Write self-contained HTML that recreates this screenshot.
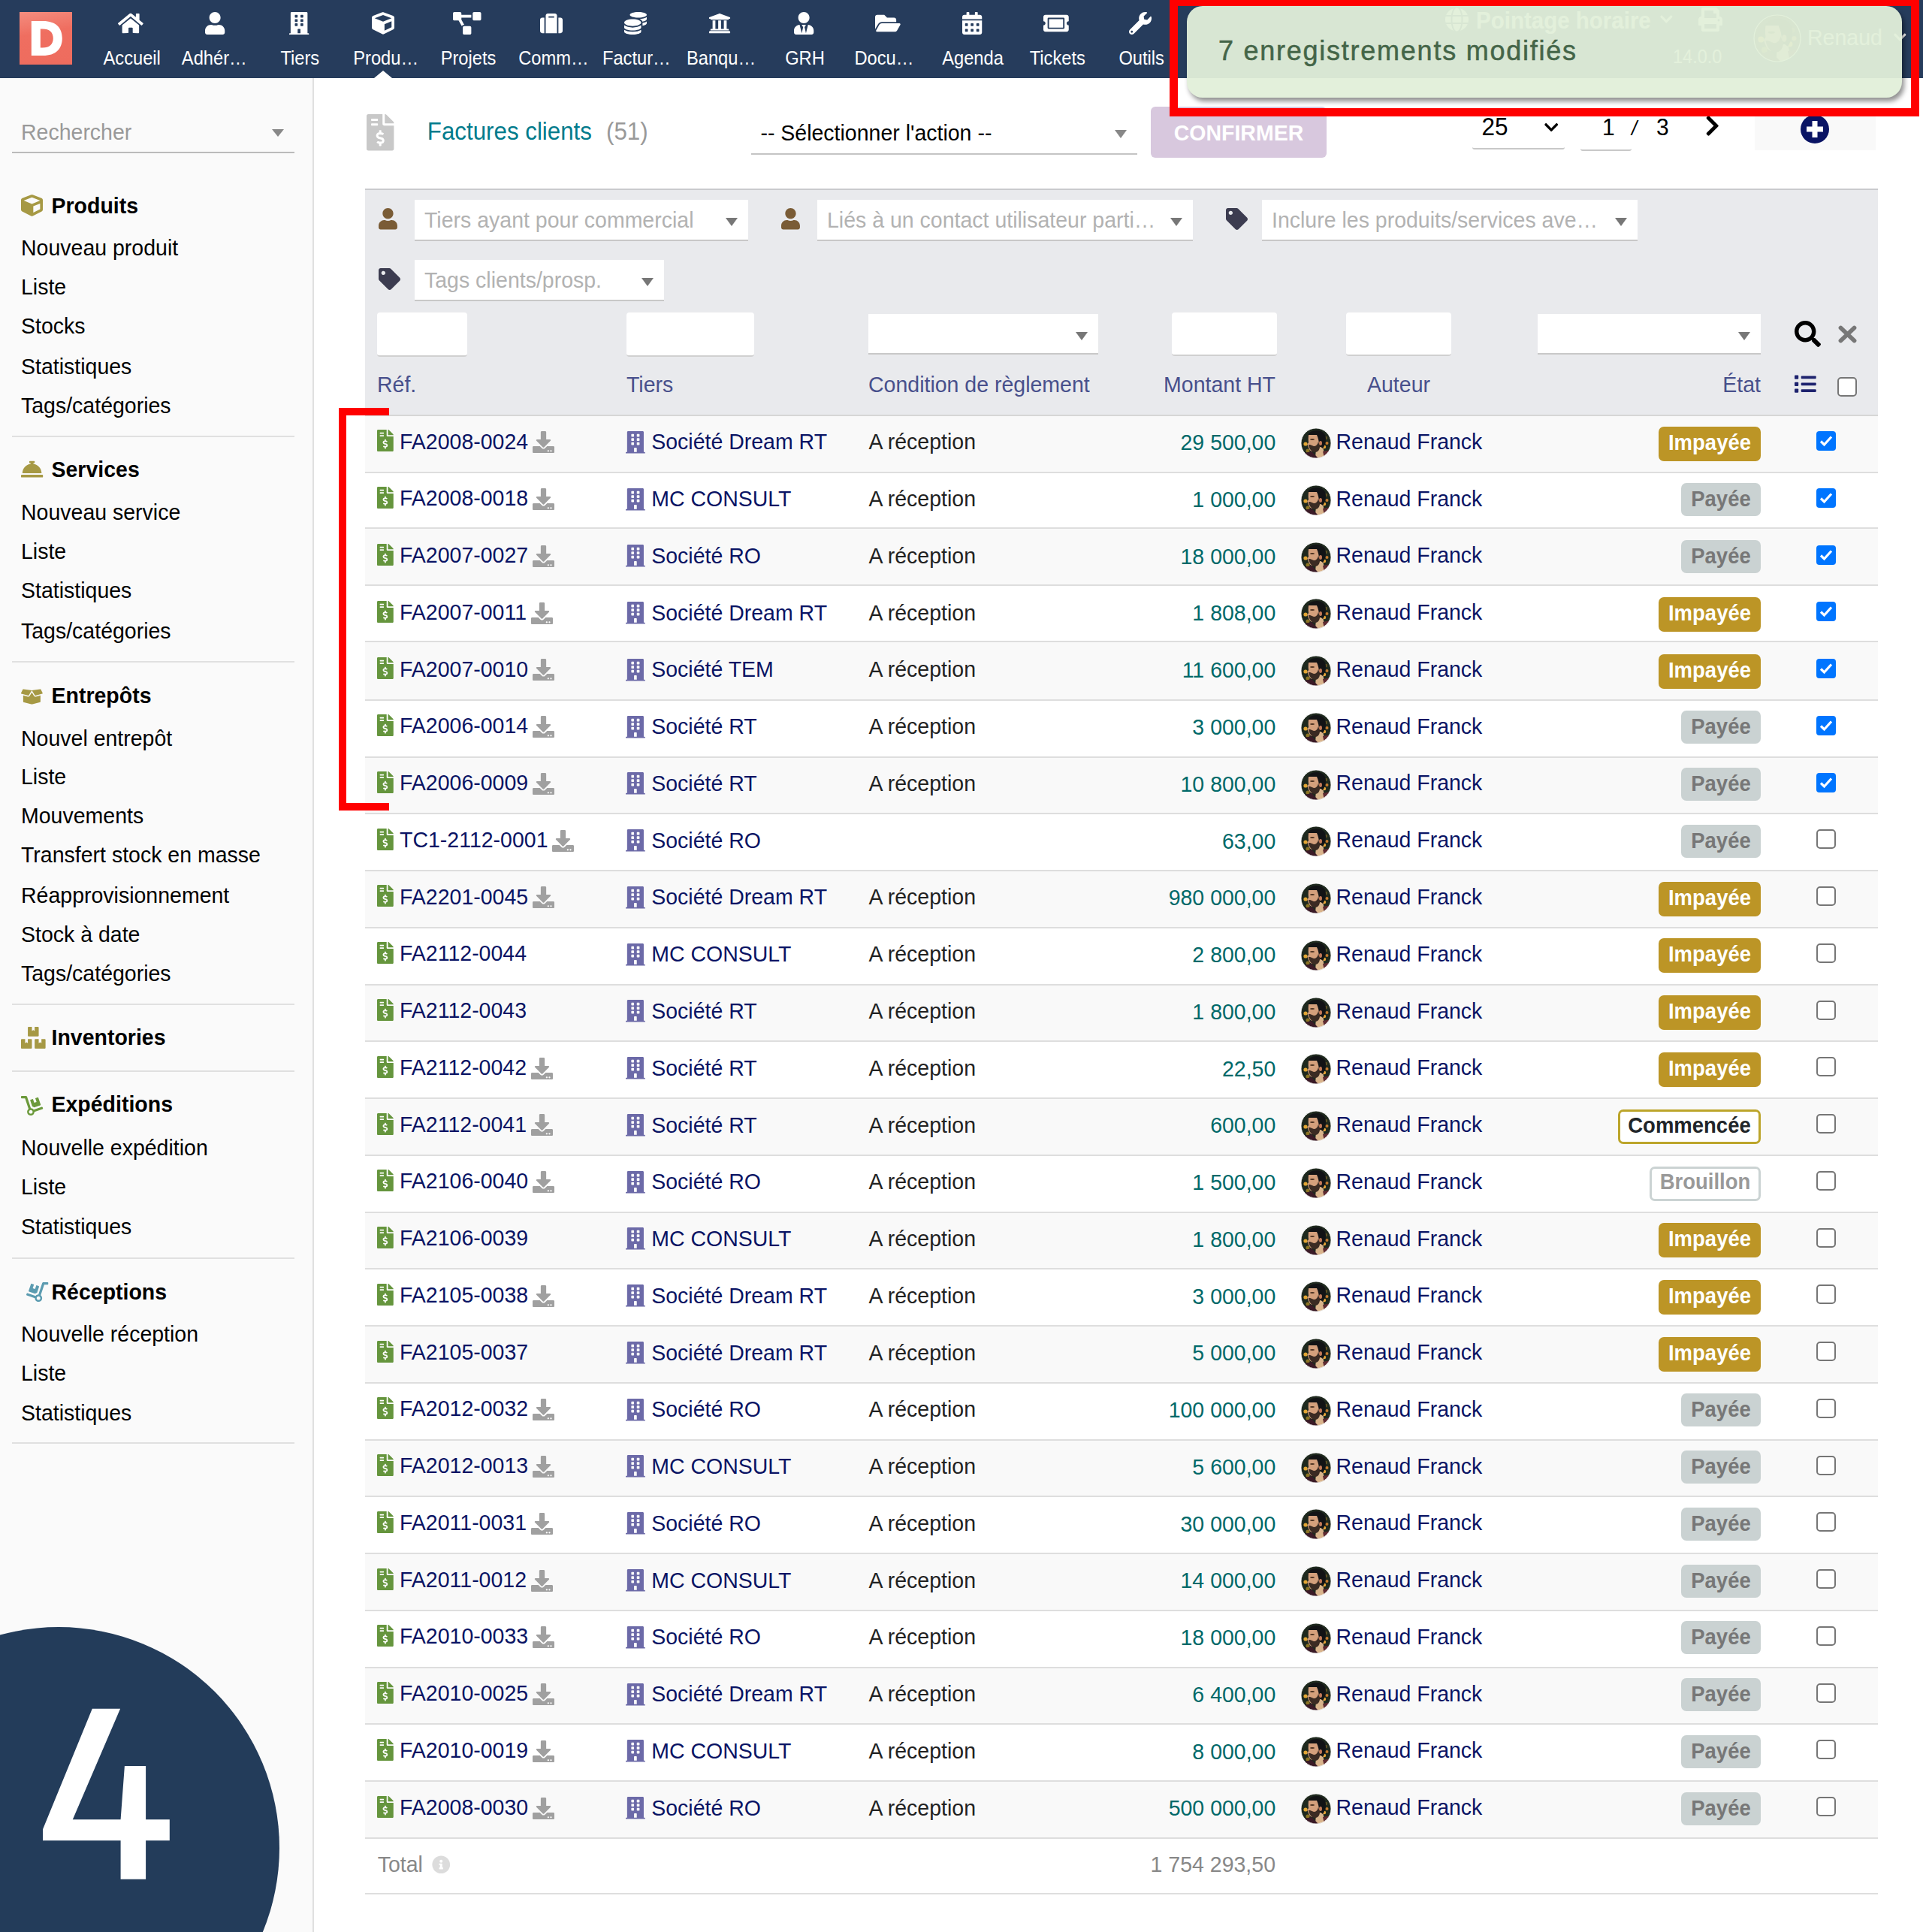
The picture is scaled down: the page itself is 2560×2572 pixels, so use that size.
<!DOCTYPE html><html><head><meta charset="utf-8"><title>Factures clients</title><style>
html,body{margin:0;padding:0;}
body{width:2560px;height:2572px;position:relative;overflow:hidden;background:#fff;font-family:"Liberation Sans",sans-serif;}
.t{position:absolute;white-space:nowrap;line-height:normal;}
.b{position:absolute;box-sizing:border-box;}
.i{position:absolute;overflow:visible;}

</style></head><body>
<svg style="position:absolute;width:0;height:0"><defs><clipPath id="avc"><circle cx="20" cy="20" r="20"/></clipPath><g id="av"><g clip-path="url(#avc)"><rect width="40" height="40" fill="#1f291e"/><circle cx="6" cy="21" r="2.6" fill="#e2a634"/><circle cx="31" cy="25" r="2.2" fill="#e8a536"/><circle cx="34.5" cy="20" r="2" fill="#c47a30"/><circle cx="9" cy="30" r="2.6" fill="#8c7424"/><circle cx="33" cy="13" r="2.2" fill="#5e5226"/><path d="M20 27 L29 24 L32 40 L19 40z" fill="#d9b48c"/><path d="M0 40 L5 33 L14 31 L23 40z" fill="#3a1a26"/><path d="M29 31 L40 29 L40 40 L31 40z" fill="#5e2a32"/><path d="M9 12 C9 6 14 3 21 3 C28 3 33 7 33 14 C33 19 31 24 29 27 L25 24 L22 16 L10 16z" fill="#121315"/><path d="M10 9 L21 9 C23 13 24 18 24 23 C23 28 20 31 16 31 C13 31 11 29 10 26 L8.3 21.5 L10 19 C9.5 15 9.5 12 10 9z" fill="#d4a07c"/><path d="M10 22 C11 28 14 32 19 32 C23 32 25 28 25 24 L23 18 C22 22 20 24 17 24 L12 22z" fill="#3b2b23"/><ellipse cx="15" cy="15" rx="3" ry="0.9" fill="#4a3020"/><ellipse cx="26" cy="20" rx="2" ry="3" fill="#c27a58"/></g><circle cx="20" cy="20" r="20" fill="none" stroke="#fff" stroke-width="0.8"/></g></defs></svg>
<div class="b" style="left:0px;top:104px;width:418px;height:2468px;background:#fafafa;"></div>
<div class="b" style="left:416px;top:104px;width:2px;height:2468px;background:#e0e0e0;"></div>
<div class="b" style="left:0px;top:0px;width:2560px;height:104px;background:#263c5c;"></div>
<div class="b" style="left:26px;top:16px;width:70px;height:70px;background:linear-gradient(170deg,#f48d7f 0%,#ef6e60 40%,#ee6c5e 100%);"></div>
<svg class="i" style="left:26px;top:16px;width:70px;height:70px" viewBox="0 0 70 70"><path fill="#fff" fill-rule="evenodd" d="M15.8 12 h15.5 c17 0 25.5 9 25.5 23 s-8.5 23-25.5 23 H15.8z M27.8 22.5 v25 h3 c9 0 14-4.5 14-12.5 s-5-12.5-14-12.5z"/></svg>
<svg class="i" style="left:157.12px;top:16.00px;width:33.75px;height:30px;" viewBox="0 0 576 512"><path fill="#fff" d="M280.37 148.26L96 300.11V464a16 16 0 0 0 16 16l112.06-.29a16 16 0 0 0 15.92-16V368a16 16 0 0 1 16-16h64a16 16 0 0 1 16 16v95.64a16 16 0 0 0 16 16.05L464 480a16 16 0 0 0 16-16V300L295.67 148.26a12.19 12.19 0 0 0-15.3 0zM571.6 251.47L488 182.56V44.05a12 12 0 0 0-12-12h-56a12 12 0 0 0-12 12v72.61L318.47 43a48 48 0 0 0-61 0L4.34 251.47a12 12 0 0 0-1.6 16.9l25.5 31A12 12 0 0 0 45.15 301l235.22-193.74a12.19 12.19 0 0 1 15.3 0L530.9 301a12 12 0 0 0 16.9-1.6l25.5-31a12 12 0 0 0-1.7-16.93z"/></svg>
<div class="t " style="left:-124.30000000000001px;width:600px;text-align:center;top:64.5px;font-size:23.7px;color:#fff;transform:scaleY(1.06);transform-origin:0 21px;">Accueil</div>
<svg class="i" style="left:272.88px;top:16.00px;width:26.25px;height:30px;" viewBox="0 0 448 512"><path fill="#fff" d="M224 256c70.7 0 128-57.3 128-128S294.7 0 224 0 96 57.3 96 128s57.3 128 128 128zm89.6 32h-16.7c-22.2 10.2-46.9 16-72.9 16s-50.6-5.8-72.9-16h-16.7C60.2 288 0 348.2 0 422.4V464c0 26.5 21.5 48 48 48h352c26.5 0 48-21.5 48-48v-41.6c0-74.2-60.2-134.4-134.4-134.4z"/></svg>
<div class="t " style="left:-14.699999999999989px;width:600px;text-align:center;top:64.5px;font-size:23.7px;color:#fff;transform:scaleY(1.06);transform-origin:0 21px;">Adhér…</div>
<svg class="i" style="left:385.18px;top:16.00px;width:26.25px;height:30px;" viewBox="0 0 448 512"><path fill="#fff" d="M436 480h-20V24c0-13.255-10.745-24-24-24H56C42.745 0 32 10.745 32 24v456H12c-6.627 0-12 5.373-12 12v20h448v-20c0-6.627-5.373-12-12-12zM128 76c0-6.627 5.373-12 12-12h40c6.627 0 12 5.373 12 12v40c0 6.627-5.373 12-12 12h-40c-6.627 0-12-5.373-12-12V76zm0 96c0-6.627 5.373-12 12-12h40c6.627 0 12 5.373 12 12v40c0 6.627-5.373 12-12 12h-40c-6.627 0-12-5.373-12-12v-40zm52 148h-40c-6.627 0-12-5.373-12-12v-40c0-6.627 5.373-12 12-12h40c6.627 0 12 5.373 12 12v40c0 6.627-5.373 12-12 12zm76 160h-64v-84c0-6.627 5.373-12 12-12h40c6.627 0 12 5.373 12 12v84zm64-172c0 6.627-5.373 12-12 12h-40c-6.627 0-12-5.373-12-12v-40c0-6.627 5.373-12 12-12h40c6.627 0 12 5.373 12 12v40zm0-96c0 6.627-5.373 12-12 12h-40c-6.627 0-12-5.373-12-12v-40c0-6.627 5.373-12 12-12h40c6.627 0 12 5.373 12 12v40zm0-96c0 6.627-5.373 12-12 12h-40c-6.627 0-12-5.373-12-12V76c0-6.627 5.373-12 12-12h40c6.627 0 12 5.373 12 12v40z"/></svg>
<div class="t " style="left:99.30000000000001px;width:600px;text-align:center;top:64.5px;font-size:23.7px;color:#fff;transform:scaleY(1.06);transform-origin:0 21px;">Tiers</div>
<svg class="i" style="left:495.00px;top:16.00px;width:30.00px;height:30px;" viewBox="0 0 512 512"><path fill="#fff" d="M239.1 6.3l-208 78c-18.7 7-31.1 25-31.1 45v225.1c0 18.2 10.3 34.8 26.5 42.9l208 104c13.5 6.8 29.4 6.8 42.9 0l208-104c16.3-8.1 26.5-24.8 26.5-42.9V129.3c0-20-12.4-37.9-31.1-44.9l-208-78C262 2.2 250 2.2 239.1 6.3zM256 68.4l192 72v1.1l-192 78-192-78v-1.1l192-72zm32 356V275.5l160-65v133.9l-160 80z"/></svg>
<div class="t " style="left:213.70000000000005px;width:600px;text-align:center;top:64.5px;font-size:23.7px;color:#fff;transform:scaleY(1.06);transform-origin:0 21px;">Produ…</div>
<svg class="i" style="left:603.25px;top:16.00px;width:37.50px;height:30px;" viewBox="0 0 640 512"><path fill="#fff" d="M384 320H256c-17.67 0-32 14.33-32 32v128c0 17.67 14.33 32 32 32h128c17.67 0 32-14.33 32-32V352c0-17.67-14.33-32-32-32zM192 32c0-17.67-14.33-32-32-32H32C14.33 0 0 14.33 0 32v128c0 17.67 14.33 32 32 32h95.72l73.16 128.04C211.98 300.98 232.4 288 256 288h.28L192 175.51V128h224V64H192V32zM608 0H480c-17.67 0-32 14.33-32 32v128c0 17.67 14.33 32 32 32h128c17.67 0 32-14.33 32-32V32c0-17.67-14.33-32-32-32z"/></svg>
<div class="t " style="left:323.5px;width:600px;text-align:center;top:64.5px;font-size:23.7px;color:#fff;transform:scaleY(1.06);transform-origin:0 21px;">Projets</div>
<svg class="i" style="left:719.00px;top:16.00px;width:30.00px;height:30px;" viewBox="0 0 512 512"><path fill="#fff" d="M128 480h256V80c0-26.5-21.5-48-48-48H176c-26.5 0-48 21.5-48 48v400zm64-384h128v32H192V96zm320 80v256c0 26.5-21.5 48-48 48h-48V128h48c26.5 0 48 21.5 48 48zM96 480H48c-26.5 0-48-21.5-48-48V176c0-26.5 21.5-48 48-48h48v352z"/></svg>
<div class="t " style="left:436.9px;width:600px;text-align:center;top:64.5px;font-size:23.7px;color:#fff;transform:scaleY(1.06);transform-origin:0 21px;">Comm…</div>
<svg class="i" style="left:831.00px;top:16.00px;width:30.00px;height:30px;" viewBox="0 0 512 512"><path fill="#fff" d="M0 405.3V448c0 35.3 86 64 192 64s192-28.7 192-64v-42.7C342.7 434.4 267.2 448 192 448S41.3 434.4 0 405.3zM320 128c106 0 192-28.7 192-64S426 0 320 0 128 28.7 128 64s86 64 192 64zM0 300.4V352c0 35.3 86 64 192 64s192-28.7 192-64v-51.6c-41.3 34-116.9 51.6-192 51.6S41.3 334.4 0 300.4zm416 11c57.3-11.1 96-31.7 96-55.4v-42.7c-23.2 16.4-57.3 27.6-96 34.5v63.6zM192 160C86 160 0 195.8 0 240s86 80 192 80 192-35.8 192-80-86-80-192-80zm219.3 56.3c60-10.8 100.7-32 100.7-56.3v-42.7c-35.5 25.1-96.5 38.6-160.7 41.8 29.5 14.3 51.2 33.5 60 57.2z"/></svg>
<div class="t " style="left:547.4px;width:600px;text-align:center;top:64.5px;font-size:23.7px;color:#fff;transform:scaleY(1.06);transform-origin:0 21px;">Factur…</div>
<svg class="i" style="left:943.00px;top:16.00px;width:30.00px;height:30px;" viewBox="0 0 512 512"><path fill="#fff" d="M496 128v16a8 8 0 0 1-8 8h-24v12c0 6.627-5.373 12-12 12H60c-6.627 0-12-5.373-12-12v-12H24a8 8 0 0 1-8-8v-16a8 8 0 0 1 4.941-7.392l232-88a7.996 7.996 0 0 1 6.118 0l232 88A8 8 0 0 1 496 128zm-24 304H40c-13.255 0-24 10.745-24 24v16a8 8 0 0 0 8 8h464a8 8 0 0 0 8-8v-16c0-13.255-10.745-24-24-24zM96 192v192H60c-6.627 0-12 5.373-12 12v20h416v-20c0-6.627-5.373-12-12-12h-36V192h-64v192h-64V192h-64v192h-64V192H96z"/></svg>
<div class="t " style="left:660px;width:600px;text-align:center;top:64.5px;font-size:23.7px;color:#fff;transform:scaleY(1.06);transform-origin:0 21px;">Banqu…</div>
<svg class="i" style="left:1056.88px;top:16.00px;width:26.25px;height:30px;" viewBox="0 0 448 512"><path fill="#fff" d="M224 256c70.7 0 128-57.3 128-128S294.7 0 224 0 96 57.3 96 128s57.3 128 128 128zm95.8 32.6L272 480l-32-136 32-56h-96l32 56-32 136-47.8-191.4C56.9 292 0 350.3 0 422.4V464c0 26.5 21.5 48 48 48h352c26.5 0 48-21.5 48-48v-41.6c0-72.1-56.9-130.4-128.2-133.8z"/></svg>
<div class="t " style="left:771.5px;width:600px;text-align:center;top:64.5px;font-size:23.7px;color:#fff;transform:scaleY(1.06);transform-origin:0 21px;">GRH</div>
<svg class="i" style="left:1165.12px;top:16.00px;width:33.75px;height:30px;" viewBox="0 0 576 512"><path fill="#fff" d="M572.694 292.093L500.27 416.248A63.997 63.997 0 0 1 444.989 448H45.025c-18.523 0-30.064-20.093-20.731-36.093l72.424-124.155A64 64 0 0 1 152 256h399.964c18.523 0 30.064 20.093 20.73 36.093zM152 224h328v-48c0-26.51-21.49-48-48-48H272l-64-64H48C21.49 64 0 85.49 0 112v278.046l69.077-118.418C86.214 242.25 117.989 224 152 224z"/></svg>
<div class="t " style="left:877px;width:600px;text-align:center;top:64.5px;font-size:23.7px;color:#fff;transform:scaleY(1.06);transform-origin:0 21px;">Docu…</div>
<svg class="i" style="left:1280.88px;top:16.00px;width:26.25px;height:30px;" viewBox="0 0 448 512"><path fill="#fff" d="M0 464c0 26.5 21.5 48 48 48h352c26.5 0 48-21.5 48-48V192H0v272zm320-196c0-6.6 5.4-12 12-12h40c6.6 0 12 5.4 12 12v40c0 6.6-5.4 12-12 12h-40c-6.6 0-12-5.4-12-12v-40zm0 128c0-6.6 5.4-12 12-12h40c6.6 0 12 5.4 12 12v40c0 6.6-5.4 12-12 12h-40c-6.6 0-12-5.4-12-12v-40zM192 268c0-6.6 5.4-12 12-12h40c6.6 0 12 5.4 12 12v40c0 6.6-5.4 12-12 12h-40c-6.6 0-12-5.4-12-12v-40zm0 128c0-6.6 5.4-12 12-12h40c6.6 0 12 5.4 12 12v40c0 6.6-5.4 12-12 12h-40c-6.6 0-12-5.4-12-12v-40zM64 268c0-6.6 5.4-12 12-12h40c6.6 0 12 5.4 12 12v40c0 6.6-5.4 12-12 12H76c-6.6 0-12-5.4-12-12v-40zm0 128c0-6.6 5.4-12 12-12h40c6.6 0 12 5.4 12 12v40c0 6.6-5.4 12-12 12H76c-6.6 0-12-5.4-12-12v-40zM400 64h-48V16c0-8.8-7.2-16-16-16h-32c-8.8 0-16 7.2-16 16v48H160V16c0-8.8-7.2-16-16-16h-32c-8.8 0-16 7.2-16 16v48H48C21.5 64 0 85.5 0 112v48h448v-48c0-26.5-21.5-48-48-48z"/></svg>
<div class="t " style="left:995px;width:600px;text-align:center;top:64.5px;font-size:23.7px;color:#fff;transform:scaleY(1.06);transform-origin:0 21px;">Agenda</div>
<svg class="i" style="left:1389.12px;top:16.00px;width:33.75px;height:30px;" viewBox="0 0 576 512"><path fill="#fff" d="M128 160h320v192H128V160zm400 96c0 26.51 21.49 48 48 48v96c0 26.51-21.49 48-48 48H48c-26.51 0-48-21.49-48-48v-96c26.51 0 48-21.49 48-48s-21.49-48-48-48v-96c0-26.51 21.49-48 48-48h480c26.51 0 48 21.49 48 48v96c-26.51 0-48 21.49-48 48zm-48-104c0-13.255-10.745-24-24-24H120c-13.255 0-24 10.745-24 24v208c0 13.255 10.745 24 24 24h336c13.255 0 24-10.745 24-24V152z"/></svg>
<div class="t " style="left:1107.8px;width:600px;text-align:center;top:64.5px;font-size:23.7px;color:#fff;transform:scaleY(1.06);transform-origin:0 21px;">Tickets</div>
<svg class="i" style="left:1503.00px;top:16.00px;width:30.00px;height:30px;" viewBox="0 0 512 512"><path fill="#fff" d="M507.73 109.1c-2.24-9.03-13.54-12.09-20.12-5.51l-74.36 74.36-67.88-11.31-11.31-67.880 74.36-74.36c6.62-6.62 3.43-17.9-5.66-20.16-47.38-11.74-99.55.91-136.58 37.93-39.64 39.64-50.55 97.1-34.05 147.2L18.74 402.76c-24.99 24.99-24.99 65.51 0 90.5 24.99 24.99 65.51 24.99 90.5 0l213.21-213.21c50.12 16.71 107.47 5.68 147.37-34.22 37.07-37.07 49.7-89.32 37.91-136.73zM64 472c-13.25 0-24-10.75-24-24 0-13.26 10.75-24 24-24s24 10.74 24 24c0 13.25-10.75 24-24 24z"/></svg>
<div class="t " style="left:1219.7px;width:600px;text-align:center;top:64.5px;font-size:23.7px;color:#fff;transform:scaleY(1.06);transform-origin:0 21px;">Outils</div>
<svg class="i" style="left:498px;top:94px;width:24px;height:10px" viewBox="0 0 24 10"><path d="M0 10 L12 0 L24 10Z" fill="#fff"/></svg>
<svg class="i" style="left:1924.00px;top:10.00px;width:31.00px;height:32px;" viewBox="0 0 496 512"><path fill="#fff" d="M336.5 160C322 70.7 287.8 8 248 8s-74 62.7-88.5 152h177zM152 256c0 22.2 1.2 43.5 3.3 64h185.3c2.1-20.5 3.3-41.8 3.3-64s-1.2-43.5-3.3-64H155.3c-2.1 20.5-3.3 41.8-3.3 64zm324.7-96c-28.6-67.9-86.5-120.4-158-141.6 24.4 33.8 41.2 84.7 50 141.6h108zM177.2 18.4C105.8 39.6 47.8 92.1 19.3 160h108c8.7-56.9 25.5-107.8 49.9-141.6zM487.4 192H372.7c2.1 21 3.3 42.5 3.3 64s-1.2 43-3.3 64h114.6c5.5-20.5 8.6-41.8 8.6-64s-3.1-43.5-8.5-64zM120 256c0-21.5 1.2-43 3.3-64H8.6C3.2 212.5 0 233.8 0 256s3.2 43.5 8.6 64h114.6c-2-21-3.2-42.5-3.2-64zm39.5 96c14.5 89.3 48.7 152 88.5 152s74-62.7 88.5-152h-177zm159.3 141.6c71.4-21.2 129.4-73.7 158-141.6h-108c-8.8 56.9-25.6 107.8-50 141.6zM19.3 352c28.6 67.9 86.5 120.4 158 141.6-24.4-33.8-41.2-84.7-50-141.6h-108z"/></svg>
<div class="t " style="left:1965px;top:10.799999999999997px;font-size:29.5px;color:#fff;font-weight:bold;transform:scaleY(1.06);transform-origin:0 27px;">Pointage horaire</div>
<svg class="i" style="left:2210.00px;top:16.00px;width:16.62px;height:19px;" viewBox="0 0 448 512"><path fill="#fff" d="M207.029 381.476L12.686 187.132c-9.373-9.373-9.373-24.569 0-33.941l22.667-22.667c9.357-9.357 24.522-9.375 33.901-.04L224 284.505l154.745-154.021c9.379-9.335 24.544-9.317 33.901.04l22.667 22.667c9.373 9.373 9.373 24.569 0 33.941L240.971 381.476c-9.373 9.372-24.569 9.372-33.942 0z"/></svg>
<svg class="i" style="left:2261.00px;top:10.00px;width:32.00px;height:32px;" viewBox="0 0 512 512"><path fill="#fff" d="M448 192V77.25c0-8.49-3.37-16.62-9.37-22.63L393.37 9.37c-6-6-14.14-9.37-22.630-9.37H96C78.33 0 64 14.33 64 32v160c-35.35 0-64 28.65-64 64v112c0 8.84 7.16 16 16 16h48v96c0 17.67 14.33 32 32 32h320c17.67 0 32-14.33 32-32v-96h48c8.84 0 16-7.16 16-16V256c0-35.35-28.65-64-64-64zm-64 256H128v-96h256v96zm0-224H128V64h192v48c0 8.84 7.16 16 16 16h48v96zm48 72c-13.25 0-24-10.75-24-24 0-13.26 10.75-24 24-24s24 10.74 24 24c0 13.25-10.75 24-24 24z"/></svg>
<div class="t " style="left:2227px;top:62.7px;font-size:23.5px;color:#fff;transform:scaleY(1.06);transform-origin:0 21px;">14.0.0</div>
<svg class="i" style="left:2335px;top:20px;width:62px;height:62px" viewBox="0 0 40 40"><use href="#av"/></svg>
<div class="t " style="left:2406px;top:34px;font-size:28.5px;color:#fff;transform:scaleY(1.06);transform-origin:0 26px;">Renaud</div>
<svg class="i" style="left:2521.00px;top:40.00px;width:16.62px;height:19px;" viewBox="0 0 448 512"><path fill="#fff" d="M207.029 381.476L12.686 187.132c-9.373-9.373-9.373-24.569 0-33.941l22.667-22.667c9.357-9.357 24.522-9.375 33.901-.04L224 284.505l154.745-154.021c9.379-9.335 24.544-9.317 33.901.04l22.667 22.667c9.373 9.373 9.373 24.569 0 33.941L240.971 381.476c-9.373 9.372-24.569 9.372-33.942 0z"/></svg>
<div class="t " style="left:28px;top:159.5px;font-size:28.5px;color:#999;transform:scaleY(1.06);transform-origin:0 26px;">Rechercher</div>
<div class="b" style="left:16px;top:202px;width:376px;height:2px;background:#bbb;"></div>
<svg class="i" style="left:362px;top:172px;width:16px;height:10px" viewBox="0 0 16 10"><path d="M0 0 H16 L8 10Z" fill="#888"/></svg>
<svg class="i" style="left:28.00px;top:259.00px;width:29.00px;height:29px;" viewBox="0 0 512 512"><path fill="#a69944" d="M239.1 6.3l-208 78c-18.7 7-31.1 25-31.1 45v225.1c0 18.2 10.3 34.8 26.5 42.9l208 104c13.5 6.8 29.4 6.8 42.9 0l208-104c16.3-8.1 26.5-24.8 26.5-42.9V129.3c0-20-12.4-37.9-31.1-44.9l-208-78C262 2.2 250 2.2 239.1 6.3zM256 68.4l192 72v1.1l-192 78-192-78v-1.1l192-72zm32 356V275.5l160-65v133.9l-160 80z"/></svg>
<div class="t " style="left:68.5px;top:257.5px;font-size:28.5px;color:#000;font-weight:bold;transform:scaleY(1.06);transform-origin:0 26px;">Produits</div>
<div class="t " style="left:28px;top:314px;font-size:28.5px;color:#000;transform:scaleY(1.06);transform-origin:0 26px;">Nouveau produit</div>
<div class="t " style="left:28px;top:366px;font-size:28.5px;color:#000;transform:scaleY(1.06);transform-origin:0 26px;">Liste</div>
<div class="t " style="left:28px;top:417.8px;font-size:28.5px;color:#000;transform:scaleY(1.06);transform-origin:0 26px;">Stocks</div>
<div class="t " style="left:28px;top:471.9px;font-size:28.5px;color:#000;transform:scaleY(1.06);transform-origin:0 26px;">Statistiques</div>
<div class="t " style="left:28px;top:523.7px;font-size:28.5px;color:#000;transform:scaleY(1.06);transform-origin:0 26px;">Tags/catégories</div>
<div class="b" style="left:16px;top:579.7px;width:376px;height:2px;background:#e0e0e0;"></div>
<svg class="i" style="left:28.00px;top:610.20px;width:29.20px;height:29.2px;" viewBox="0 0 512 512"><path fill="#a69944" d="M288 130.54V112h16c8.84 0 16-7.16 16-16V80c0-8.84-7.16-16-16-16h-96c-8.84 0-16 7.16-16 16v16c0 8.84 7.16 16 16 16h16v18.54C115.49 146.11 32 239.18 32 352h448c0-112.82-83.49-205.89-192-221.460zM496 384H16c-8.84 0-16 7.16-16 16v32c0 8.84 7.16 16 16 16h480c8.84 0 16-7.16 16-16v-32c0-8.84-7.160-16-16-16z"/></svg>
<div class="t " style="left:68.5px;top:609.2px;font-size:28.5px;color:#000;font-weight:bold;transform:scaleY(1.06);transform-origin:0 26px;">Services</div>
<div class="t " style="left:28px;top:666.1px;font-size:28.5px;color:#000;transform:scaleY(1.06);transform-origin:0 26px;">Nouveau service</div>
<div class="t " style="left:28px;top:717.9px;font-size:28.5px;color:#000;transform:scaleY(1.06);transform-origin:0 26px;">Liste</div>
<div class="t " style="left:28px;top:769.7px;font-size:28.5px;color:#000;transform:scaleY(1.06);transform-origin:0 26px;">Statistiques</div>
<div class="t " style="left:28px;top:823.7px;font-size:28.5px;color:#000;transform:scaleY(1.06);transform-origin:0 26px;">Tags/catégories</div>
<div class="b" style="left:16px;top:879.7px;width:376px;height:2px;background:#e0e0e0;"></div>
<svg class="i" style="left:28.00px;top:915.80px;width:28.75px;height:23px;" viewBox="0 0 640 512"><path fill="#a69944" d="M425.7 256c-16.9 0-32.8-9-41.4-23.4L320 126l-64.2 106.6c-8.7 14.5-24.6 23.5-41.5 23.5-4.5 0-9-.6-13.3-1.9L64 215v178c0 14.7 10 27.5 24.2 31l216.2 54.1c10.2 2.5 20.9 2.5 31 0L551.8 424c14.2-3.6 24.2-16.4 24.2-31V215l-137 39.1c-4.3 1.3-8.8 1.9-13.3 1.9zm212.6-112.2L586.8 41c-3.1-6.2-9.8-9.8-16.7-8.9L320 64l91.7 152.1c3.8 6.3 11.4 9.3 18.5 7.3l197.9-56.5c9.9-2.9 14.7-13.9 10.2-23.1zM53.2 41L1.7 143.8c-4.6 9.2.3 20.2 10.1 23l197.9 56.5c7.1 2 14.7-1 18.5-7.3L320 64 69.8 32.1c-6.9-.8-13.5 2.7-16.6 8.9z"/></svg>
<div class="t " style="left:68.5px;top:910px;font-size:28.5px;color:#000;font-weight:bold;transform:scaleY(1.06);transform-origin:0 26px;">Entrepôts</div>
<div class="t " style="left:28px;top:966.6px;font-size:28.5px;color:#000;transform:scaleY(1.06);transform-origin:0 26px;">Nouvel entrepôt</div>
<div class="t " style="left:28px;top:1017.9000000000001px;font-size:28.5px;color:#000;transform:scaleY(1.06);transform-origin:0 26px;">Liste</div>
<div class="t " style="left:28px;top:1070.1px;font-size:28.5px;color:#000;transform:scaleY(1.06);transform-origin:0 26px;">Mouvements</div>
<div class="t " style="left:28px;top:1122.3px;font-size:28.5px;color:#000;transform:scaleY(1.06);transform-origin:0 26px;">Transfert stock en masse</div>
<div class="t " style="left:28px;top:1176.4px;font-size:28.5px;color:#000;transform:scaleY(1.06);transform-origin:0 26px;">Réapprovisionnement</div>
<div class="t " style="left:28px;top:1227.7px;font-size:28.5px;color:#000;transform:scaleY(1.06);transform-origin:0 26px;">Stock à date</div>
<div class="t " style="left:28px;top:1279.9px;font-size:28.5px;color:#000;transform:scaleY(1.06);transform-origin:0 26px;">Tags/catégories</div>
<div class="b" style="left:16px;top:1335.7px;width:376px;height:2px;background:#e0e0e0;"></div>
<svg class="i" style="left:27.70px;top:1366.60px;width:32.62px;height:29px;" viewBox="0 0 576 512"><path fill="#a69944" d="M560 288h-80v96l-32-21.3-32 21.3v-96h-80c-8.8 0-16 7.2-16 16v192c0 8.8 7.2 16 16 16h224c8.8 0 16-7.2 16-16V304c0-8.8-7.2-16-16-16zm-384-64h224c8.8 0 16-7.2 16-16V16c0-8.8-7.2-16-16-16h-80v96l-32-21.3L256 96V0h-80c-8.8 0-16 7.2-16 16v192c0 8.8 7.2 16 16 16zm64 64h-80v96l-32-21.3L96 384v-96H16c-8.8 0-16 7.2-16 16v192c0 8.8 7.2 16 16 16h224c8.8 0 16-7.2 16-16V304c0-8.8-7.2-16-16-16z"/></svg>
<div class="t " style="left:68.5px;top:1365px;font-size:28.5px;color:#000;font-weight:bold;transform:scaleY(1.06);transform-origin:0 26px;">Inventories</div>
<div class="b" style="left:16px;top:1425.2px;width:376px;height:2px;background:#e0e0e0;"></div>
<svg class="i" style="left:28.00px;top:1459.00px;width:29.25px;height:26px;" viewBox="0 0 576 512"><path fill="#6c9a3c" d="M294.2 277.7c18 5 34.7 13.4 49.5 24.7l161.5-53.8c8.4-2.8 12.9-11.9 10.1-20.2L454.9 47.2c-2.8-8.4-11.9-12.9-20.2-10.1l-61.1 20.4 33.1 99.4L346 177l-33.1-99.4-61.6 20.5c-8.4 2.8-12.9 11.9-10.1 20.2l53 159.4zm281 48.7L565 296c-2.8-8.4-11.9-12.9-20.2-10.1l-213.5 71.2c-17.2-22-43.6-36.4-73.5-37L158.4 21.9C154 8.8 141.8 0 128 0H16C7.2 0 0 7.2 0 16v32c0 8.8 7.2 16 16 16h88.9l92.2 276.7c-26.1 20.4-41.7 53.6-36 90.5 6.1 39.4 37.9 72.3 77.3 79.2 60.2 10.7 112.3-34.8 113.4-92.6l213.3-71.2c8.3-2.8 12.9-11.8 10.1-20.2zM256 464c-26.5 0-48-21.5-48-48s21.5-48 48-48 48 21.5 48 48-21.5 48-48 48z"/></svg>
<div class="t " style="left:68.5px;top:1454px;font-size:28.5px;color:#000;font-weight:bold;transform:scaleY(1.06);transform-origin:0 26px;">Expéditions</div>
<div class="t " style="left:28px;top:1512.3px;font-size:28.5px;color:#000;transform:scaleY(1.06);transform-origin:0 26px;">Nouvelle expédition</div>
<div class="t " style="left:28px;top:1564.2px;font-size:28.5px;color:#000;transform:scaleY(1.06);transform-origin:0 26px;">Liste</div>
<div class="t " style="left:28px;top:1617px;font-size:28.5px;color:#000;transform:scaleY(1.06);transform-origin:0 26px;">Statistiques</div>
<div class="b" style="left:16px;top:1673.7px;width:376px;height:2px;background:#e0e0e0;"></div>
<svg class="i" style="left:35.00px;top:1707.00px;width:29.25px;height:26px;transform:scaleX(-1);" viewBox="0 0 576 512"><path fill="#5b9bb0" d="M294.2 277.7c18 5 34.7 13.4 49.5 24.7l161.5-53.8c8.4-2.8 12.9-11.9 10.1-20.2L454.9 47.2c-2.8-8.4-11.9-12.9-20.2-10.1l-61.1 20.4 33.1 99.4L346 177l-33.1-99.4-61.6 20.5c-8.4 2.8-12.9 11.9-10.1 20.2l53 159.4zm281 48.7L565 296c-2.8-8.4-11.9-12.9-20.2-10.1l-213.5 71.2c-17.2-22-43.6-36.4-73.5-37L158.4 21.9C154 8.8 141.8 0 128 0H16C7.2 0 0 7.2 0 16v32c0 8.8 7.2 16 16 16h88.9l92.2 276.7c-26.1 20.4-41.7 53.6-36 90.5 6.1 39.4 37.9 72.3 77.3 79.2 60.2 10.7 112.3-34.8 113.4-92.6l213.3-71.2c8.3-2.8 12.9-11.8 10.1-20.2zM256 464c-26.5 0-48-21.5-48-48s21.5-48 48-48 48 21.5 48 48-21.5 48-48 48z"/></svg>
<div class="t " style="left:68.5px;top:1703.5px;font-size:28.5px;color:#000;font-weight:bold;transform:scaleY(1.06);transform-origin:0 26px;">Réceptions</div>
<div class="t " style="left:28px;top:1760px;font-size:28.5px;color:#000;transform:scaleY(1.06);transform-origin:0 26px;">Nouvelle réception</div>
<div class="t " style="left:28px;top:1811.8px;font-size:28.5px;color:#000;transform:scaleY(1.06);transform-origin:0 26px;">Liste</div>
<div class="t " style="left:28px;top:1864.7px;font-size:28.5px;color:#000;transform:scaleY(1.06);transform-origin:0 26px;">Statistiques</div>
<div class="b" style="left:16px;top:1919.7px;width:376px;height:2px;background:#e0e0e0;"></div>
<svg class="i" style="left:0;top:0;width:2560px;height:2572px;pointer-events:none" viewBox="0 0 2560 2572"><circle cx="78" cy="2460" r="294" fill="#233c5a"/><path fill="#fff" d="M122.8 2274.8 L160.1 2274.8 L96.8 2422.2 L160.6 2422.2 L165.9 2350.9 L194.1 2350.9 L194.1 2422.2 L225.8 2422.2 L225.8 2450.2 L194.1 2450.2 L194.1 2501.8 L160.6 2501.8 L160.6 2450.2 L57 2450.2 L57 2435.2 Z"/></svg>
<svg class="i" style="left:488.00px;top:152.00px;width:36.38px;height:48.5px;" viewBox="0 0 384 512"><path fill="#c8c8c8" d="M377 105L279.1 7c-4.5-4.5-10.6-7-17-7H256v128h128v-6.1c0-6.3-2.5-12.4-7-16.9zm-153 31V0H24C10.7 0 0 10.7 0 24v464c0 13.3 10.7 24 24 24h336c13.3 0 24-10.7 24-24V160H248c-13.2 0-24-10.8-24-24zM64 72c0-4.42 3.58-8 8-8h80c4.42 0 8 3.58 8 8v16c0 4.42-3.58 8-8 8H72c-4.42 0-8-3.58-8-8V72zm0 80v-16c0-4.42 3.58-8 8-8h80c4.42 0 8 3.58 8 8v16c0 4.42-3.58 8-8 8H72c-4.42 0-8-3.58-8-8zm144 263.88V440c0 4.42-3.58 8-8 8h-16c-4.42 0-8-3.58-8-8v-24.29c-11.29-.58-22.27-4.52-31.37-11.35-3.9-2.93-4.1-8.77-.57-12.14l11.75-11.21c2.77-2.64 6.89-2.760 10.13-.73 3.87 2.42 8.26 3.72 12.82 3.72h28.11c6.5 0 11.8-5.92 11.8-13.19 0-5.95-3.61-11.19-8.77-12.73l-45-13.5c-18.59-5.58-31.58-23.42-31.58-43.39 0-24.52 19.05-44.44 42.67-45.07V232c0-4.42 3.58-8 8-8h16c4.42 0 8 3.58 8 8v24.29c11.29.58 22.27 4.51 31.37 11.35 3.9 2.93 4.1 8.77.57 12.14l-11.75 11.21c-2.77 2.64-6.89 2.76-10.13.73-3.87-2.43-8.26-3.72-12.82-3.72h-28.11c-6.5 0-11.8 5.92-11.8 13.19 0 5.95 3.61 11.19 8.77 12.73l45 13.5c18.59 5.58 31.58 23.42 31.58 43.39 0 24.53-19.05 44.44-42.67 45.07z"/></svg>
<div class="t " style="left:568.8px;top:158px;font-size:31.3px;color:rgb(0,123,140);transform:scaleY(1.06);transform-origin:0 28px;">Factures clients</div>
<div class="t " style="left:807px;top:158px;font-size:31.3px;color:#999;transform:scaleY(1.06);transform-origin:0 28px;">(51)</div>
<div class="t " style="left:1012.4px;top:161.4px;font-size:28.5px;color:#000;transform:scaleY(1.06);transform-origin:0 26px;">-- Sélectionner l'action --</div>
<div class="b" style="left:1000px;top:204px;width:514px;height:2px;background:#c4c4c4;"></div>
<svg class="i" style="left:1484px;top:173px;width:16px;height:11px" viewBox="0 0 16 11"><path d="M0 0 H16 L8 11Z" fill="#888"/></svg>
<div class="b" style="left:1532px;top:142px;width:234px;height:68px;background:#d8c8de;border-radius:6px;"></div>
<div class="t " style="left:1349px;width:600px;text-align:center;top:160.5px;font-size:28.5px;color:#fff;font-weight:bold;transform:scaleY(1.06);transform-origin:0 26px;">CONFIRMER</div>
<div class="t " style="left:1972.5px;top:151px;font-size:31.5px;color:#000;transform:scaleY(1.06);transform-origin:0 29px;">25</div>
<svg class="i" style="left:2056.00px;top:158.80px;width:18.38px;height:21px;" viewBox="0 0 448 512"><path fill="#000" d="M207.029 381.476L12.686 187.132c-9.373-9.373-9.373-24.569 0-33.941l22.667-22.667c9.357-9.357 24.522-9.375 33.901-.04L224 284.505l154.745-154.021c9.379-9.335 24.544-9.317 33.901.04l22.667 22.667c9.373 9.373 9.373 24.569 0 33.941L240.971 381.476c-9.373 9.372-24.569 9.372-33.942 0z"/></svg>
<div class="b" style="left:1960px;top:196px;width:123px;height:3px;border-bottom:2px solid #c8c8c8;border-radius:0 0 4px 4px;"></div>
<div class="t " style="left:2133px;top:153px;font-size:30px;color:#000;transform:scaleY(1.06);transform-origin:0 27px;">1</div>
<div class="t " style="left:2172px;top:156px;font-size:26px;color:#000;transform:scaleY(1.06);transform-origin:0 24px;font-style:italic;">/</div>
<div class="t " style="left:2205px;top:153px;font-size:30px;color:#000;transform:scaleY(1.06);transform-origin:0 27px;">3</div>
<div class="b" style="left:2104px;top:198px;width:68px;height:3px;border-bottom:2px solid #c8c8c8;border-radius:0 0 4px 4px;"></div>
<svg class="i" style="left:2270.00px;top:152.00px;width:19.38px;height:31px;" viewBox="0 0 320 512"><path fill="#000" d="M285.476 272.971L91.132 467.314c-9.373 9.373-24.569 9.373-33.941 0l-22.667-22.667c-9.357-9.357-9.375-24.522-.04-33.901L188.505 256 34.484 101.255c-9.335-9.379-9.317-24.544.04-33.901l22.667-22.667c9.373-9.373 24.569-9.373 33.941 0L285.475 239.03c9.373 9.372 9.373 24.568.001 33.941z"/></svg>
<div class="b" style="left:2336px;top:150px;width:161px;height:50px;background:#f9f9f9;"></div>
<svg class="i" style="left:2397px;top:153px;width:38px;height:38px" viewBox="0 0 38 38"><circle cx="19" cy="19" r="19" fill="rgb(10,20,100)"/><path d="M15.5 8 h7 v7.5 h7.5 v7 h-7.5 v7.5 h-7 v-7.5 h-7.5 v-7 h7.5z" fill="#fff"/></svg>
<div class="b" style="left:486px;top:251px;width:2014px;height:302px;background:rgb(233,234,237);border-top:2px solid #c9cacd;"></div>
<svg class="i" style="left:504.00px;top:277.00px;width:24.94px;height:28.5px;" viewBox="0 0 448 512"><path fill="#7a5c36" d="M224 256c70.7 0 128-57.3 128-128S294.7 0 224 0 96 57.3 96 128s57.3 128 128 128zm89.6 32h-16.7c-22.2 10.2-46.9 16-72.9 16s-50.6-5.8-72.9-16h-16.7C60.2 288 0 348.2 0 422.4V464c0 26.5 21.5 48 48 48h352c26.5 0 48-21.5 48-48v-41.6c0-74.2-60.2-134.4-134.4-134.4z"/></svg>
<div class="b" style="left:552px;top:266px;width:444px;height:55px;background:#fff;border-bottom:2px solid #c8c8c8;"></div>
<div class="t " style="left:565px;top:277px;font-size:28.5px;color:#b2b2b2;transform:scaleY(1.06);transform-origin:0 26px;width:384px;overflow:hidden;text-overflow:ellipsis;">Tiers ayant pour commercial</div>
<svg class="i" style="left:966px;top:289.5px;width:16px;height:11px" viewBox="0 0 16 11"><path d="M0 0 H16 L8 11Z" fill="#777"/></svg>
<svg class="i" style="left:1040.00px;top:277.00px;width:24.94px;height:28.5px;" viewBox="0 0 448 512"><path fill="#7a5c36" d="M224 256c70.7 0 128-57.3 128-128S294.7 0 224 0 96 57.3 96 128s57.3 128 128 128zm89.6 32h-16.7c-22.2 10.2-46.9 16-72.9 16s-50.6-5.8-72.9-16h-16.7C60.2 288 0 348.2 0 422.4V464c0 26.5 21.5 48 48 48h352c26.5 0 48-21.5 48-48v-41.6c0-74.2-60.2-134.4-134.4-134.4z"/></svg>
<div class="b" style="left:1088px;top:266px;width:500px;height:55px;background:#fff;border-bottom:2px solid #c8c8c8;"></div>
<div class="t " style="left:1101px;top:277px;font-size:28.5px;color:#b2b2b2;transform:scaleY(1.06);transform-origin:0 26px;width:440px;overflow:hidden;text-overflow:ellipsis;">Liés à un contact utilisateur parti…</div>
<svg class="i" style="left:1558px;top:289.5px;width:16px;height:11px" viewBox="0 0 16 11"><path d="M0 0 H16 L8 11Z" fill="#777"/></svg>
<svg class="i" style="left:1632.00px;top:277.00px;width:29.00px;height:29px;" viewBox="0 0 512 512"><path fill="#3c3c50" d="M0 252.118V48C0 21.49 21.49 0 48 0h204.118a48 48 0 0 1 33.941 14.059l211.882 211.882c18.745 18.745 18.745 49.137 0 67.882L293.823 497.941c-18.745 18.745-49.137 18.745-67.882 0L14.059 286.059A48 48 0 0 1 0 252.118zM112 64c-26.51 0-48 21.49-48 48s21.49 48 48 48 48-21.49 48-48-21.49-48-48-48z"/></svg>
<div class="b" style="left:1680px;top:266px;width:500px;height:55px;background:#fff;border-bottom:2px solid #c8c8c8;"></div>
<div class="t " style="left:1693px;top:277px;font-size:28.5px;color:#b2b2b2;transform:scaleY(1.06);transform-origin:0 26px;width:440px;overflow:hidden;text-overflow:ellipsis;">Inclure les produits/services ave…</div>
<svg class="i" style="left:2150px;top:289.5px;width:16px;height:11px" viewBox="0 0 16 11"><path d="M0 0 H16 L8 11Z" fill="#777"/></svg>
<svg class="i" style="left:504.00px;top:357.00px;width:29.00px;height:29px;" viewBox="0 0 512 512"><path fill="#3c3c50" d="M0 252.118V48C0 21.49 21.49 0 48 0h204.118a48 48 0 0 1 33.941 14.059l211.882 211.882c18.745 18.745 18.745 49.137 0 67.882L293.823 497.941c-18.745 18.745-49.137 18.745-67.882 0L14.059 286.059A48 48 0 0 1 0 252.118zM112 64c-26.51 0-48 21.49-48 48s21.49 48 48 48 48-21.49 48-48-21.49-48-48-48z"/></svg>
<div class="b" style="left:552px;top:346px;width:332px;height:55px;background:#fff;border-bottom:2px solid #c8c8c8;"></div>
<div class="t " style="left:565px;top:357px;font-size:28.5px;color:#b2b2b2;transform:scaleY(1.06);transform-origin:0 26px;width:272px;overflow:hidden;text-overflow:ellipsis;">Tags clients/prosp.</div>
<svg class="i" style="left:854px;top:369.5px;width:16px;height:11px" viewBox="0 0 16 11"><path d="M0 0 H16 L8 11Z" fill="#777"/></svg>
<div class="b" style="left:502px;top:416px;width:120px;height:59px;background:#fff;border-bottom:2px solid #d0d0d0;border-radius:4px;"></div>
<div class="b" style="left:834px;top:416px;width:170px;height:59px;background:#fff;border-bottom:2px solid #d0d0d0;border-radius:4px;"></div>
<div class="b" style="left:1156px;top:418px;width:306px;height:54px;background:#fff;border-bottom:2px solid #c8c8c8;"></div>
<svg class="i" style="left:1432px;top:441.5px;width:16px;height:11px" viewBox="0 0 16 11"><path d="M0 0 H16 L8 11Z" fill="#777"/></svg>
<div class="b" style="left:1560px;top:416px;width:140px;height:58px;background:#fff;border-bottom:2px solid #d0d0d0;border-radius:4px;"></div>
<div class="b" style="left:1792px;top:416px;width:140px;height:58px;background:#fff;border-bottom:2px solid #d0d0d0;border-radius:4px;"></div>
<div class="b" style="left:2047px;top:418px;width:297px;height:54px;background:#fff;border-bottom:2px solid #c8c8c8;"></div>
<svg class="i" style="left:2314px;top:441.5px;width:16px;height:11px" viewBox="0 0 16 11"><path d="M0 0 H16 L8 11Z" fill="#777"/></svg>
<svg class="i" style="left:2389.00px;top:427.00px;width:35.00px;height:35px;" viewBox="0 0 512 512"><path fill="#000" d="M505 442.7L405.3 343c-4.5-4.5-10.6-7-17-7H372c27.6-35.3 44-79.7 44-128C416 93.1 322.9 0 208 0S0 93.1 0 208s93.1 208 208 208c48.3 0 92.7-16.4 128-44v16.3c0 6.4 2.5 12.5 7 17l99.7 99.7c9.4 9.4 24.6 9.4 33.9 0l28.3-28.3c9.4-9.4 9.4-24.6.1-34zM208 336c-70.7 0-128-57.2-128-128 0-70.7 57.2-128 128-128 70.7 0 128 57.2 128 128 0 70.7-57.2 128-128 128z"/></svg>
<svg class="i" style="left:2447px;top:433px;width:25px;height:24px" viewBox="0 0 25 24"><path d="M3.5 3.5 L21.5 20.5 M21.5 3.5 L3.5 20.5" stroke="#777" stroke-width="5.8" stroke-linecap="round"/></svg>
<div class="t " style="left:502px;top:495.5px;font-size:28.5px;color:rgb(72,80,140);transform:scaleY(1.06);transform-origin:0 26px;">Réf.</div>
<div class="t " style="left:834px;top:495.5px;font-size:28.5px;color:rgb(72,80,140);transform:scaleY(1.06);transform-origin:0 26px;">Tiers</div>
<div class="t " style="left:1156px;top:495.5px;font-size:28.5px;color:rgb(72,80,140);transform:scaleY(1.06);transform-origin:0 26px;">Condition de règlement</div>
<div class="t " style="right:862px;top:495.5px;font-size:28.5px;color:rgb(72,80,140);transform:scaleY(1.06);transform-origin:0 26px;">Montant HT</div>
<div class="t " style="left:1820px;top:495.5px;font-size:28.5px;color:rgb(72,80,140);transform:scaleY(1.06);transform-origin:0 26px;">Auteur</div>
<div class="t " style="right:216px;top:495.5px;font-size:28.5px;color:rgb(72,80,140);transform:scaleY(1.06);transform-origin:0 26px;">État</div>
<svg class="i" style="left:2389px;top:499px;width:30px;height:25px" viewBox="0 0 30 25" fill="rgb(30,35,110)"><rect x="0" y="0.6" width="5.2" height="5.2" rx="1"/><rect x="0" y="9.7" width="5.2" height="5.2" rx="1"/><rect x="0" y="18.6" width="5.2" height="5.2" rx="1"/><rect x="8.7" y="1.4" width="20" height="3.8" rx="1"/><rect x="8.7" y="10.4" width="20" height="3.8" rx="1"/><rect x="8.7" y="19.3" width="20" height="3.8" rx="1"/></svg>
<div class="b" style="left:2446px;top:502px;width:26px;height:26px;border:2.5px solid #767676;border-radius:5px;background:#fff;"></div>
<div class="b" style="left:486px;top:552px;width:2014px;height:2px;background:#d6d6d6;"></div>
<div class="b" style="left:486px;top:554.0px;width:2014px;height:76.0px;background:#f9f9f9;"></div>
<div class="b" style="left:486px;top:628.0px;width:2014px;height:2px;background:#dedede;"></div>
<svg class="i" style="left:502.00px;top:572.40px;width:21.75px;height:29px;" viewBox="0 0 384 512"><path fill="#65953d" d="M377 105L279.1 7c-4.5-4.5-10.6-7-17-7H256v128h128v-6.1c0-6.3-2.5-12.4-7-16.9zm-153 31V0H24C10.7 0 0 10.7 0 24v464c0 13.3 10.7 24 24 24h336c13.3 0 24-10.7 24-24V160H248c-13.2 0-24-10.8-24-24zM64 72c0-4.42 3.58-8 8-8h80c4.42 0 8 3.58 8 8v16c0 4.42-3.58 8-8 8H72c-4.42 0-8-3.58-8-8V72zm0 80v-16c0-4.42 3.58-8 8-8h80c4.42 0 8 3.58 8 8v16c0 4.42-3.58 8-8 8H72c-4.42 0-8-3.58-8-8zm144 263.88V440c0 4.42-3.58 8-8 8h-16c-4.42 0-8-3.58-8-8v-24.29c-11.29-.58-22.27-4.52-31.37-11.35-3.9-2.93-4.1-8.77-.57-12.14l11.75-11.21c2.77-2.64 6.89-2.760 10.13-.73 3.87 2.42 8.26 3.72 12.82 3.72h28.11c6.5 0 11.8-5.92 11.8-13.19 0-5.95-3.61-11.19-8.77-12.73l-45-13.5c-18.59-5.58-31.58-23.42-31.58-43.39 0-24.52 19.05-44.44 42.67-45.07V232c0-4.42 3.58-8 8-8h16c4.42 0 8 3.58 8 8v24.29c11.29.58 22.27 4.51 31.37 11.35 3.9 2.93 4.1 8.77.57 12.14l-11.75 11.21c-2.77 2.64-6.89 2.76-10.13.73-3.87-2.43-8.26-3.72-12.82-3.72h-28.11c-6.5 0-11.8 5.92-11.8 13.19 0 5.95 3.61 11.19 8.77 12.73l45 13.5c18.59 5.58 31.58 23.42 31.58 43.39 0 24.53-19.05 44.44-42.67 45.07z"/></svg>
<div class="t " style="left:532px;top:571.5px;font-size:28.5px;color:rgb(10,20,100);transform:scaleY(1.06);transform-origin:0 26px;">FA2008-0024</div>
<svg class="i" style="left:708.62px;top:574.30px;width:29.00px;height:29px;" viewBox="0 0 512 512"><path fill="#a0a0a0" d="M216 0h80c13.3 0 24 10.7 24 24v168h87.7c17.8 0 26.7 21.5 14.1 34.1L269.7 378.3c-7.5 7.5-19.8 7.5-27.3 0L90.1 226.1c-12.6-12.6-3.7-34.1 14.1-34.1H192V24c0-13.3 10.7-24 24-24zm296 376v112c0 13.3-10.7 24-24 24H24c-13.3 0-24-10.7-24-24V376c0-13.3 10.7-24 24-24h146.7l49 49c20.1 20.1 52.5 20.1 72.6 0l49-49H488c13.3 0 24 10.7 24 24zm-124 88c0-11-9-20-20-20s-20 9-20 20 9 20 20 20 20-9 20-20zm64 0c0-11-9-20-20-20s-20 9-20 20 9 20 20 20 20-9 20-20z"/></svg>
<svg class="i" style="left:833.00px;top:573.80px;width:25.81px;height:29.5px;" viewBox="0 0 448 512"><path fill="#6c6aa8" d="M436 480h-20V24c0-13.255-10.745-24-24-24H56C42.745 0 32 10.745 32 24v456H12c-6.627 0-12 5.373-12 12v20h448v-20c0-6.627-5.373-12-12-12zM128 76c0-6.627 5.373-12 12-12h40c6.627 0 12 5.373 12 12v40c0 6.627-5.373 12-12 12h-40c-6.627 0-12-5.373-12-12V76zm0 96c0-6.627 5.373-12 12-12h40c6.627 0 12 5.373 12 12v40c0 6.627-5.373 12-12 12h-40c-6.627 0-12-5.373-12-12v-40zm52 148h-40c-6.627 0-12-5.373-12-12v-40c0-6.627 5.373-12 12-12h40c6.627 0 12 5.373 12 12v40c0 6.627-5.373 12-12 12zm76 160h-64v-84c0-6.627 5.373-12 12-12h40c6.627 0 12 5.373 12 12v84zm64-172c0 6.627-5.373 12-12 12h-40c-6.627 0-12-5.373-12-12v-40c0-6.627 5.373-12 12-12h40c6.627 0 12 5.373 12 12v40zm0-96c0 6.627-5.373 12-12 12h-40c-6.627 0-12-5.373-12-12v-40c0-6.627 5.373-12 12-12h40c6.627 0 12 5.373 12 12v40zm0-96c0 6.627-5.373 12-12 12h-40c-6.627 0-12-5.373-12-12V76c0-6.627 5.373-12 12-12h40c6.627 0 12 5.373 12 12v40z"/></svg>
<div class="t " style="left:867.2px;top:572.4px;font-size:28.5px;color:rgb(10,20,100);transform:scaleY(1.06);transform-origin:0 26px;">Société Dream RT</div>
<div class="t " style="left:1156.4px;top:572.4px;font-size:28.5px;color:#222;transform:scaleY(1.06);transform-origin:0 26px;">A réception</div>
<div class="t " style="right:861.7px;top:573.2px;font-size:28.5px;color:rgb(0,105,105);transform:scaleY(1.06);transform-origin:0 26px;">29 500,00</div>
<svg class="i" style="left:1732px;top:570.0px;width:40px;height:40px" viewBox="0 0 40 40"><use href="#av"/></svg>
<div class="t " style="left:1778.5px;top:571.9px;font-size:28.5px;color:rgb(10,20,100);transform:scaleY(1.06);transform-origin:0 26px;">Renaud Franck</div>
<div class="b" style="left:2208px;top:567.5px;width:136px;height:46px;background:#bc9526;border-radius:7px;"></div>
<div class="t " style="left:1976px;width:600px;text-align:center;top:573.5px;font-size:27.5px;color:#fff;font-weight:bold;transform:scaleY(1.06);transform-origin:0 25px;">Impayée</div>
<svg class="i" style="left:2418px;top:574.0px;width:26px;height:26px" viewBox="0 0 26 26"><rect width="26" height="26" rx="4" fill="#0075ff"/><path d="M6 13.5 L10.5 18 L20 7.5" stroke="#fff" stroke-width="3.2" fill="none"/></svg>
<div class="b" style="left:486px;top:630.0px;width:2014px;height:73.5px;background:#fff;"></div>
<div class="b" style="left:486px;top:701.5px;width:2014px;height:2px;background:#dedede;"></div>
<svg class="i" style="left:502.00px;top:648.16px;width:21.75px;height:29px;" viewBox="0 0 384 512"><path fill="#65953d" d="M377 105L279.1 7c-4.5-4.5-10.6-7-17-7H256v128h128v-6.1c0-6.3-2.5-12.4-7-16.9zm-153 31V0H24C10.7 0 0 10.7 0 24v464c0 13.3 10.7 24 24 24h336c13.3 0 24-10.7 24-24V160H248c-13.2 0-24-10.8-24-24zM64 72c0-4.42 3.58-8 8-8h80c4.42 0 8 3.58 8 8v16c0 4.42-3.58 8-8 8H72c-4.42 0-8-3.58-8-8V72zm0 80v-16c0-4.42 3.58-8 8-8h80c4.42 0 8 3.58 8 8v16c0 4.42-3.58 8-8 8H72c-4.42 0-8-3.58-8-8zm144 263.88V440c0 4.42-3.58 8-8 8h-16c-4.42 0-8-3.58-8-8v-24.29c-11.29-.58-22.27-4.52-31.37-11.35-3.9-2.93-4.1-8.77-.57-12.14l11.75-11.21c2.77-2.64 6.89-2.760 10.13-.73 3.87 2.42 8.26 3.72 12.82 3.72h28.11c6.5 0 11.8-5.92 11.8-13.19 0-5.95-3.61-11.19-8.77-12.73l-45-13.5c-18.59-5.58-31.58-23.42-31.58-43.39 0-24.52 19.05-44.44 42.67-45.07V232c0-4.42 3.58-8 8-8h16c4.42 0 8 3.58 8 8v24.29c11.29.58 22.27 4.51 31.37 11.35 3.9 2.93 4.1 8.77.57 12.14l-11.75 11.21c-2.77 2.64-6.89 2.76-10.13.73-3.87-2.43-8.26-3.72-12.82-3.72h-28.11c-6.5 0-11.8 5.92-11.8 13.19 0 5.95 3.61 11.19 8.77 12.73l45 13.5c18.59 5.58 31.58 23.42 31.58 43.39 0 24.53-19.05 44.44-42.67 45.07z"/></svg>
<div class="t " style="left:532px;top:647.26px;font-size:28.5px;color:rgb(10,20,100);transform:scaleY(1.06);transform-origin:0 26px;">FA2008-0018</div>
<svg class="i" style="left:708.62px;top:650.06px;width:29.00px;height:29px;" viewBox="0 0 512 512"><path fill="#a0a0a0" d="M216 0h80c13.3 0 24 10.7 24 24v168h87.7c17.8 0 26.7 21.5 14.1 34.1L269.7 378.3c-7.5 7.5-19.8 7.5-27.3 0L90.1 226.1c-12.6-12.6-3.7-34.1 14.1-34.1H192V24c0-13.3 10.7-24 24-24zm296 376v112c0 13.3-10.7 24-24 24H24c-13.3 0-24-10.7-24-24V376c0-13.3 10.7-24 24-24h146.7l49 49c20.1 20.1 52.5 20.1 72.6 0l49-49H488c13.3 0 24 10.7 24 24zm-124 88c0-11-9-20-20-20s-20 9-20 20 9 20 20 20 20-9 20-20zm64 0c0-11-9-20-20-20s-20 9-20 20 9 20 20 20 20-9 20-20z"/></svg>
<svg class="i" style="left:833.00px;top:649.56px;width:25.81px;height:29.5px;" viewBox="0 0 448 512"><path fill="#6c6aa8" d="M436 480h-20V24c0-13.255-10.745-24-24-24H56C42.745 0 32 10.745 32 24v456H12c-6.627 0-12 5.373-12 12v20h448v-20c0-6.627-5.373-12-12-12zM128 76c0-6.627 5.373-12 12-12h40c6.627 0 12 5.373 12 12v40c0 6.627-5.373 12-12 12h-40c-6.627 0-12-5.373-12-12V76zm0 96c0-6.627 5.373-12 12-12h40c6.627 0 12 5.373 12 12v40c0 6.627-5.373 12-12 12h-40c-6.627 0-12-5.373-12-12v-40zm52 148h-40c-6.627 0-12-5.373-12-12v-40c0-6.627 5.373-12 12-12h40c6.627 0 12 5.373 12 12v40c0 6.627-5.373 12-12 12zm76 160h-64v-84c0-6.627 5.373-12 12-12h40c6.627 0 12 5.373 12 12v84zm64-172c0 6.627-5.373 12-12 12h-40c-6.627 0-12-5.373-12-12v-40c0-6.627 5.373-12 12-12h40c6.627 0 12 5.373 12 12v40zm0-96c0 6.627-5.373 12-12 12h-40c-6.627 0-12-5.373-12-12v-40c0-6.627 5.373-12 12-12h40c6.627 0 12 5.373 12 12v40zm0-96c0 6.627-5.373 12-12 12h-40c-6.627 0-12-5.373-12-12V76c0-6.627 5.373-12 12-12h40c6.627 0 12 5.373 12 12v40z"/></svg>
<div class="t " style="left:867.2px;top:648.16px;font-size:28.5px;color:rgb(10,20,100);transform:scaleY(1.06);transform-origin:0 26px;">MC CONSULT</div>
<div class="t " style="left:1156.4px;top:648.16px;font-size:28.5px;color:#222;transform:scaleY(1.06);transform-origin:0 26px;">A réception</div>
<div class="t " style="right:861.7px;top:648.96px;font-size:28.5px;color:rgb(0,105,105);transform:scaleY(1.06);transform-origin:0 26px;">1 000,00</div>
<svg class="i" style="left:1732px;top:645.76px;width:40px;height:40px" viewBox="0 0 40 40"><use href="#av"/></svg>
<div class="t " style="left:1778.5px;top:647.66px;font-size:28.5px;color:rgb(10,20,100);transform:scaleY(1.06);transform-origin:0 26px;">Renaud Franck</div>
<div class="b" style="left:2238px;top:643.26px;width:106px;height:44px;background:#cad2d2;border-radius:7px;"></div>
<div class="t " style="left:1991px;width:600px;text-align:center;top:649.26px;font-size:27.5px;color:#777;font-weight:bold;transform:scaleY(1.06);transform-origin:0 25px;">Payée</div>
<svg class="i" style="left:2418px;top:649.76px;width:26px;height:26px" viewBox="0 0 26 26"><rect width="26" height="26" rx="4" fill="#0075ff"/><path d="M6 13.5 L10.5 18 L20 7.5" stroke="#fff" stroke-width="3.2" fill="none"/></svg>
<div class="b" style="left:486px;top:703.5px;width:2014px;height:76.5px;background:#f9f9f9;"></div>
<div class="b" style="left:486px;top:778.0px;width:2014px;height:2px;background:#dedede;"></div>
<svg class="i" style="left:502.00px;top:723.92px;width:21.75px;height:29px;" viewBox="0 0 384 512"><path fill="#65953d" d="M377 105L279.1 7c-4.5-4.5-10.6-7-17-7H256v128h128v-6.1c0-6.3-2.5-12.4-7-16.9zm-153 31V0H24C10.7 0 0 10.7 0 24v464c0 13.3 10.7 24 24 24h336c13.3 0 24-10.7 24-24V160H248c-13.2 0-24-10.8-24-24zM64 72c0-4.42 3.58-8 8-8h80c4.42 0 8 3.58 8 8v16c0 4.42-3.58 8-8 8H72c-4.42 0-8-3.58-8-8V72zm0 80v-16c0-4.42 3.58-8 8-8h80c4.42 0 8 3.58 8 8v16c0 4.42-3.58 8-8 8H72c-4.42 0-8-3.58-8-8zm144 263.88V440c0 4.42-3.58 8-8 8h-16c-4.42 0-8-3.58-8-8v-24.29c-11.29-.58-22.27-4.52-31.37-11.35-3.9-2.93-4.1-8.77-.57-12.14l11.75-11.21c2.77-2.64 6.89-2.760 10.13-.73 3.87 2.42 8.26 3.72 12.82 3.72h28.11c6.5 0 11.8-5.92 11.8-13.19 0-5.95-3.61-11.19-8.77-12.73l-45-13.5c-18.59-5.58-31.58-23.42-31.58-43.39 0-24.52 19.05-44.44 42.67-45.07V232c0-4.42 3.58-8 8-8h16c4.42 0 8 3.58 8 8v24.29c11.29.58 22.27 4.51 31.37 11.35 3.9 2.93 4.1 8.77.57 12.14l-11.75 11.21c-2.77 2.64-6.89 2.76-10.13.73-3.87-2.43-8.26-3.72-12.82-3.72h-28.11c-6.5 0-11.8 5.92-11.8 13.19 0 5.95 3.61 11.19 8.77 12.73l45 13.5c18.59 5.58 31.58 23.42 31.58 43.39 0 24.53-19.05 44.44-42.67 45.07z"/></svg>
<div class="t " style="left:532px;top:723.02px;font-size:28.5px;color:rgb(10,20,100);transform:scaleY(1.06);transform-origin:0 26px;">FA2007-0027</div>
<svg class="i" style="left:708.62px;top:725.82px;width:29.00px;height:29px;" viewBox="0 0 512 512"><path fill="#a0a0a0" d="M216 0h80c13.3 0 24 10.7 24 24v168h87.7c17.8 0 26.7 21.5 14.1 34.1L269.7 378.3c-7.5 7.5-19.8 7.5-27.3 0L90.1 226.1c-12.6-12.6-3.7-34.1 14.1-34.1H192V24c0-13.3 10.7-24 24-24zm296 376v112c0 13.3-10.7 24-24 24H24c-13.3 0-24-10.7-24-24V376c0-13.3 10.7-24 24-24h146.7l49 49c20.1 20.1 52.5 20.1 72.6 0l49-49H488c13.3 0 24 10.7 24 24zm-124 88c0-11-9-20-20-20s-20 9-20 20 9 20 20 20 20-9 20-20zm64 0c0-11-9-20-20-20s-20 9-20 20 9 20 20 20 20-9 20-20z"/></svg>
<svg class="i" style="left:833.00px;top:725.32px;width:25.81px;height:29.5px;" viewBox="0 0 448 512"><path fill="#6c6aa8" d="M436 480h-20V24c0-13.255-10.745-24-24-24H56C42.745 0 32 10.745 32 24v456H12c-6.627 0-12 5.373-12 12v20h448v-20c0-6.627-5.373-12-12-12zM128 76c0-6.627 5.373-12 12-12h40c6.627 0 12 5.373 12 12v40c0 6.627-5.373 12-12 12h-40c-6.627 0-12-5.373-12-12V76zm0 96c0-6.627 5.373-12 12-12h40c6.627 0 12 5.373 12 12v40c0 6.627-5.373 12-12 12h-40c-6.627 0-12-5.373-12-12v-40zm52 148h-40c-6.627 0-12-5.373-12-12v-40c0-6.627 5.373-12 12-12h40c6.627 0 12 5.373 12 12v40c0 6.627-5.373 12-12 12zm76 160h-64v-84c0-6.627 5.373-12 12-12h40c6.627 0 12 5.373 12 12v84zm64-172c0 6.627-5.373 12-12 12h-40c-6.627 0-12-5.373-12-12v-40c0-6.627 5.373-12 12-12h40c6.627 0 12 5.373 12 12v40zm0-96c0 6.627-5.373 12-12 12h-40c-6.627 0-12-5.373-12-12v-40c0-6.627 5.373-12 12-12h40c6.627 0 12 5.373 12 12v40zm0-96c0 6.627-5.373 12-12 12h-40c-6.627 0-12-5.373-12-12V76c0-6.627 5.373-12 12-12h40c6.627 0 12 5.373 12 12v40z"/></svg>
<div class="t " style="left:867.2px;top:723.92px;font-size:28.5px;color:rgb(10,20,100);transform:scaleY(1.06);transform-origin:0 26px;">Société RO</div>
<div class="t " style="left:1156.4px;top:723.92px;font-size:28.5px;color:#222;transform:scaleY(1.06);transform-origin:0 26px;">A réception</div>
<div class="t " style="right:861.7px;top:724.72px;font-size:28.5px;color:rgb(0,105,105);transform:scaleY(1.06);transform-origin:0 26px;">18 000,00</div>
<svg class="i" style="left:1732px;top:721.52px;width:40px;height:40px" viewBox="0 0 40 40"><use href="#av"/></svg>
<div class="t " style="left:1778.5px;top:723.42px;font-size:28.5px;color:rgb(10,20,100);transform:scaleY(1.06);transform-origin:0 26px;">Renaud Franck</div>
<div class="b" style="left:2238px;top:719.02px;width:106px;height:44px;background:#cad2d2;border-radius:7px;"></div>
<div class="t " style="left:1991px;width:600px;text-align:center;top:725.02px;font-size:27.5px;color:#777;font-weight:bold;transform:scaleY(1.06);transform-origin:0 25px;">Payée</div>
<svg class="i" style="left:2418px;top:725.52px;width:26px;height:26px" viewBox="0 0 26 26"><rect width="26" height="26" rx="4" fill="#0075ff"/><path d="M6 13.5 L10.5 18 L20 7.5" stroke="#fff" stroke-width="3.2" fill="none"/></svg>
<div class="b" style="left:486px;top:780.0px;width:2014px;height:75.39999999999998px;background:#fff;"></div>
<div class="b" style="left:486px;top:853.4px;width:2014px;height:2px;background:#dedede;"></div>
<svg class="i" style="left:502.00px;top:799.68px;width:21.75px;height:29px;" viewBox="0 0 384 512"><path fill="#65953d" d="M377 105L279.1 7c-4.5-4.5-10.6-7-17-7H256v128h128v-6.1c0-6.3-2.5-12.4-7-16.9zm-153 31V0H24C10.7 0 0 10.7 0 24v464c0 13.3 10.7 24 24 24h336c13.3 0 24-10.7 24-24V160H248c-13.2 0-24-10.8-24-24zM64 72c0-4.42 3.58-8 8-8h80c4.42 0 8 3.58 8 8v16c0 4.42-3.58 8-8 8H72c-4.42 0-8-3.58-8-8V72zm0 80v-16c0-4.42 3.58-8 8-8h80c4.42 0 8 3.58 8 8v16c0 4.42-3.58 8-8 8H72c-4.42 0-8-3.58-8-8zm144 263.88V440c0 4.42-3.58 8-8 8h-16c-4.42 0-8-3.58-8-8v-24.29c-11.29-.58-22.27-4.52-31.37-11.35-3.9-2.93-4.1-8.77-.57-12.14l11.75-11.21c2.77-2.64 6.89-2.760 10.13-.73 3.87 2.42 8.26 3.72 12.82 3.72h28.11c6.5 0 11.8-5.92 11.8-13.19 0-5.95-3.61-11.19-8.77-12.73l-45-13.5c-18.59-5.58-31.58-23.42-31.58-43.39 0-24.52 19.05-44.44 42.67-45.07V232c0-4.42 3.58-8 8-8h16c4.42 0 8 3.58 8 8v24.29c11.29.58 22.27 4.51 31.37 11.35 3.9 2.93 4.1 8.77.57 12.14l-11.75 11.21c-2.77 2.64-6.89 2.76-10.13.73-3.87-2.43-8.26-3.72-12.82-3.72h-28.11c-6.5 0-11.8 5.92-11.8 13.19 0 5.95 3.61 11.19 8.77 12.73l45 13.5c18.59 5.58 31.58 23.42 31.58 43.39 0 24.53-19.05 44.44-42.67 45.07z"/></svg>
<div class="t " style="left:532px;top:798.78px;font-size:28.5px;color:rgb(10,20,100);transform:scaleY(1.06);transform-origin:0 26px;">FA2007-0011</div>
<svg class="i" style="left:706.51px;top:801.58px;width:29.00px;height:29px;" viewBox="0 0 512 512"><path fill="#a0a0a0" d="M216 0h80c13.3 0 24 10.7 24 24v168h87.7c17.8 0 26.7 21.5 14.1 34.1L269.7 378.3c-7.5 7.5-19.8 7.5-27.3 0L90.1 226.1c-12.6-12.6-3.7-34.1 14.1-34.1H192V24c0-13.3 10.7-24 24-24zm296 376v112c0 13.3-10.7 24-24 24H24c-13.3 0-24-10.7-24-24V376c0-13.3 10.7-24 24-24h146.7l49 49c20.1 20.1 52.5 20.1 72.6 0l49-49H488c13.3 0 24 10.7 24 24zm-124 88c0-11-9-20-20-20s-20 9-20 20 9 20 20 20 20-9 20-20zm64 0c0-11-9-20-20-20s-20 9-20 20 9 20 20 20 20-9 20-20z"/></svg>
<svg class="i" style="left:833.00px;top:801.08px;width:25.81px;height:29.5px;" viewBox="0 0 448 512"><path fill="#6c6aa8" d="M436 480h-20V24c0-13.255-10.745-24-24-24H56C42.745 0 32 10.745 32 24v456H12c-6.627 0-12 5.373-12 12v20h448v-20c0-6.627-5.373-12-12-12zM128 76c0-6.627 5.373-12 12-12h40c6.627 0 12 5.373 12 12v40c0 6.627-5.373 12-12 12h-40c-6.627 0-12-5.373-12-12V76zm0 96c0-6.627 5.373-12 12-12h40c6.627 0 12 5.373 12 12v40c0 6.627-5.373 12-12 12h-40c-6.627 0-12-5.373-12-12v-40zm52 148h-40c-6.627 0-12-5.373-12-12v-40c0-6.627 5.373-12 12-12h40c6.627 0 12 5.373 12 12v40c0 6.627-5.373 12-12 12zm76 160h-64v-84c0-6.627 5.373-12 12-12h40c6.627 0 12 5.373 12 12v84zm64-172c0 6.627-5.373 12-12 12h-40c-6.627 0-12-5.373-12-12v-40c0-6.627 5.373-12 12-12h40c6.627 0 12 5.373 12 12v40zm0-96c0 6.627-5.373 12-12 12h-40c-6.627 0-12-5.373-12-12v-40c0-6.627 5.373-12 12-12h40c6.627 0 12 5.373 12 12v40zm0-96c0 6.627-5.373 12-12 12h-40c-6.627 0-12-5.373-12-12V76c0-6.627 5.373-12 12-12h40c6.627 0 12 5.373 12 12v40z"/></svg>
<div class="t " style="left:867.2px;top:799.68px;font-size:28.5px;color:rgb(10,20,100);transform:scaleY(1.06);transform-origin:0 26px;">Société Dream RT</div>
<div class="t " style="left:1156.4px;top:799.68px;font-size:28.5px;color:#222;transform:scaleY(1.06);transform-origin:0 26px;">A réception</div>
<div class="t " style="right:861.7px;top:800.48px;font-size:28.5px;color:rgb(0,105,105);transform:scaleY(1.06);transform-origin:0 26px;">1 808,00</div>
<svg class="i" style="left:1732px;top:797.28px;width:40px;height:40px" viewBox="0 0 40 40"><use href="#av"/></svg>
<div class="t " style="left:1778.5px;top:799.18px;font-size:28.5px;color:rgb(10,20,100);transform:scaleY(1.06);transform-origin:0 26px;">Renaud Franck</div>
<div class="b" style="left:2208px;top:794.78px;width:136px;height:46px;background:#bc9526;border-radius:7px;"></div>
<div class="t " style="left:1976px;width:600px;text-align:center;top:800.78px;font-size:27.5px;color:#fff;font-weight:bold;transform:scaleY(1.06);transform-origin:0 25px;">Impayée</div>
<svg class="i" style="left:2418px;top:801.28px;width:26px;height:26px" viewBox="0 0 26 26"><rect width="26" height="26" rx="4" fill="#0075ff"/><path d="M6 13.5 L10.5 18 L20 7.5" stroke="#fff" stroke-width="3.2" fill="none"/></svg>
<div class="b" style="left:486px;top:855.4px;width:2014px;height:77.39999999999998px;background:#f9f9f9;"></div>
<div class="b" style="left:486px;top:930.8px;width:2014px;height:2px;background:#dedede;"></div>
<svg class="i" style="left:502.00px;top:875.44px;width:21.75px;height:29px;" viewBox="0 0 384 512"><path fill="#65953d" d="M377 105L279.1 7c-4.5-4.5-10.6-7-17-7H256v128h128v-6.1c0-6.3-2.5-12.4-7-16.9zm-153 31V0H24C10.7 0 0 10.7 0 24v464c0 13.3 10.7 24 24 24h336c13.3 0 24-10.7 24-24V160H248c-13.2 0-24-10.8-24-24zM64 72c0-4.42 3.58-8 8-8h80c4.42 0 8 3.58 8 8v16c0 4.42-3.58 8-8 8H72c-4.42 0-8-3.58-8-8V72zm0 80v-16c0-4.42 3.58-8 8-8h80c4.42 0 8 3.58 8 8v16c0 4.42-3.58 8-8 8H72c-4.42 0-8-3.58-8-8zm144 263.88V440c0 4.42-3.58 8-8 8h-16c-4.42 0-8-3.58-8-8v-24.29c-11.29-.58-22.27-4.52-31.37-11.35-3.9-2.93-4.1-8.77-.57-12.14l11.75-11.21c2.77-2.64 6.89-2.760 10.13-.73 3.87 2.42 8.26 3.72 12.82 3.72h28.11c6.5 0 11.8-5.92 11.8-13.19 0-5.95-3.61-11.19-8.77-12.73l-45-13.5c-18.59-5.58-31.58-23.42-31.58-43.39 0-24.52 19.05-44.44 42.67-45.07V232c0-4.42 3.58-8 8-8h16c4.42 0 8 3.58 8 8v24.29c11.29.58 22.27 4.51 31.37 11.35 3.9 2.93 4.1 8.77.57 12.14l-11.75 11.21c-2.77 2.64-6.89 2.76-10.13.73-3.87-2.43-8.26-3.72-12.82-3.72h-28.11c-6.5 0-11.8 5.92-11.8 13.19 0 5.95 3.61 11.19 8.77 12.73l45 13.5c18.59 5.58 31.58 23.42 31.58 43.39 0 24.53-19.05 44.44-42.67 45.07z"/></svg>
<div class="t " style="left:532px;top:874.54px;font-size:28.5px;color:rgb(10,20,100);transform:scaleY(1.06);transform-origin:0 26px;">FA2007-0010</div>
<svg class="i" style="left:708.62px;top:877.34px;width:29.00px;height:29px;" viewBox="0 0 512 512"><path fill="#a0a0a0" d="M216 0h80c13.3 0 24 10.7 24 24v168h87.7c17.8 0 26.7 21.5 14.1 34.1L269.7 378.3c-7.5 7.5-19.8 7.5-27.3 0L90.1 226.1c-12.6-12.6-3.7-34.1 14.1-34.1H192V24c0-13.3 10.7-24 24-24zm296 376v112c0 13.3-10.7 24-24 24H24c-13.3 0-24-10.7-24-24V376c0-13.3 10.7-24 24-24h146.7l49 49c20.1 20.1 52.5 20.1 72.6 0l49-49H488c13.3 0 24 10.7 24 24zm-124 88c0-11-9-20-20-20s-20 9-20 20 9 20 20 20 20-9 20-20zm64 0c0-11-9-20-20-20s-20 9-20 20 9 20 20 20 20-9 20-20z"/></svg>
<svg class="i" style="left:833.00px;top:876.84px;width:25.81px;height:29.5px;" viewBox="0 0 448 512"><path fill="#6c6aa8" d="M436 480h-20V24c0-13.255-10.745-24-24-24H56C42.745 0 32 10.745 32 24v456H12c-6.627 0-12 5.373-12 12v20h448v-20c0-6.627-5.373-12-12-12zM128 76c0-6.627 5.373-12 12-12h40c6.627 0 12 5.373 12 12v40c0 6.627-5.373 12-12 12h-40c-6.627 0-12-5.373-12-12V76zm0 96c0-6.627 5.373-12 12-12h40c6.627 0 12 5.373 12 12v40c0 6.627-5.373 12-12 12h-40c-6.627 0-12-5.373-12-12v-40zm52 148h-40c-6.627 0-12-5.373-12-12v-40c0-6.627 5.373-12 12-12h40c6.627 0 12 5.373 12 12v40c0 6.627-5.373 12-12 12zm76 160h-64v-84c0-6.627 5.373-12 12-12h40c6.627 0 12 5.373 12 12v84zm64-172c0 6.627-5.373 12-12 12h-40c-6.627 0-12-5.373-12-12v-40c0-6.627 5.373-12 12-12h40c6.627 0 12 5.373 12 12v40zm0-96c0 6.627-5.373 12-12 12h-40c-6.627 0-12-5.373-12-12v-40c0-6.627 5.373-12 12-12h40c6.627 0 12 5.373 12 12v40zm0-96c0 6.627-5.373 12-12 12h-40c-6.627 0-12-5.373-12-12V76c0-6.627 5.373-12 12-12h40c6.627 0 12 5.373 12 12v40z"/></svg>
<div class="t " style="left:867.2px;top:875.4399999999999px;font-size:28.5px;color:rgb(10,20,100);transform:scaleY(1.06);transform-origin:0 26px;">Société TEM</div>
<div class="t " style="left:1156.4px;top:875.4399999999999px;font-size:28.5px;color:#222;transform:scaleY(1.06);transform-origin:0 26px;">A réception</div>
<div class="t " style="right:861.7px;top:876.24px;font-size:28.5px;color:rgb(0,105,105);transform:scaleY(1.06);transform-origin:0 26px;">11 600,00</div>
<svg class="i" style="left:1732px;top:873.04px;width:40px;height:40px" viewBox="0 0 40 40"><use href="#av"/></svg>
<div class="t " style="left:1778.5px;top:874.9399999999999px;font-size:28.5px;color:rgb(10,20,100);transform:scaleY(1.06);transform-origin:0 26px;">Renaud Franck</div>
<div class="b" style="left:2208px;top:870.54px;width:136px;height:46px;background:#bc9526;border-radius:7px;"></div>
<div class="t " style="left:1976px;width:600px;text-align:center;top:876.54px;font-size:27.5px;color:#fff;font-weight:bold;transform:scaleY(1.06);transform-origin:0 25px;">Impayée</div>
<svg class="i" style="left:2418px;top:877.04px;width:26px;height:26px" viewBox="0 0 26 26"><rect width="26" height="26" rx="4" fill="#0075ff"/><path d="M6 13.5 L10.5 18 L20 7.5" stroke="#fff" stroke-width="3.2" fill="none"/></svg>
<div class="b" style="left:486px;top:932.8px;width:2014px;height:75.7600000000001px;background:#fff;"></div>
<div class="b" style="left:486px;top:1006.5600000000001px;width:2014px;height:2px;background:#dedede;"></div>
<svg class="i" style="left:502.00px;top:951.20px;width:21.75px;height:29px;" viewBox="0 0 384 512"><path fill="#65953d" d="M377 105L279.1 7c-4.5-4.5-10.6-7-17-7H256v128h128v-6.1c0-6.3-2.5-12.4-7-16.9zm-153 31V0H24C10.7 0 0 10.7 0 24v464c0 13.3 10.7 24 24 24h336c13.3 0 24-10.7 24-24V160H248c-13.2 0-24-10.8-24-24zM64 72c0-4.42 3.58-8 8-8h80c4.42 0 8 3.58 8 8v16c0 4.42-3.58 8-8 8H72c-4.42 0-8-3.58-8-8V72zm0 80v-16c0-4.42 3.58-8 8-8h80c4.42 0 8 3.58 8 8v16c0 4.42-3.58 8-8 8H72c-4.42 0-8-3.58-8-8zm144 263.88V440c0 4.42-3.58 8-8 8h-16c-4.42 0-8-3.58-8-8v-24.29c-11.29-.58-22.27-4.52-31.37-11.35-3.9-2.93-4.1-8.77-.57-12.14l11.75-11.21c2.77-2.64 6.89-2.760 10.13-.73 3.87 2.42 8.26 3.72 12.82 3.72h28.11c6.5 0 11.8-5.92 11.8-13.19 0-5.95-3.61-11.19-8.77-12.73l-45-13.5c-18.59-5.58-31.58-23.42-31.58-43.39 0-24.52 19.05-44.44 42.67-45.07V232c0-4.42 3.58-8 8-8h16c4.42 0 8 3.58 8 8v24.29c11.29.58 22.27 4.51 31.37 11.35 3.9 2.93 4.1 8.77.57 12.14l-11.75 11.21c-2.77 2.64-6.89 2.76-10.13.73-3.87-2.43-8.26-3.72-12.82-3.72h-28.11c-6.5 0-11.8 5.92-11.8 13.19 0 5.95 3.61 11.19 8.77 12.73l45 13.5c18.59 5.58 31.58 23.42 31.58 43.39 0 24.53-19.05 44.44-42.67 45.07z"/></svg>
<div class="t " style="left:532px;top:950.3px;font-size:28.5px;color:rgb(10,20,100);transform:scaleY(1.06);transform-origin:0 26px;">FA2006-0014</div>
<svg class="i" style="left:708.62px;top:953.10px;width:29.00px;height:29px;" viewBox="0 0 512 512"><path fill="#a0a0a0" d="M216 0h80c13.3 0 24 10.7 24 24v168h87.7c17.8 0 26.7 21.5 14.1 34.1L269.7 378.3c-7.5 7.5-19.8 7.5-27.3 0L90.1 226.1c-12.6-12.6-3.7-34.1 14.1-34.1H192V24c0-13.3 10.7-24 24-24zm296 376v112c0 13.3-10.7 24-24 24H24c-13.3 0-24-10.7-24-24V376c0-13.3 10.7-24 24-24h146.7l49 49c20.1 20.1 52.5 20.1 72.6 0l49-49H488c13.3 0 24 10.7 24 24zm-124 88c0-11-9-20-20-20s-20 9-20 20 9 20 20 20 20-9 20-20zm64 0c0-11-9-20-20-20s-20 9-20 20 9 20 20 20 20-9 20-20z"/></svg>
<svg class="i" style="left:833.00px;top:952.60px;width:25.81px;height:29.5px;" viewBox="0 0 448 512"><path fill="#6c6aa8" d="M436 480h-20V24c0-13.255-10.745-24-24-24H56C42.745 0 32 10.745 32 24v456H12c-6.627 0-12 5.373-12 12v20h448v-20c0-6.627-5.373-12-12-12zM128 76c0-6.627 5.373-12 12-12h40c6.627 0 12 5.373 12 12v40c0 6.627-5.373 12-12 12h-40c-6.627 0-12-5.373-12-12V76zm0 96c0-6.627 5.373-12 12-12h40c6.627 0 12 5.373 12 12v40c0 6.627-5.373 12-12 12h-40c-6.627 0-12-5.373-12-12v-40zm52 148h-40c-6.627 0-12-5.373-12-12v-40c0-6.627 5.373-12 12-12h40c6.627 0 12 5.373 12 12v40c0 6.627-5.373 12-12 12zm76 160h-64v-84c0-6.627 5.373-12 12-12h40c6.627 0 12 5.373 12 12v84zm64-172c0 6.627-5.373 12-12 12h-40c-6.627 0-12-5.373-12-12v-40c0-6.627 5.373-12 12-12h40c6.627 0 12 5.373 12 12v40zm0-96c0 6.627-5.373 12-12 12h-40c-6.627 0-12-5.373-12-12v-40c0-6.627 5.373-12 12-12h40c6.627 0 12 5.373 12 12v40zm0-96c0 6.627-5.373 12-12 12h-40c-6.627 0-12-5.373-12-12V76c0-6.627 5.373-12 12-12h40c6.627 0 12 5.373 12 12v40z"/></svg>
<div class="t " style="left:867.2px;top:951.1999999999999px;font-size:28.5px;color:rgb(10,20,100);transform:scaleY(1.06);transform-origin:0 26px;">Société RT</div>
<div class="t " style="left:1156.4px;top:951.1999999999999px;font-size:28.5px;color:#222;transform:scaleY(1.06);transform-origin:0 26px;">A réception</div>
<div class="t " style="right:861.7px;top:952.0px;font-size:28.5px;color:rgb(0,105,105);transform:scaleY(1.06);transform-origin:0 26px;">3 000,00</div>
<svg class="i" style="left:1732px;top:948.8px;width:40px;height:40px" viewBox="0 0 40 40"><use href="#av"/></svg>
<div class="t " style="left:1778.5px;top:950.6999999999999px;font-size:28.5px;color:rgb(10,20,100);transform:scaleY(1.06);transform-origin:0 26px;">Renaud Franck</div>
<div class="b" style="left:2238px;top:946.3px;width:106px;height:44px;background:#cad2d2;border-radius:7px;"></div>
<div class="t " style="left:1991px;width:600px;text-align:center;top:952.3px;font-size:27.5px;color:#777;font-weight:bold;transform:scaleY(1.06);transform-origin:0 25px;">Payée</div>
<svg class="i" style="left:2418px;top:952.8px;width:26px;height:26px" viewBox="0 0 26 26"><rect width="26" height="26" rx="4" fill="#0075ff"/><path d="M6 13.5 L10.5 18 L20 7.5" stroke="#fff" stroke-width="3.2" fill="none"/></svg>
<div class="b" style="left:486px;top:1008.5600000000001px;width:2014px;height:75.7600000000001px;background:#f9f9f9;"></div>
<div class="b" style="left:486px;top:1082.3200000000002px;width:2014px;height:2px;background:#dedede;"></div>
<svg class="i" style="left:502.00px;top:1026.96px;width:21.75px;height:29px;" viewBox="0 0 384 512"><path fill="#65953d" d="M377 105L279.1 7c-4.5-4.5-10.6-7-17-7H256v128h128v-6.1c0-6.3-2.5-12.4-7-16.9zm-153 31V0H24C10.7 0 0 10.7 0 24v464c0 13.3 10.7 24 24 24h336c13.3 0 24-10.7 24-24V160H248c-13.2 0-24-10.8-24-24zM64 72c0-4.42 3.58-8 8-8h80c4.42 0 8 3.58 8 8v16c0 4.42-3.58 8-8 8H72c-4.42 0-8-3.58-8-8V72zm0 80v-16c0-4.42 3.58-8 8-8h80c4.42 0 8 3.58 8 8v16c0 4.42-3.58 8-8 8H72c-4.42 0-8-3.58-8-8zm144 263.88V440c0 4.42-3.58 8-8 8h-16c-4.42 0-8-3.58-8-8v-24.29c-11.29-.58-22.27-4.52-31.37-11.35-3.9-2.93-4.1-8.77-.57-12.14l11.75-11.21c2.77-2.64 6.89-2.760 10.13-.73 3.87 2.42 8.26 3.72 12.82 3.72h28.11c6.5 0 11.8-5.92 11.8-13.19 0-5.95-3.61-11.19-8.77-12.73l-45-13.5c-18.59-5.58-31.58-23.42-31.58-43.39 0-24.52 19.05-44.44 42.67-45.07V232c0-4.42 3.58-8 8-8h16c4.42 0 8 3.58 8 8v24.29c11.29.58 22.27 4.51 31.37 11.35 3.9 2.93 4.1 8.77.57 12.14l-11.75 11.21c-2.77 2.64-6.89 2.76-10.13.73-3.87-2.43-8.26-3.72-12.82-3.72h-28.11c-6.5 0-11.8 5.92-11.8 13.19 0 5.95 3.61 11.19 8.77 12.73l45 13.5c18.59 5.58 31.58 23.42 31.58 43.39 0 24.53-19.05 44.44-42.67 45.07z"/></svg>
<div class="t " style="left:532px;top:1026.06px;font-size:28.5px;color:rgb(10,20,100);transform:scaleY(1.06);transform-origin:0 26px;">FA2006-0009</div>
<svg class="i" style="left:708.62px;top:1028.86px;width:29.00px;height:29px;" viewBox="0 0 512 512"><path fill="#a0a0a0" d="M216 0h80c13.3 0 24 10.7 24 24v168h87.7c17.8 0 26.7 21.5 14.1 34.1L269.7 378.3c-7.5 7.5-19.8 7.5-27.3 0L90.1 226.1c-12.6-12.6-3.7-34.1 14.1-34.1H192V24c0-13.3 10.7-24 24-24zm296 376v112c0 13.3-10.7 24-24 24H24c-13.3 0-24-10.7-24-24V376c0-13.3 10.7-24 24-24h146.7l49 49c20.1 20.1 52.5 20.1 72.6 0l49-49H488c13.3 0 24 10.7 24 24zm-124 88c0-11-9-20-20-20s-20 9-20 20 9 20 20 20 20-9 20-20zm64 0c0-11-9-20-20-20s-20 9-20 20 9 20 20 20 20-9 20-20z"/></svg>
<svg class="i" style="left:833.00px;top:1028.36px;width:25.81px;height:29.5px;" viewBox="0 0 448 512"><path fill="#6c6aa8" d="M436 480h-20V24c0-13.255-10.745-24-24-24H56C42.745 0 32 10.745 32 24v456H12c-6.627 0-12 5.373-12 12v20h448v-20c0-6.627-5.373-12-12-12zM128 76c0-6.627 5.373-12 12-12h40c6.627 0 12 5.373 12 12v40c0 6.627-5.373 12-12 12h-40c-6.627 0-12-5.373-12-12V76zm0 96c0-6.627 5.373-12 12-12h40c6.627 0 12 5.373 12 12v40c0 6.627-5.373 12-12 12h-40c-6.627 0-12-5.373-12-12v-40zm52 148h-40c-6.627 0-12-5.373-12-12v-40c0-6.627 5.373-12 12-12h40c6.627 0 12 5.373 12 12v40c0 6.627-5.373 12-12 12zm76 160h-64v-84c0-6.627 5.373-12 12-12h40c6.627 0 12 5.373 12 12v84zm64-172c0 6.627-5.373 12-12 12h-40c-6.627 0-12-5.373-12-12v-40c0-6.627 5.373-12 12-12h40c6.627 0 12 5.373 12 12v40zm0-96c0 6.627-5.373 12-12 12h-40c-6.627 0-12-5.373-12-12v-40c0-6.627 5.373-12 12-12h40c6.627 0 12 5.373 12 12v40zm0-96c0 6.627-5.373 12-12 12h-40c-6.627 0-12-5.373-12-12V76c0-6.627 5.373-12 12-12h40c6.627 0 12 5.373 12 12v40z"/></svg>
<div class="t " style="left:867.2px;top:1026.96px;font-size:28.5px;color:rgb(10,20,100);transform:scaleY(1.06);transform-origin:0 26px;">Société RT</div>
<div class="t " style="left:1156.4px;top:1026.96px;font-size:28.5px;color:#222;transform:scaleY(1.06);transform-origin:0 26px;">A réception</div>
<div class="t " style="right:861.7px;top:1027.76px;font-size:28.5px;color:rgb(0,105,105);transform:scaleY(1.06);transform-origin:0 26px;">10 800,00</div>
<svg class="i" style="left:1732px;top:1024.56px;width:40px;height:40px" viewBox="0 0 40 40"><use href="#av"/></svg>
<div class="t " style="left:1778.5px;top:1026.46px;font-size:28.5px;color:rgb(10,20,100);transform:scaleY(1.06);transform-origin:0 26px;">Renaud Franck</div>
<div class="b" style="left:2238px;top:1022.0600000000001px;width:106px;height:44px;background:#cad2d2;border-radius:7px;"></div>
<div class="t " style="left:1991px;width:600px;text-align:center;top:1028.06px;font-size:27.5px;color:#777;font-weight:bold;transform:scaleY(1.06);transform-origin:0 25px;">Payée</div>
<svg class="i" style="left:2418px;top:1028.56px;width:26px;height:26px" viewBox="0 0 26 26"><rect width="26" height="26" rx="4" fill="#0075ff"/><path d="M6 13.5 L10.5 18 L20 7.5" stroke="#fff" stroke-width="3.2" fill="none"/></svg>
<div class="b" style="left:486px;top:1084.3200000000002px;width:2014px;height:75.75999999999976px;background:#fff;"></div>
<div class="b" style="left:486px;top:1158.08px;width:2014px;height:2px;background:#dedede;"></div>
<svg class="i" style="left:502.00px;top:1102.72px;width:21.75px;height:29px;" viewBox="0 0 384 512"><path fill="#65953d" d="M377 105L279.1 7c-4.5-4.5-10.6-7-17-7H256v128h128v-6.1c0-6.3-2.5-12.4-7-16.9zm-153 31V0H24C10.7 0 0 10.7 0 24v464c0 13.3 10.7 24 24 24h336c13.3 0 24-10.7 24-24V160H248c-13.2 0-24-10.8-24-24zM64 72c0-4.42 3.58-8 8-8h80c4.42 0 8 3.58 8 8v16c0 4.42-3.58 8-8 8H72c-4.42 0-8-3.58-8-8V72zm0 80v-16c0-4.42 3.58-8 8-8h80c4.42 0 8 3.58 8 8v16c0 4.42-3.58 8-8 8H72c-4.42 0-8-3.58-8-8zm144 263.88V440c0 4.42-3.58 8-8 8h-16c-4.42 0-8-3.58-8-8v-24.29c-11.29-.58-22.27-4.52-31.37-11.35-3.9-2.93-4.1-8.77-.57-12.14l11.75-11.21c2.77-2.64 6.89-2.760 10.13-.73 3.87 2.42 8.26 3.72 12.82 3.72h28.11c6.5 0 11.8-5.92 11.8-13.19 0-5.95-3.61-11.19-8.77-12.73l-45-13.5c-18.59-5.58-31.58-23.42-31.58-43.39 0-24.52 19.05-44.44 42.67-45.07V232c0-4.42 3.58-8 8-8h16c4.42 0 8 3.58 8 8v24.29c11.29.58 22.27 4.51 31.37 11.35 3.9 2.93 4.1 8.77.57 12.14l-11.75 11.21c-2.77 2.64-6.89 2.76-10.13.73-3.87-2.43-8.26-3.72-12.82-3.72h-28.11c-6.5 0-11.8 5.92-11.8 13.19 0 5.95 3.61 11.19 8.77 12.73l45 13.5c18.59 5.58 31.58 23.42 31.58 43.39 0 24.53-19.05 44.44-42.67 45.07z"/></svg>
<div class="t " style="left:532px;top:1101.8200000000002px;font-size:28.5px;color:rgb(10,20,100);transform:scaleY(1.06);transform-origin:0 26px;">TC1-2112-0001</div>
<svg class="i" style="left:734.99px;top:1104.62px;width:29.00px;height:29px;" viewBox="0 0 512 512"><path fill="#a0a0a0" d="M216 0h80c13.3 0 24 10.7 24 24v168h87.7c17.8 0 26.7 21.5 14.1 34.1L269.7 378.3c-7.5 7.5-19.8 7.5-27.3 0L90.1 226.1c-12.6-12.6-3.7-34.1 14.1-34.1H192V24c0-13.3 10.7-24 24-24zm296 376v112c0 13.3-10.7 24-24 24H24c-13.3 0-24-10.7-24-24V376c0-13.3 10.7-24 24-24h146.7l49 49c20.1 20.1 52.5 20.1 72.6 0l49-49H488c13.3 0 24 10.7 24 24zm-124 88c0-11-9-20-20-20s-20 9-20 20 9 20 20 20 20-9 20-20zm64 0c0-11-9-20-20-20s-20 9-20 20 9 20 20 20 20-9 20-20z"/></svg>
<svg class="i" style="left:833.00px;top:1104.12px;width:25.81px;height:29.5px;" viewBox="0 0 448 512"><path fill="#6c6aa8" d="M436 480h-20V24c0-13.255-10.745-24-24-24H56C42.745 0 32 10.745 32 24v456H12c-6.627 0-12 5.373-12 12v20h448v-20c0-6.627-5.373-12-12-12zM128 76c0-6.627 5.373-12 12-12h40c6.627 0 12 5.373 12 12v40c0 6.627-5.373 12-12 12h-40c-6.627 0-12-5.373-12-12V76zm0 96c0-6.627 5.373-12 12-12h40c6.627 0 12 5.373 12 12v40c0 6.627-5.373 12-12 12h-40c-6.627 0-12-5.373-12-12v-40zm52 148h-40c-6.627 0-12-5.373-12-12v-40c0-6.627 5.373-12 12-12h40c6.627 0 12 5.373 12 12v40c0 6.627-5.373 12-12 12zm76 160h-64v-84c0-6.627 5.373-12 12-12h40c6.627 0 12 5.373 12 12v84zm64-172c0 6.627-5.373 12-12 12h-40c-6.627 0-12-5.373-12-12v-40c0-6.627 5.373-12 12-12h40c6.627 0 12 5.373 12 12v40zm0-96c0 6.627-5.373 12-12 12h-40c-6.627 0-12-5.373-12-12v-40c0-6.627 5.373-12 12-12h40c6.627 0 12 5.373 12 12v40zm0-96c0 6.627-5.373 12-12 12h-40c-6.627 0-12-5.373-12-12V76c0-6.627 5.373-12 12-12h40c6.627 0 12 5.373 12 12v40z"/></svg>
<div class="t " style="left:867.2px;top:1102.7200000000003px;font-size:28.5px;color:rgb(10,20,100);transform:scaleY(1.06);transform-origin:0 26px;">Société RO</div>
<div class="t " style="right:861.7px;top:1103.5200000000002px;font-size:28.5px;color:rgb(0,105,105);transform:scaleY(1.06);transform-origin:0 26px;">63,00</div>
<svg class="i" style="left:1732px;top:1100.3200000000002px;width:40px;height:40px" viewBox="0 0 40 40"><use href="#av"/></svg>
<div class="t " style="left:1778.5px;top:1102.2200000000003px;font-size:28.5px;color:rgb(10,20,100);transform:scaleY(1.06);transform-origin:0 26px;">Renaud Franck</div>
<div class="b" style="left:2238px;top:1097.8200000000002px;width:106px;height:44px;background:#cad2d2;border-radius:7px;"></div>
<div class="t " style="left:1991px;width:600px;text-align:center;top:1103.8200000000002px;font-size:27.5px;color:#777;font-weight:bold;transform:scaleY(1.06);transform-origin:0 25px;">Payée</div>
<div class="b" style="left:2418px;top:1104.3200000000002px;width:26px;height:26px;border:2.5px solid #767676;border-radius:5px;background:#fff;"></div>
<div class="b" style="left:486px;top:1160.08px;width:2014px;height:75.76000000000022px;background:#f9f9f9;"></div>
<div class="b" style="left:486px;top:1233.8400000000001px;width:2014px;height:2px;background:#dedede;"></div>
<svg class="i" style="left:502.00px;top:1178.48px;width:21.75px;height:29px;" viewBox="0 0 384 512"><path fill="#65953d" d="M377 105L279.1 7c-4.5-4.5-10.6-7-17-7H256v128h128v-6.1c0-6.3-2.5-12.4-7-16.9zm-153 31V0H24C10.7 0 0 10.7 0 24v464c0 13.3 10.7 24 24 24h336c13.3 0 24-10.7 24-24V160H248c-13.2 0-24-10.8-24-24zM64 72c0-4.42 3.58-8 8-8h80c4.42 0 8 3.58 8 8v16c0 4.42-3.58 8-8 8H72c-4.42 0-8-3.58-8-8V72zm0 80v-16c0-4.42 3.58-8 8-8h80c4.42 0 8 3.58 8 8v16c0 4.42-3.58 8-8 8H72c-4.42 0-8-3.58-8-8zm144 263.88V440c0 4.42-3.58 8-8 8h-16c-4.42 0-8-3.58-8-8v-24.29c-11.29-.58-22.27-4.52-31.37-11.35-3.9-2.93-4.1-8.77-.57-12.14l11.75-11.21c2.77-2.64 6.89-2.760 10.13-.73 3.87 2.42 8.26 3.72 12.82 3.72h28.11c6.5 0 11.8-5.92 11.8-13.19 0-5.95-3.61-11.19-8.77-12.73l-45-13.5c-18.59-5.58-31.58-23.42-31.58-43.39 0-24.52 19.05-44.44 42.67-45.07V232c0-4.42 3.58-8 8-8h16c4.42 0 8 3.58 8 8v24.29c11.29.58 22.27 4.51 31.37 11.35 3.9 2.93 4.1 8.77.57 12.14l-11.75 11.21c-2.77 2.64-6.89 2.76-10.13.73-3.87-2.43-8.26-3.72-12.82-3.72h-28.11c-6.5 0-11.8 5.92-11.8 13.19 0 5.95 3.61 11.19 8.77 12.73l45 13.5c18.59 5.58 31.58 23.42 31.58 43.39 0 24.53-19.05 44.44-42.67 45.07z"/></svg>
<div class="t " style="left:532px;top:1177.58px;font-size:28.5px;color:rgb(10,20,100);transform:scaleY(1.06);transform-origin:0 26px;">FA2201-0045</div>
<svg class="i" style="left:708.62px;top:1180.38px;width:29.00px;height:29px;" viewBox="0 0 512 512"><path fill="#a0a0a0" d="M216 0h80c13.3 0 24 10.7 24 24v168h87.7c17.8 0 26.7 21.5 14.1 34.1L269.7 378.3c-7.5 7.5-19.8 7.5-27.3 0L90.1 226.1c-12.6-12.6-3.7-34.1 14.1-34.1H192V24c0-13.3 10.7-24 24-24zm296 376v112c0 13.3-10.7 24-24 24H24c-13.3 0-24-10.7-24-24V376c0-13.3 10.7-24 24-24h146.7l49 49c20.1 20.1 52.5 20.1 72.6 0l49-49H488c13.3 0 24 10.7 24 24zm-124 88c0-11-9-20-20-20s-20 9-20 20 9 20 20 20 20-9 20-20zm64 0c0-11-9-20-20-20s-20 9-20 20 9 20 20 20 20-9 20-20z"/></svg>
<svg class="i" style="left:833.00px;top:1179.88px;width:25.81px;height:29.5px;" viewBox="0 0 448 512"><path fill="#6c6aa8" d="M436 480h-20V24c0-13.255-10.745-24-24-24H56C42.745 0 32 10.745 32 24v456H12c-6.627 0-12 5.373-12 12v20h448v-20c0-6.627-5.373-12-12-12zM128 76c0-6.627 5.373-12 12-12h40c6.627 0 12 5.373 12 12v40c0 6.627-5.373 12-12 12h-40c-6.627 0-12-5.373-12-12V76zm0 96c0-6.627 5.373-12 12-12h40c6.627 0 12 5.373 12 12v40c0 6.627-5.373 12-12 12h-40c-6.627 0-12-5.373-12-12v-40zm52 148h-40c-6.627 0-12-5.373-12-12v-40c0-6.627 5.373-12 12-12h40c6.627 0 12 5.373 12 12v40c0 6.627-5.373 12-12 12zm76 160h-64v-84c0-6.627 5.373-12 12-12h40c6.627 0 12 5.373 12 12v84zm64-172c0 6.627-5.373 12-12 12h-40c-6.627 0-12-5.373-12-12v-40c0-6.627 5.373-12 12-12h40c6.627 0 12 5.373 12 12v40zm0-96c0 6.627-5.373 12-12 12h-40c-6.627 0-12-5.373-12-12v-40c0-6.627 5.373-12 12-12h40c6.627 0 12 5.373 12 12v40zm0-96c0 6.627-5.373 12-12 12h-40c-6.627 0-12-5.373-12-12V76c0-6.627 5.373-12 12-12h40c6.627 0 12 5.373 12 12v40z"/></svg>
<div class="t " style="left:867.2px;top:1178.48px;font-size:28.5px;color:rgb(10,20,100);transform:scaleY(1.06);transform-origin:0 26px;">Société Dream RT</div>
<div class="t " style="left:1156.4px;top:1178.48px;font-size:28.5px;color:#222;transform:scaleY(1.06);transform-origin:0 26px;">A réception</div>
<div class="t " style="right:861.7px;top:1179.28px;font-size:28.5px;color:rgb(0,105,105);transform:scaleY(1.06);transform-origin:0 26px;">980 000,00</div>
<svg class="i" style="left:1732px;top:1176.08px;width:40px;height:40px" viewBox="0 0 40 40"><use href="#av"/></svg>
<div class="t " style="left:1778.5px;top:1177.98px;font-size:28.5px;color:rgb(10,20,100);transform:scaleY(1.06);transform-origin:0 26px;">Renaud Franck</div>
<div class="b" style="left:2208px;top:1173.58px;width:136px;height:46px;background:#bc9526;border-radius:7px;"></div>
<div class="t " style="left:1976px;width:600px;text-align:center;top:1179.58px;font-size:27.5px;color:#fff;font-weight:bold;transform:scaleY(1.06);transform-origin:0 25px;">Impayée</div>
<div class="b" style="left:2418px;top:1180.08px;width:26px;height:26px;border:2.5px solid #767676;border-radius:5px;background:#fff;"></div>
<div class="b" style="left:486px;top:1235.8400000000001px;width:2014px;height:75.75999999999976px;background:#fff;"></div>
<div class="b" style="left:486px;top:1309.6px;width:2014px;height:2px;background:#dedede;"></div>
<svg class="i" style="left:502.00px;top:1254.24px;width:21.75px;height:29px;" viewBox="0 0 384 512"><path fill="#65953d" d="M377 105L279.1 7c-4.5-4.5-10.6-7-17-7H256v128h128v-6.1c0-6.3-2.5-12.4-7-16.9zm-153 31V0H24C10.7 0 0 10.7 0 24v464c0 13.3 10.7 24 24 24h336c13.3 0 24-10.7 24-24V160H248c-13.2 0-24-10.8-24-24zM64 72c0-4.42 3.58-8 8-8h80c4.42 0 8 3.58 8 8v16c0 4.42-3.58 8-8 8H72c-4.42 0-8-3.58-8-8V72zm0 80v-16c0-4.42 3.58-8 8-8h80c4.42 0 8 3.58 8 8v16c0 4.42-3.58 8-8 8H72c-4.42 0-8-3.58-8-8zm144 263.88V440c0 4.42-3.58 8-8 8h-16c-4.42 0-8-3.58-8-8v-24.29c-11.29-.58-22.27-4.52-31.37-11.35-3.9-2.93-4.1-8.77-.57-12.14l11.75-11.21c2.77-2.64 6.89-2.760 10.13-.73 3.87 2.42 8.26 3.72 12.82 3.72h28.11c6.5 0 11.8-5.92 11.8-13.19 0-5.95-3.61-11.19-8.77-12.73l-45-13.5c-18.59-5.58-31.58-23.42-31.58-43.39 0-24.52 19.05-44.44 42.67-45.07V232c0-4.42 3.58-8 8-8h16c4.42 0 8 3.58 8 8v24.29c11.29.58 22.27 4.51 31.37 11.35 3.9 2.93 4.1 8.77.57 12.14l-11.75 11.21c-2.77 2.64-6.89 2.76-10.13.73-3.87-2.43-8.26-3.72-12.82-3.72h-28.11c-6.5 0-11.8 5.92-11.8 13.19 0 5.95 3.61 11.19 8.77 12.73l45 13.5c18.59 5.58 31.58 23.42 31.58 43.39 0 24.53-19.05 44.44-42.67 45.07z"/></svg>
<div class="t " style="left:532px;top:1253.3400000000001px;font-size:28.5px;color:rgb(10,20,100);transform:scaleY(1.06);transform-origin:0 26px;">FA2112-0044</div>
<svg class="i" style="left:833.00px;top:1255.64px;width:25.81px;height:29.5px;" viewBox="0 0 448 512"><path fill="#6c6aa8" d="M436 480h-20V24c0-13.255-10.745-24-24-24H56C42.745 0 32 10.745 32 24v456H12c-6.627 0-12 5.373-12 12v20h448v-20c0-6.627-5.373-12-12-12zM128 76c0-6.627 5.373-12 12-12h40c6.627 0 12 5.373 12 12v40c0 6.627-5.373 12-12 12h-40c-6.627 0-12-5.373-12-12V76zm0 96c0-6.627 5.373-12 12-12h40c6.627 0 12 5.373 12 12v40c0 6.627-5.373 12-12 12h-40c-6.627 0-12-5.373-12-12v-40zm52 148h-40c-6.627 0-12-5.373-12-12v-40c0-6.627 5.373-12 12-12h40c6.627 0 12 5.373 12 12v40c0 6.627-5.373 12-12 12zm76 160h-64v-84c0-6.627 5.373-12 12-12h40c6.627 0 12 5.373 12 12v84zm64-172c0 6.627-5.373 12-12 12h-40c-6.627 0-12-5.373-12-12v-40c0-6.627 5.373-12 12-12h40c6.627 0 12 5.373 12 12v40zm0-96c0 6.627-5.373 12-12 12h-40c-6.627 0-12-5.373-12-12v-40c0-6.627 5.373-12 12-12h40c6.627 0 12 5.373 12 12v40zm0-96c0 6.627-5.373 12-12 12h-40c-6.627 0-12-5.373-12-12V76c0-6.627 5.373-12 12-12h40c6.627 0 12 5.373 12 12v40z"/></svg>
<div class="t " style="left:867.2px;top:1254.2400000000002px;font-size:28.5px;color:rgb(10,20,100);transform:scaleY(1.06);transform-origin:0 26px;">MC CONSULT</div>
<div class="t " style="left:1156.4px;top:1254.2400000000002px;font-size:28.5px;color:#222;transform:scaleY(1.06);transform-origin:0 26px;">A réception</div>
<div class="t " style="right:861.7px;top:1255.0400000000002px;font-size:28.5px;color:rgb(0,105,105);transform:scaleY(1.06);transform-origin:0 26px;">2 800,00</div>
<svg class="i" style="left:1732px;top:1251.8400000000001px;width:40px;height:40px" viewBox="0 0 40 40"><use href="#av"/></svg>
<div class="t " style="left:1778.5px;top:1253.7400000000002px;font-size:28.5px;color:rgb(10,20,100);transform:scaleY(1.06);transform-origin:0 26px;">Renaud Franck</div>
<div class="b" style="left:2208px;top:1249.3400000000001px;width:136px;height:46px;background:#bc9526;border-radius:7px;"></div>
<div class="t " style="left:1976px;width:600px;text-align:center;top:1255.3400000000001px;font-size:27.5px;color:#fff;font-weight:bold;transform:scaleY(1.06);transform-origin:0 25px;">Impayée</div>
<div class="b" style="left:2418px;top:1255.8400000000001px;width:26px;height:26px;border:2.5px solid #767676;border-radius:5px;background:#fff;"></div>
<div class="b" style="left:486px;top:1311.6px;width:2014px;height:75.76000000000022px;background:#f9f9f9;"></div>
<div class="b" style="left:486px;top:1385.3600000000001px;width:2014px;height:2px;background:#dedede;"></div>
<svg class="i" style="left:502.00px;top:1330.00px;width:21.75px;height:29px;" viewBox="0 0 384 512"><path fill="#65953d" d="M377 105L279.1 7c-4.5-4.5-10.6-7-17-7H256v128h128v-6.1c0-6.3-2.5-12.4-7-16.9zm-153 31V0H24C10.7 0 0 10.7 0 24v464c0 13.3 10.7 24 24 24h336c13.3 0 24-10.7 24-24V160H248c-13.2 0-24-10.8-24-24zM64 72c0-4.42 3.58-8 8-8h80c4.42 0 8 3.58 8 8v16c0 4.42-3.58 8-8 8H72c-4.42 0-8-3.58-8-8V72zm0 80v-16c0-4.42 3.58-8 8-8h80c4.42 0 8 3.58 8 8v16c0 4.42-3.58 8-8 8H72c-4.42 0-8-3.58-8-8zm144 263.88V440c0 4.42-3.58 8-8 8h-16c-4.42 0-8-3.58-8-8v-24.29c-11.29-.58-22.27-4.52-31.37-11.35-3.9-2.93-4.1-8.77-.57-12.14l11.75-11.21c2.77-2.64 6.89-2.760 10.13-.73 3.87 2.42 8.26 3.72 12.82 3.72h28.11c6.5 0 11.8-5.92 11.8-13.19 0-5.95-3.61-11.19-8.77-12.73l-45-13.5c-18.59-5.58-31.58-23.42-31.58-43.39 0-24.52 19.05-44.44 42.67-45.07V232c0-4.42 3.58-8 8-8h16c4.42 0 8 3.58 8 8v24.29c11.29.58 22.27 4.51 31.37 11.35 3.9 2.93 4.1 8.77.57 12.14l-11.75 11.21c-2.77 2.64-6.89 2.76-10.13.73-3.87-2.43-8.26-3.72-12.82-3.72h-28.11c-6.5 0-11.8 5.92-11.8 13.19 0 5.95 3.61 11.19 8.77 12.73l45 13.5c18.59 5.58 31.58 23.42 31.58 43.39 0 24.53-19.05 44.44-42.67 45.07z"/></svg>
<div class="t " style="left:532px;top:1329.1px;font-size:28.5px;color:rgb(10,20,100);transform:scaleY(1.06);transform-origin:0 26px;">FA2112-0043</div>
<svg class="i" style="left:833.00px;top:1331.40px;width:25.81px;height:29.5px;" viewBox="0 0 448 512"><path fill="#6c6aa8" d="M436 480h-20V24c0-13.255-10.745-24-24-24H56C42.745 0 32 10.745 32 24v456H12c-6.627 0-12 5.373-12 12v20h448v-20c0-6.627-5.373-12-12-12zM128 76c0-6.627 5.373-12 12-12h40c6.627 0 12 5.373 12 12v40c0 6.627-5.373 12-12 12h-40c-6.627 0-12-5.373-12-12V76zm0 96c0-6.627 5.373-12 12-12h40c6.627 0 12 5.373 12 12v40c0 6.627-5.373 12-12 12h-40c-6.627 0-12-5.373-12-12v-40zm52 148h-40c-6.627 0-12-5.373-12-12v-40c0-6.627 5.373-12 12-12h40c6.627 0 12 5.373 12 12v40c0 6.627-5.373 12-12 12zm76 160h-64v-84c0-6.627 5.373-12 12-12h40c6.627 0 12 5.373 12 12v84zm64-172c0 6.627-5.373 12-12 12h-40c-6.627 0-12-5.373-12-12v-40c0-6.627 5.373-12 12-12h40c6.627 0 12 5.373 12 12v40zm0-96c0 6.627-5.373 12-12 12h-40c-6.627 0-12-5.373-12-12v-40c0-6.627 5.373-12 12-12h40c6.627 0 12 5.373 12 12v40zm0-96c0 6.627-5.373 12-12 12h-40c-6.627 0-12-5.373-12-12V76c0-6.627 5.373-12 12-12h40c6.627 0 12 5.373 12 12v40z"/></svg>
<div class="t " style="left:867.2px;top:1330.0px;font-size:28.5px;color:rgb(10,20,100);transform:scaleY(1.06);transform-origin:0 26px;">Société RT</div>
<div class="t " style="left:1156.4px;top:1330.0px;font-size:28.5px;color:#222;transform:scaleY(1.06);transform-origin:0 26px;">A réception</div>
<div class="t " style="right:861.7px;top:1330.8px;font-size:28.5px;color:rgb(0,105,105);transform:scaleY(1.06);transform-origin:0 26px;">1 800,00</div>
<svg class="i" style="left:1732px;top:1327.6px;width:40px;height:40px" viewBox="0 0 40 40"><use href="#av"/></svg>
<div class="t " style="left:1778.5px;top:1329.5px;font-size:28.5px;color:rgb(10,20,100);transform:scaleY(1.06);transform-origin:0 26px;">Renaud Franck</div>
<div class="b" style="left:2208px;top:1325.1px;width:136px;height:46px;background:#bc9526;border-radius:7px;"></div>
<div class="t " style="left:1976px;width:600px;text-align:center;top:1331.1px;font-size:27.5px;color:#fff;font-weight:bold;transform:scaleY(1.06);transform-origin:0 25px;">Impayée</div>
<div class="b" style="left:2418px;top:1331.6px;width:26px;height:26px;border:2.5px solid #767676;border-radius:5px;background:#fff;"></div>
<div class="b" style="left:486px;top:1387.3600000000001px;width:2014px;height:75.75999999999999px;background:#fff;"></div>
<div class="b" style="left:486px;top:1461.1200000000001px;width:2014px;height:2px;background:#dedede;"></div>
<svg class="i" style="left:502.00px;top:1405.76px;width:21.75px;height:29px;" viewBox="0 0 384 512"><path fill="#65953d" d="M377 105L279.1 7c-4.5-4.5-10.6-7-17-7H256v128h128v-6.1c0-6.3-2.5-12.4-7-16.9zm-153 31V0H24C10.7 0 0 10.7 0 24v464c0 13.3 10.7 24 24 24h336c13.3 0 24-10.7 24-24V160H248c-13.2 0-24-10.8-24-24zM64 72c0-4.42 3.58-8 8-8h80c4.42 0 8 3.58 8 8v16c0 4.42-3.58 8-8 8H72c-4.42 0-8-3.58-8-8V72zm0 80v-16c0-4.42 3.58-8 8-8h80c4.42 0 8 3.58 8 8v16c0 4.42-3.58 8-8 8H72c-4.42 0-8-3.58-8-8zm144 263.88V440c0 4.42-3.58 8-8 8h-16c-4.42 0-8-3.58-8-8v-24.29c-11.29-.58-22.27-4.52-31.37-11.35-3.9-2.93-4.1-8.77-.57-12.14l11.75-11.21c2.77-2.64 6.89-2.760 10.13-.73 3.87 2.42 8.26 3.72 12.82 3.72h28.11c6.5 0 11.8-5.92 11.8-13.19 0-5.95-3.61-11.19-8.77-12.73l-45-13.5c-18.59-5.58-31.58-23.42-31.58-43.39 0-24.52 19.05-44.44 42.67-45.07V232c0-4.42 3.58-8 8-8h16c4.42 0 8 3.58 8 8v24.29c11.29.58 22.27 4.51 31.37 11.35 3.9 2.93 4.1 8.77.57 12.14l-11.75 11.21c-2.77 2.64-6.89 2.76-10.13.73-3.87-2.43-8.26-3.72-12.82-3.72h-28.11c-6.5 0-11.8 5.92-11.8 13.19 0 5.95 3.61 11.19 8.77 12.73l45 13.5c18.59 5.58 31.58 23.42 31.58 43.39 0 24.53-19.05 44.44-42.67 45.07z"/></svg>
<div class="t " style="left:532px;top:1404.8600000000001px;font-size:28.5px;color:rgb(10,20,100);transform:scaleY(1.06);transform-origin:0 26px;">FA2112-0042</div>
<svg class="i" style="left:706.51px;top:1407.66px;width:29.00px;height:29px;" viewBox="0 0 512 512"><path fill="#a0a0a0" d="M216 0h80c13.3 0 24 10.7 24 24v168h87.7c17.8 0 26.7 21.5 14.1 34.1L269.7 378.3c-7.5 7.5-19.8 7.5-27.3 0L90.1 226.1c-12.6-12.6-3.7-34.1 14.1-34.1H192V24c0-13.3 10.7-24 24-24zm296 376v112c0 13.3-10.7 24-24 24H24c-13.3 0-24-10.7-24-24V376c0-13.3 10.7-24 24-24h146.7l49 49c20.1 20.1 52.5 20.1 72.6 0l49-49H488c13.3 0 24 10.7 24 24zm-124 88c0-11-9-20-20-20s-20 9-20 20 9 20 20 20 20-9 20-20zm64 0c0-11-9-20-20-20s-20 9-20 20 9 20 20 20 20-9 20-20z"/></svg>
<svg class="i" style="left:833.00px;top:1407.16px;width:25.81px;height:29.5px;" viewBox="0 0 448 512"><path fill="#6c6aa8" d="M436 480h-20V24c0-13.255-10.745-24-24-24H56C42.745 0 32 10.745 32 24v456H12c-6.627 0-12 5.373-12 12v20h448v-20c0-6.627-5.373-12-12-12zM128 76c0-6.627 5.373-12 12-12h40c6.627 0 12 5.373 12 12v40c0 6.627-5.373 12-12 12h-40c-6.627 0-12-5.373-12-12V76zm0 96c0-6.627 5.373-12 12-12h40c6.627 0 12 5.373 12 12v40c0 6.627-5.373 12-12 12h-40c-6.627 0-12-5.373-12-12v-40zm52 148h-40c-6.627 0-12-5.373-12-12v-40c0-6.627 5.373-12 12-12h40c6.627 0 12 5.373 12 12v40c0 6.627-5.373 12-12 12zm76 160h-64v-84c0-6.627 5.373-12 12-12h40c6.627 0 12 5.373 12 12v84zm64-172c0 6.627-5.373 12-12 12h-40c-6.627 0-12-5.373-12-12v-40c0-6.627 5.373-12 12-12h40c6.627 0 12 5.373 12 12v40zm0-96c0 6.627-5.373 12-12 12h-40c-6.627 0-12-5.373-12-12v-40c0-6.627 5.373-12 12-12h40c6.627 0 12 5.373 12 12v40zm0-96c0 6.627-5.373 12-12 12h-40c-6.627 0-12-5.373-12-12V76c0-6.627 5.373-12 12-12h40c6.627 0 12 5.373 12 12v40z"/></svg>
<div class="t " style="left:867.2px;top:1405.7600000000002px;font-size:28.5px;color:rgb(10,20,100);transform:scaleY(1.06);transform-origin:0 26px;">Société RT</div>
<div class="t " style="left:1156.4px;top:1405.7600000000002px;font-size:28.5px;color:#222;transform:scaleY(1.06);transform-origin:0 26px;">A réception</div>
<div class="t " style="right:861.7px;top:1406.5600000000002px;font-size:28.5px;color:rgb(0,105,105);transform:scaleY(1.06);transform-origin:0 26px;">22,50</div>
<svg class="i" style="left:1732px;top:1403.3600000000001px;width:40px;height:40px" viewBox="0 0 40 40"><use href="#av"/></svg>
<div class="t " style="left:1778.5px;top:1405.2600000000002px;font-size:28.5px;color:rgb(10,20,100);transform:scaleY(1.06);transform-origin:0 26px;">Renaud Franck</div>
<div class="b" style="left:2208px;top:1400.8600000000001px;width:136px;height:46px;background:#bc9526;border-radius:7px;"></div>
<div class="t " style="left:1976px;width:600px;text-align:center;top:1406.8600000000001px;font-size:27.5px;color:#fff;font-weight:bold;transform:scaleY(1.06);transform-origin:0 25px;">Impayée</div>
<div class="b" style="left:2418px;top:1407.3600000000001px;width:26px;height:26px;border:2.5px solid #767676;border-radius:5px;background:#fff;"></div>
<div class="b" style="left:486px;top:1463.1200000000001px;width:2014px;height:75.75999999999999px;background:#f9f9f9;"></div>
<div class="b" style="left:486px;top:1536.88px;width:2014px;height:2px;background:#dedede;"></div>
<svg class="i" style="left:502.00px;top:1481.52px;width:21.75px;height:29px;" viewBox="0 0 384 512"><path fill="#65953d" d="M377 105L279.1 7c-4.5-4.5-10.6-7-17-7H256v128h128v-6.1c0-6.3-2.5-12.4-7-16.9zm-153 31V0H24C10.7 0 0 10.7 0 24v464c0 13.3 10.7 24 24 24h336c13.3 0 24-10.7 24-24V160H248c-13.2 0-24-10.8-24-24zM64 72c0-4.42 3.58-8 8-8h80c4.42 0 8 3.58 8 8v16c0 4.42-3.58 8-8 8H72c-4.42 0-8-3.58-8-8V72zm0 80v-16c0-4.42 3.58-8 8-8h80c4.42 0 8 3.58 8 8v16c0 4.42-3.58 8-8 8H72c-4.42 0-8-3.58-8-8zm144 263.88V440c0 4.42-3.58 8-8 8h-16c-4.42 0-8-3.58-8-8v-24.29c-11.29-.58-22.27-4.52-31.37-11.35-3.9-2.93-4.1-8.77-.57-12.14l11.75-11.21c2.77-2.64 6.89-2.760 10.13-.73 3.87 2.42 8.26 3.72 12.82 3.72h28.11c6.5 0 11.8-5.92 11.8-13.19 0-5.95-3.61-11.19-8.77-12.73l-45-13.5c-18.59-5.58-31.58-23.42-31.58-43.39 0-24.52 19.05-44.44 42.67-45.07V232c0-4.42 3.58-8 8-8h16c4.42 0 8 3.58 8 8v24.29c11.29.58 22.27 4.51 31.37 11.35 3.9 2.93 4.1 8.77.57 12.14l-11.75 11.21c-2.77 2.64-6.89 2.76-10.13.73-3.87-2.43-8.26-3.72-12.82-3.72h-28.11c-6.5 0-11.8 5.92-11.8 13.19 0 5.95 3.61 11.19 8.77 12.73l45 13.5c18.59 5.58 31.58 23.42 31.58 43.39 0 24.53-19.05 44.44-42.67 45.07z"/></svg>
<div class="t " style="left:532px;top:1480.6200000000001px;font-size:28.5px;color:rgb(10,20,100);transform:scaleY(1.06);transform-origin:0 26px;">FA2112-0041</div>
<svg class="i" style="left:706.51px;top:1483.42px;width:29.00px;height:29px;" viewBox="0 0 512 512"><path fill="#a0a0a0" d="M216 0h80c13.3 0 24 10.7 24 24v168h87.7c17.8 0 26.7 21.5 14.1 34.1L269.7 378.3c-7.5 7.5-19.8 7.5-27.3 0L90.1 226.1c-12.6-12.6-3.7-34.1 14.1-34.1H192V24c0-13.3 10.7-24 24-24zm296 376v112c0 13.3-10.7 24-24 24H24c-13.3 0-24-10.7-24-24V376c0-13.3 10.7-24 24-24h146.7l49 49c20.1 20.1 52.5 20.1 72.6 0l49-49H488c13.3 0 24 10.7 24 24zm-124 88c0-11-9-20-20-20s-20 9-20 20 9 20 20 20 20-9 20-20zm64 0c0-11-9-20-20-20s-20 9-20 20 9 20 20 20 20-9 20-20z"/></svg>
<svg class="i" style="left:833.00px;top:1482.92px;width:25.81px;height:29.5px;" viewBox="0 0 448 512"><path fill="#6c6aa8" d="M436 480h-20V24c0-13.255-10.745-24-24-24H56C42.745 0 32 10.745 32 24v456H12c-6.627 0-12 5.373-12 12v20h448v-20c0-6.627-5.373-12-12-12zM128 76c0-6.627 5.373-12 12-12h40c6.627 0 12 5.373 12 12v40c0 6.627-5.373 12-12 12h-40c-6.627 0-12-5.373-12-12V76zm0 96c0-6.627 5.373-12 12-12h40c6.627 0 12 5.373 12 12v40c0 6.627-5.373 12-12 12h-40c-6.627 0-12-5.373-12-12v-40zm52 148h-40c-6.627 0-12-5.373-12-12v-40c0-6.627 5.373-12 12-12h40c6.627 0 12 5.373 12 12v40c0 6.627-5.373 12-12 12zm76 160h-64v-84c0-6.627 5.373-12 12-12h40c6.627 0 12 5.373 12 12v84zm64-172c0 6.627-5.373 12-12 12h-40c-6.627 0-12-5.373-12-12v-40c0-6.627 5.373-12 12-12h40c6.627 0 12 5.373 12 12v40zm0-96c0 6.627-5.373 12-12 12h-40c-6.627 0-12-5.373-12-12v-40c0-6.627 5.373-12 12-12h40c6.627 0 12 5.373 12 12v40zm0-96c0 6.627-5.373 12-12 12h-40c-6.627 0-12-5.373-12-12V76c0-6.627 5.373-12 12-12h40c6.627 0 12 5.373 12 12v40z"/></svg>
<div class="t " style="left:867.2px;top:1481.5200000000002px;font-size:28.5px;color:rgb(10,20,100);transform:scaleY(1.06);transform-origin:0 26px;">Société RT</div>
<div class="t " style="left:1156.4px;top:1481.5200000000002px;font-size:28.5px;color:#222;transform:scaleY(1.06);transform-origin:0 26px;">A réception</div>
<div class="t " style="right:861.7px;top:1482.3200000000002px;font-size:28.5px;color:rgb(0,105,105);transform:scaleY(1.06);transform-origin:0 26px;">600,00</div>
<svg class="i" style="left:1732px;top:1479.1200000000001px;width:40px;height:40px" viewBox="0 0 40 40"><use href="#av"/></svg>
<div class="t " style="left:1778.5px;top:1481.0200000000002px;font-size:28.5px;color:rgb(10,20,100);transform:scaleY(1.06);transform-origin:0 26px;">Renaud Franck</div>
<div class="b" style="left:2154px;top:1477.1200000000001px;width:190px;height:46px;background:#fff;border:3px solid #bca52b;border-radius:7px;"></div>
<div class="t " style="left:1949px;width:600px;text-align:center;top:1482.6200000000001px;font-size:27.5px;color:#212529;font-weight:bold;transform:scaleY(1.06);transform-origin:0 25px;">Commencée</div>
<div class="b" style="left:2418px;top:1483.1200000000001px;width:26px;height:26px;border:2.5px solid #767676;border-radius:5px;background:#fff;"></div>
<div class="b" style="left:486px;top:1538.88px;width:2014px;height:75.75999999999999px;background:#fff;"></div>
<div class="b" style="left:486px;top:1612.64px;width:2014px;height:2px;background:#dedede;"></div>
<svg class="i" style="left:502.00px;top:1557.28px;width:21.75px;height:29px;" viewBox="0 0 384 512"><path fill="#65953d" d="M377 105L279.1 7c-4.5-4.5-10.6-7-17-7H256v128h128v-6.1c0-6.3-2.5-12.4-7-16.9zm-153 31V0H24C10.7 0 0 10.7 0 24v464c0 13.3 10.7 24 24 24h336c13.3 0 24-10.7 24-24V160H248c-13.2 0-24-10.8-24-24zM64 72c0-4.42 3.58-8 8-8h80c4.42 0 8 3.58 8 8v16c0 4.42-3.58 8-8 8H72c-4.42 0-8-3.58-8-8V72zm0 80v-16c0-4.42 3.58-8 8-8h80c4.42 0 8 3.58 8 8v16c0 4.42-3.58 8-8 8H72c-4.42 0-8-3.58-8-8zm144 263.88V440c0 4.42-3.58 8-8 8h-16c-4.42 0-8-3.58-8-8v-24.29c-11.29-.58-22.27-4.52-31.37-11.35-3.9-2.93-4.1-8.77-.57-12.14l11.75-11.21c2.77-2.64 6.89-2.760 10.13-.73 3.87 2.42 8.26 3.72 12.82 3.72h28.11c6.5 0 11.8-5.92 11.8-13.19 0-5.95-3.61-11.19-8.77-12.73l-45-13.5c-18.59-5.58-31.58-23.42-31.58-43.39 0-24.52 19.05-44.44 42.67-45.07V232c0-4.42 3.58-8 8-8h16c4.42 0 8 3.58 8 8v24.29c11.29.58 22.27 4.51 31.37 11.35 3.9 2.93 4.1 8.77.57 12.14l-11.75 11.21c-2.77 2.64-6.89 2.76-10.13.73-3.87-2.43-8.26-3.72-12.82-3.72h-28.11c-6.5 0-11.8 5.92-11.8 13.19 0 5.95 3.61 11.19 8.77 12.73l45 13.5c18.59 5.58 31.58 23.42 31.58 43.39 0 24.53-19.05 44.44-42.67 45.07z"/></svg>
<div class="t " style="left:532px;top:1556.38px;font-size:28.5px;color:rgb(10,20,100);transform:scaleY(1.06);transform-origin:0 26px;">FA2106-0040</div>
<svg class="i" style="left:708.62px;top:1559.18px;width:29.00px;height:29px;" viewBox="0 0 512 512"><path fill="#a0a0a0" d="M216 0h80c13.3 0 24 10.7 24 24v168h87.7c17.8 0 26.7 21.5 14.1 34.1L269.7 378.3c-7.5 7.5-19.8 7.5-27.3 0L90.1 226.1c-12.6-12.6-3.7-34.1 14.1-34.1H192V24c0-13.3 10.7-24 24-24zm296 376v112c0 13.3-10.7 24-24 24H24c-13.3 0-24-10.7-24-24V376c0-13.3 10.7-24 24-24h146.7l49 49c20.1 20.1 52.5 20.1 72.6 0l49-49H488c13.3 0 24 10.7 24 24zm-124 88c0-11-9-20-20-20s-20 9-20 20 9 20 20 20 20-9 20-20zm64 0c0-11-9-20-20-20s-20 9-20 20 9 20 20 20 20-9 20-20z"/></svg>
<svg class="i" style="left:833.00px;top:1558.68px;width:25.81px;height:29.5px;" viewBox="0 0 448 512"><path fill="#6c6aa8" d="M436 480h-20V24c0-13.255-10.745-24-24-24H56C42.745 0 32 10.745 32 24v456H12c-6.627 0-12 5.373-12 12v20h448v-20c0-6.627-5.373-12-12-12zM128 76c0-6.627 5.373-12 12-12h40c6.627 0 12 5.373 12 12v40c0 6.627-5.373 12-12 12h-40c-6.627 0-12-5.373-12-12V76zm0 96c0-6.627 5.373-12 12-12h40c6.627 0 12 5.373 12 12v40c0 6.627-5.373 12-12 12h-40c-6.627 0-12-5.373-12-12v-40zm52 148h-40c-6.627 0-12-5.373-12-12v-40c0-6.627 5.373-12 12-12h40c6.627 0 12 5.373 12 12v40c0 6.627-5.373 12-12 12zm76 160h-64v-84c0-6.627 5.373-12 12-12h40c6.627 0 12 5.373 12 12v84zm64-172c0 6.627-5.373 12-12 12h-40c-6.627 0-12-5.373-12-12v-40c0-6.627 5.373-12 12-12h40c6.627 0 12 5.373 12 12v40zm0-96c0 6.627-5.373 12-12 12h-40c-6.627 0-12-5.373-12-12v-40c0-6.627 5.373-12 12-12h40c6.627 0 12 5.373 12 12v40zm0-96c0 6.627-5.373 12-12 12h-40c-6.627 0-12-5.373-12-12V76c0-6.627 5.373-12 12-12h40c6.627 0 12 5.373 12 12v40z"/></svg>
<div class="t " style="left:867.2px;top:1557.2800000000002px;font-size:28.5px;color:rgb(10,20,100);transform:scaleY(1.06);transform-origin:0 26px;">Société RO</div>
<div class="t " style="left:1156.4px;top:1557.2800000000002px;font-size:28.5px;color:#222;transform:scaleY(1.06);transform-origin:0 26px;">A réception</div>
<div class="t " style="right:861.7px;top:1558.0800000000002px;font-size:28.5px;color:rgb(0,105,105);transform:scaleY(1.06);transform-origin:0 26px;">1 500,00</div>
<svg class="i" style="left:1732px;top:1554.88px;width:40px;height:40px" viewBox="0 0 40 40"><use href="#av"/></svg>
<div class="t " style="left:1778.5px;top:1556.7800000000002px;font-size:28.5px;color:rgb(10,20,100);transform:scaleY(1.06);transform-origin:0 26px;">Renaud Franck</div>
<div class="b" style="left:2196px;top:1552.88px;width:148px;height:46px;background:#fff;border:3px solid #cbd3d3;border-radius:7px;"></div>
<div class="t " style="left:1970px;width:600px;text-align:center;top:1558.38px;font-size:27.5px;color:#999;font-weight:bold;transform:scaleY(1.06);transform-origin:0 25px;">Brouillon</div>
<div class="b" style="left:2418px;top:1558.88px;width:26px;height:26px;border:2.5px solid #767676;border-radius:5px;background:#fff;"></div>
<div class="b" style="left:486px;top:1614.64px;width:2014px;height:75.75999999999999px;background:#f9f9f9;"></div>
<div class="b" style="left:486px;top:1688.4px;width:2014px;height:2px;background:#dedede;"></div>
<svg class="i" style="left:502.00px;top:1633.04px;width:21.75px;height:29px;" viewBox="0 0 384 512"><path fill="#65953d" d="M377 105L279.1 7c-4.5-4.5-10.6-7-17-7H256v128h128v-6.1c0-6.3-2.5-12.4-7-16.9zm-153 31V0H24C10.7 0 0 10.7 0 24v464c0 13.3 10.7 24 24 24h336c13.3 0 24-10.7 24-24V160H248c-13.2 0-24-10.8-24-24zM64 72c0-4.42 3.58-8 8-8h80c4.42 0 8 3.58 8 8v16c0 4.42-3.58 8-8 8H72c-4.42 0-8-3.58-8-8V72zm0 80v-16c0-4.42 3.58-8 8-8h80c4.42 0 8 3.58 8 8v16c0 4.42-3.58 8-8 8H72c-4.42 0-8-3.58-8-8zm144 263.88V440c0 4.42-3.58 8-8 8h-16c-4.42 0-8-3.58-8-8v-24.29c-11.29-.58-22.27-4.52-31.37-11.35-3.9-2.93-4.1-8.77-.57-12.14l11.75-11.21c2.77-2.64 6.89-2.760 10.13-.73 3.87 2.42 8.26 3.72 12.82 3.72h28.11c6.5 0 11.8-5.92 11.8-13.19 0-5.95-3.61-11.19-8.77-12.73l-45-13.5c-18.59-5.58-31.58-23.42-31.58-43.39 0-24.52 19.05-44.44 42.67-45.07V232c0-4.42 3.58-8 8-8h16c4.42 0 8 3.58 8 8v24.29c11.29.58 22.27 4.51 31.37 11.35 3.9 2.93 4.1 8.77.57 12.14l-11.75 11.21c-2.77 2.64-6.89 2.76-10.13.73-3.87-2.43-8.26-3.72-12.82-3.72h-28.11c-6.5 0-11.8 5.92-11.8 13.19 0 5.95 3.61 11.19 8.77 12.73l45 13.5c18.59 5.58 31.58 23.42 31.58 43.39 0 24.53-19.05 44.44-42.67 45.07z"/></svg>
<div class="t " style="left:532px;top:1632.14px;font-size:28.5px;color:rgb(10,20,100);transform:scaleY(1.06);transform-origin:0 26px;">FA2106-0039</div>
<svg class="i" style="left:833.00px;top:1634.44px;width:25.81px;height:29.5px;" viewBox="0 0 448 512"><path fill="#6c6aa8" d="M436 480h-20V24c0-13.255-10.745-24-24-24H56C42.745 0 32 10.745 32 24v456H12c-6.627 0-12 5.373-12 12v20h448v-20c0-6.627-5.373-12-12-12zM128 76c0-6.627 5.373-12 12-12h40c6.627 0 12 5.373 12 12v40c0 6.627-5.373 12-12 12h-40c-6.627 0-12-5.373-12-12V76zm0 96c0-6.627 5.373-12 12-12h40c6.627 0 12 5.373 12 12v40c0 6.627-5.373 12-12 12h-40c-6.627 0-12-5.373-12-12v-40zm52 148h-40c-6.627 0-12-5.373-12-12v-40c0-6.627 5.373-12 12-12h40c6.627 0 12 5.373 12 12v40c0 6.627-5.373 12-12 12zm76 160h-64v-84c0-6.627 5.373-12 12-12h40c6.627 0 12 5.373 12 12v84zm64-172c0 6.627-5.373 12-12 12h-40c-6.627 0-12-5.373-12-12v-40c0-6.627 5.373-12 12-12h40c6.627 0 12 5.373 12 12v40zm0-96c0 6.627-5.373 12-12 12h-40c-6.627 0-12-5.373-12-12v-40c0-6.627 5.373-12 12-12h40c6.627 0 12 5.373 12 12v40zm0-96c0 6.627-5.373 12-12 12h-40c-6.627 0-12-5.373-12-12V76c0-6.627 5.373-12 12-12h40c6.627 0 12 5.373 12 12v40z"/></svg>
<div class="t " style="left:867.2px;top:1633.0400000000002px;font-size:28.5px;color:rgb(10,20,100);transform:scaleY(1.06);transform-origin:0 26px;">MC CONSULT</div>
<div class="t " style="left:1156.4px;top:1633.0400000000002px;font-size:28.5px;color:#222;transform:scaleY(1.06);transform-origin:0 26px;">A réception</div>
<div class="t " style="right:861.7px;top:1633.8400000000001px;font-size:28.5px;color:rgb(0,105,105);transform:scaleY(1.06);transform-origin:0 26px;">1 800,00</div>
<svg class="i" style="left:1732px;top:1630.64px;width:40px;height:40px" viewBox="0 0 40 40"><use href="#av"/></svg>
<div class="t " style="left:1778.5px;top:1632.5400000000002px;font-size:28.5px;color:rgb(10,20,100);transform:scaleY(1.06);transform-origin:0 26px;">Renaud Franck</div>
<div class="b" style="left:2208px;top:1628.14px;width:136px;height:46px;background:#bc9526;border-radius:7px;"></div>
<div class="t " style="left:1976px;width:600px;text-align:center;top:1634.14px;font-size:27.5px;color:#fff;font-weight:bold;transform:scaleY(1.06);transform-origin:0 25px;">Impayée</div>
<div class="b" style="left:2418px;top:1634.64px;width:26px;height:26px;border:2.5px solid #767676;border-radius:5px;background:#fff;"></div>
<div class="b" style="left:486px;top:1690.4px;width:2014px;height:75.75999999999999px;background:#fff;"></div>
<div class="b" style="left:486px;top:1764.16px;width:2014px;height:2px;background:#dedede;"></div>
<svg class="i" style="left:502.00px;top:1708.80px;width:21.75px;height:29px;" viewBox="0 0 384 512"><path fill="#65953d" d="M377 105L279.1 7c-4.5-4.5-10.6-7-17-7H256v128h128v-6.1c0-6.3-2.5-12.4-7-16.9zm-153 31V0H24C10.7 0 0 10.7 0 24v464c0 13.3 10.7 24 24 24h336c13.3 0 24-10.7 24-24V160H248c-13.2 0-24-10.8-24-24zM64 72c0-4.42 3.58-8 8-8h80c4.42 0 8 3.58 8 8v16c0 4.42-3.58 8-8 8H72c-4.42 0-8-3.58-8-8V72zm0 80v-16c0-4.42 3.58-8 8-8h80c4.42 0 8 3.58 8 8v16c0 4.42-3.58 8-8 8H72c-4.42 0-8-3.58-8-8zm144 263.88V440c0 4.42-3.58 8-8 8h-16c-4.42 0-8-3.58-8-8v-24.29c-11.29-.58-22.27-4.52-31.37-11.35-3.9-2.93-4.1-8.77-.57-12.14l11.75-11.21c2.77-2.64 6.89-2.760 10.13-.73 3.87 2.42 8.26 3.72 12.82 3.72h28.11c6.5 0 11.8-5.92 11.8-13.19 0-5.95-3.61-11.19-8.77-12.73l-45-13.5c-18.59-5.58-31.58-23.42-31.58-43.39 0-24.52 19.05-44.44 42.67-45.07V232c0-4.42 3.58-8 8-8h16c4.42 0 8 3.58 8 8v24.29c11.29.58 22.27 4.51 31.37 11.35 3.9 2.93 4.1 8.77.57 12.14l-11.75 11.21c-2.77 2.64-6.89 2.76-10.13.73-3.87-2.43-8.26-3.72-12.82-3.72h-28.11c-6.5 0-11.8 5.92-11.8 13.19 0 5.95 3.61 11.19 8.77 12.73l45 13.5c18.59 5.58 31.58 23.42 31.58 43.39 0 24.53-19.05 44.44-42.67 45.07z"/></svg>
<div class="t " style="left:532px;top:1707.9px;font-size:28.5px;color:rgb(10,20,100);transform:scaleY(1.06);transform-origin:0 26px;">FA2105-0038</div>
<svg class="i" style="left:708.62px;top:1710.70px;width:29.00px;height:29px;" viewBox="0 0 512 512"><path fill="#a0a0a0" d="M216 0h80c13.3 0 24 10.7 24 24v168h87.7c17.8 0 26.7 21.5 14.1 34.1L269.7 378.3c-7.5 7.5-19.8 7.5-27.3 0L90.1 226.1c-12.6-12.6-3.7-34.1 14.1-34.1H192V24c0-13.3 10.7-24 24-24zm296 376v112c0 13.3-10.7 24-24 24H24c-13.3 0-24-10.7-24-24V376c0-13.3 10.7-24 24-24h146.7l49 49c20.1 20.1 52.5 20.1 72.6 0l49-49H488c13.3 0 24 10.7 24 24zm-124 88c0-11-9-20-20-20s-20 9-20 20 9 20 20 20 20-9 20-20zm64 0c0-11-9-20-20-20s-20 9-20 20 9 20 20 20 20-9 20-20z"/></svg>
<svg class="i" style="left:833.00px;top:1710.20px;width:25.81px;height:29.5px;" viewBox="0 0 448 512"><path fill="#6c6aa8" d="M436 480h-20V24c0-13.255-10.745-24-24-24H56C42.745 0 32 10.745 32 24v456H12c-6.627 0-12 5.373-12 12v20h448v-20c0-6.627-5.373-12-12-12zM128 76c0-6.627 5.373-12 12-12h40c6.627 0 12 5.373 12 12v40c0 6.627-5.373 12-12 12h-40c-6.627 0-12-5.373-12-12V76zm0 96c0-6.627 5.373-12 12-12h40c6.627 0 12 5.373 12 12v40c0 6.627-5.373 12-12 12h-40c-6.627 0-12-5.373-12-12v-40zm52 148h-40c-6.627 0-12-5.373-12-12v-40c0-6.627 5.373-12 12-12h40c6.627 0 12 5.373 12 12v40c0 6.627-5.373 12-12 12zm76 160h-64v-84c0-6.627 5.373-12 12-12h40c6.627 0 12 5.373 12 12v84zm64-172c0 6.627-5.373 12-12 12h-40c-6.627 0-12-5.373-12-12v-40c0-6.627 5.373-12 12-12h40c6.627 0 12 5.373 12 12v40zm0-96c0 6.627-5.373 12-12 12h-40c-6.627 0-12-5.373-12-12v-40c0-6.627 5.373-12 12-12h40c6.627 0 12 5.373 12 12v40zm0-96c0 6.627-5.373 12-12 12h-40c-6.627 0-12-5.373-12-12V76c0-6.627 5.373-12 12-12h40c6.627 0 12 5.373 12 12v40z"/></svg>
<div class="t " style="left:867.2px;top:1708.8000000000002px;font-size:28.5px;color:rgb(10,20,100);transform:scaleY(1.06);transform-origin:0 26px;">Société Dream RT</div>
<div class="t " style="left:1156.4px;top:1708.8000000000002px;font-size:28.5px;color:#222;transform:scaleY(1.06);transform-origin:0 26px;">A réception</div>
<div class="t " style="right:861.7px;top:1709.6000000000001px;font-size:28.5px;color:rgb(0,105,105);transform:scaleY(1.06);transform-origin:0 26px;">3 000,00</div>
<svg class="i" style="left:1732px;top:1706.4px;width:40px;height:40px" viewBox="0 0 40 40"><use href="#av"/></svg>
<div class="t " style="left:1778.5px;top:1708.3000000000002px;font-size:28.5px;color:rgb(10,20,100);transform:scaleY(1.06);transform-origin:0 26px;">Renaud Franck</div>
<div class="b" style="left:2208px;top:1703.9px;width:136px;height:46px;background:#bc9526;border-radius:7px;"></div>
<div class="t " style="left:1976px;width:600px;text-align:center;top:1709.9px;font-size:27.5px;color:#fff;font-weight:bold;transform:scaleY(1.06);transform-origin:0 25px;">Impayée</div>
<div class="b" style="left:2418px;top:1710.4px;width:26px;height:26px;border:2.5px solid #767676;border-radius:5px;background:#fff;"></div>
<div class="b" style="left:486px;top:1766.16px;width:2014px;height:75.75999999999999px;background:#f9f9f9;"></div>
<div class="b" style="left:486px;top:1839.92px;width:2014px;height:2px;background:#dedede;"></div>
<svg class="i" style="left:502.00px;top:1784.56px;width:21.75px;height:29px;" viewBox="0 0 384 512"><path fill="#65953d" d="M377 105L279.1 7c-4.5-4.5-10.6-7-17-7H256v128h128v-6.1c0-6.3-2.5-12.4-7-16.9zm-153 31V0H24C10.7 0 0 10.7 0 24v464c0 13.3 10.7 24 24 24h336c13.3 0 24-10.7 24-24V160H248c-13.2 0-24-10.8-24-24zM64 72c0-4.42 3.58-8 8-8h80c4.42 0 8 3.58 8 8v16c0 4.42-3.58 8-8 8H72c-4.42 0-8-3.58-8-8V72zm0 80v-16c0-4.42 3.58-8 8-8h80c4.42 0 8 3.58 8 8v16c0 4.42-3.58 8-8 8H72c-4.42 0-8-3.58-8-8zm144 263.88V440c0 4.42-3.58 8-8 8h-16c-4.42 0-8-3.58-8-8v-24.29c-11.29-.58-22.27-4.52-31.37-11.35-3.9-2.93-4.1-8.77-.57-12.14l11.75-11.21c2.77-2.64 6.89-2.760 10.13-.73 3.87 2.42 8.26 3.72 12.82 3.72h28.11c6.5 0 11.8-5.92 11.8-13.19 0-5.95-3.61-11.19-8.77-12.73l-45-13.5c-18.59-5.58-31.58-23.42-31.58-43.39 0-24.52 19.05-44.44 42.67-45.07V232c0-4.42 3.58-8 8-8h16c4.42 0 8 3.58 8 8v24.29c11.29.58 22.27 4.51 31.37 11.35 3.9 2.93 4.1 8.77.57 12.14l-11.75 11.21c-2.77 2.64-6.89 2.76-10.13.73-3.87-2.43-8.26-3.72-12.82-3.72h-28.11c-6.5 0-11.8 5.92-11.8 13.19 0 5.95 3.61 11.19 8.77 12.73l45 13.5c18.59 5.58 31.58 23.42 31.58 43.39 0 24.53-19.05 44.44-42.67 45.07z"/></svg>
<div class="t " style="left:532px;top:1783.66px;font-size:28.5px;color:rgb(10,20,100);transform:scaleY(1.06);transform-origin:0 26px;">FA2105-0037</div>
<svg class="i" style="left:833.00px;top:1785.96px;width:25.81px;height:29.5px;" viewBox="0 0 448 512"><path fill="#6c6aa8" d="M436 480h-20V24c0-13.255-10.745-24-24-24H56C42.745 0 32 10.745 32 24v456H12c-6.627 0-12 5.373-12 12v20h448v-20c0-6.627-5.373-12-12-12zM128 76c0-6.627 5.373-12 12-12h40c6.627 0 12 5.373 12 12v40c0 6.627-5.373 12-12 12h-40c-6.627 0-12-5.373-12-12V76zm0 96c0-6.627 5.373-12 12-12h40c6.627 0 12 5.373 12 12v40c0 6.627-5.373 12-12 12h-40c-6.627 0-12-5.373-12-12v-40zm52 148h-40c-6.627 0-12-5.373-12-12v-40c0-6.627 5.373-12 12-12h40c6.627 0 12 5.373 12 12v40c0 6.627-5.373 12-12 12zm76 160h-64v-84c0-6.627 5.373-12 12-12h40c6.627 0 12 5.373 12 12v84zm64-172c0 6.627-5.373 12-12 12h-40c-6.627 0-12-5.373-12-12v-40c0-6.627 5.373-12 12-12h40c6.627 0 12 5.373 12 12v40zm0-96c0 6.627-5.373 12-12 12h-40c-6.627 0-12-5.373-12-12v-40c0-6.627 5.373-12 12-12h40c6.627 0 12 5.373 12 12v40zm0-96c0 6.627-5.373 12-12 12h-40c-6.627 0-12-5.373-12-12V76c0-6.627 5.373-12 12-12h40c6.627 0 12 5.373 12 12v40z"/></svg>
<div class="t " style="left:867.2px;top:1784.5600000000002px;font-size:28.5px;color:rgb(10,20,100);transform:scaleY(1.06);transform-origin:0 26px;">Société Dream RT</div>
<div class="t " style="left:1156.4px;top:1784.5600000000002px;font-size:28.5px;color:#222;transform:scaleY(1.06);transform-origin:0 26px;">A réception</div>
<div class="t " style="right:861.7px;top:1785.3600000000001px;font-size:28.5px;color:rgb(0,105,105);transform:scaleY(1.06);transform-origin:0 26px;">5 000,00</div>
<svg class="i" style="left:1732px;top:1782.16px;width:40px;height:40px" viewBox="0 0 40 40"><use href="#av"/></svg>
<div class="t " style="left:1778.5px;top:1784.0600000000002px;font-size:28.5px;color:rgb(10,20,100);transform:scaleY(1.06);transform-origin:0 26px;">Renaud Franck</div>
<div class="b" style="left:2208px;top:1779.66px;width:136px;height:46px;background:#bc9526;border-radius:7px;"></div>
<div class="t " style="left:1976px;width:600px;text-align:center;top:1785.66px;font-size:27.5px;color:#fff;font-weight:bold;transform:scaleY(1.06);transform-origin:0 25px;">Impayée</div>
<div class="b" style="left:2418px;top:1786.16px;width:26px;height:26px;border:2.5px solid #767676;border-radius:5px;background:#fff;"></div>
<div class="b" style="left:486px;top:1841.92px;width:2014px;height:75.75999999999999px;background:#fff;"></div>
<div class="b" style="left:486px;top:1915.68px;width:2014px;height:2px;background:#dedede;"></div>
<svg class="i" style="left:502.00px;top:1860.32px;width:21.75px;height:29px;" viewBox="0 0 384 512"><path fill="#65953d" d="M377 105L279.1 7c-4.5-4.5-10.6-7-17-7H256v128h128v-6.1c0-6.3-2.5-12.4-7-16.9zm-153 31V0H24C10.7 0 0 10.7 0 24v464c0 13.3 10.7 24 24 24h336c13.3 0 24-10.7 24-24V160H248c-13.2 0-24-10.8-24-24zM64 72c0-4.42 3.58-8 8-8h80c4.42 0 8 3.58 8 8v16c0 4.42-3.58 8-8 8H72c-4.42 0-8-3.58-8-8V72zm0 80v-16c0-4.42 3.58-8 8-8h80c4.42 0 8 3.58 8 8v16c0 4.42-3.58 8-8 8H72c-4.42 0-8-3.58-8-8zm144 263.88V440c0 4.42-3.58 8-8 8h-16c-4.42 0-8-3.58-8-8v-24.29c-11.29-.58-22.27-4.52-31.37-11.35-3.9-2.93-4.1-8.77-.57-12.14l11.75-11.21c2.77-2.64 6.89-2.760 10.13-.73 3.87 2.42 8.26 3.72 12.82 3.72h28.11c6.5 0 11.8-5.92 11.8-13.19 0-5.95-3.61-11.19-8.77-12.73l-45-13.5c-18.59-5.58-31.58-23.42-31.58-43.39 0-24.52 19.05-44.44 42.67-45.07V232c0-4.42 3.58-8 8-8h16c4.42 0 8 3.58 8 8v24.29c11.29.58 22.27 4.51 31.37 11.35 3.9 2.93 4.1 8.77.57 12.14l-11.75 11.21c-2.77 2.64-6.89 2.76-10.13.73-3.87-2.43-8.26-3.72-12.82-3.72h-28.11c-6.5 0-11.8 5.92-11.8 13.19 0 5.95 3.61 11.19 8.77 12.73l45 13.5c18.59 5.58 31.58 23.42 31.58 43.39 0 24.53-19.05 44.44-42.67 45.07z"/></svg>
<div class="t " style="left:532px;top:1859.42px;font-size:28.5px;color:rgb(10,20,100);transform:scaleY(1.06);transform-origin:0 26px;">FA2012-0032</div>
<svg class="i" style="left:708.62px;top:1862.22px;width:29.00px;height:29px;" viewBox="0 0 512 512"><path fill="#a0a0a0" d="M216 0h80c13.3 0 24 10.7 24 24v168h87.7c17.8 0 26.7 21.5 14.1 34.1L269.7 378.3c-7.5 7.5-19.8 7.5-27.3 0L90.1 226.1c-12.6-12.6-3.7-34.1 14.1-34.1H192V24c0-13.3 10.7-24 24-24zm296 376v112c0 13.3-10.7 24-24 24H24c-13.3 0-24-10.7-24-24V376c0-13.3 10.7-24 24-24h146.7l49 49c20.1 20.1 52.5 20.1 72.6 0l49-49H488c13.3 0 24 10.7 24 24zm-124 88c0-11-9-20-20-20s-20 9-20 20 9 20 20 20 20-9 20-20zm64 0c0-11-9-20-20-20s-20 9-20 20 9 20 20 20 20-9 20-20z"/></svg>
<svg class="i" style="left:833.00px;top:1861.72px;width:25.81px;height:29.5px;" viewBox="0 0 448 512"><path fill="#6c6aa8" d="M436 480h-20V24c0-13.255-10.745-24-24-24H56C42.745 0 32 10.745 32 24v456H12c-6.627 0-12 5.373-12 12v20h448v-20c0-6.627-5.373-12-12-12zM128 76c0-6.627 5.373-12 12-12h40c6.627 0 12 5.373 12 12v40c0 6.627-5.373 12-12 12h-40c-6.627 0-12-5.373-12-12V76zm0 96c0-6.627 5.373-12 12-12h40c6.627 0 12 5.373 12 12v40c0 6.627-5.373 12-12 12h-40c-6.627 0-12-5.373-12-12v-40zm52 148h-40c-6.627 0-12-5.373-12-12v-40c0-6.627 5.373-12 12-12h40c6.627 0 12 5.373 12 12v40c0 6.627-5.373 12-12 12zm76 160h-64v-84c0-6.627 5.373-12 12-12h40c6.627 0 12 5.373 12 12v84zm64-172c0 6.627-5.373 12-12 12h-40c-6.627 0-12-5.373-12-12v-40c0-6.627 5.373-12 12-12h40c6.627 0 12 5.373 12 12v40zm0-96c0 6.627-5.373 12-12 12h-40c-6.627 0-12-5.373-12-12v-40c0-6.627 5.373-12 12-12h40c6.627 0 12 5.373 12 12v40zm0-96c0 6.627-5.373 12-12 12h-40c-6.627 0-12-5.373-12-12V76c0-6.627 5.373-12 12-12h40c6.627 0 12 5.373 12 12v40z"/></svg>
<div class="t " style="left:867.2px;top:1860.3200000000002px;font-size:28.5px;color:rgb(10,20,100);transform:scaleY(1.06);transform-origin:0 26px;">Société RO</div>
<div class="t " style="left:1156.4px;top:1860.3200000000002px;font-size:28.5px;color:#222;transform:scaleY(1.06);transform-origin:0 26px;">A réception</div>
<div class="t " style="right:861.7px;top:1861.1200000000001px;font-size:28.5px;color:rgb(0,105,105);transform:scaleY(1.06);transform-origin:0 26px;">100 000,00</div>
<svg class="i" style="left:1732px;top:1857.92px;width:40px;height:40px" viewBox="0 0 40 40"><use href="#av"/></svg>
<div class="t " style="left:1778.5px;top:1859.8200000000002px;font-size:28.5px;color:rgb(10,20,100);transform:scaleY(1.06);transform-origin:0 26px;">Renaud Franck</div>
<div class="b" style="left:2238px;top:1855.42px;width:106px;height:44px;background:#cad2d2;border-radius:7px;"></div>
<div class="t " style="left:1991px;width:600px;text-align:center;top:1861.42px;font-size:27.5px;color:#777;font-weight:bold;transform:scaleY(1.06);transform-origin:0 25px;">Payée</div>
<div class="b" style="left:2418px;top:1861.92px;width:26px;height:26px;border:2.5px solid #767676;border-radius:5px;background:#fff;"></div>
<div class="b" style="left:486px;top:1917.68px;width:2014px;height:75.75999999999999px;background:#f9f9f9;"></div>
<div class="b" style="left:486px;top:1991.44px;width:2014px;height:2px;background:#dedede;"></div>
<svg class="i" style="left:502.00px;top:1936.08px;width:21.75px;height:29px;" viewBox="0 0 384 512"><path fill="#65953d" d="M377 105L279.1 7c-4.5-4.5-10.6-7-17-7H256v128h128v-6.1c0-6.3-2.5-12.4-7-16.9zm-153 31V0H24C10.7 0 0 10.7 0 24v464c0 13.3 10.7 24 24 24h336c13.3 0 24-10.7 24-24V160H248c-13.2 0-24-10.8-24-24zM64 72c0-4.42 3.58-8 8-8h80c4.42 0 8 3.58 8 8v16c0 4.42-3.58 8-8 8H72c-4.42 0-8-3.58-8-8V72zm0 80v-16c0-4.42 3.58-8 8-8h80c4.42 0 8 3.58 8 8v16c0 4.42-3.58 8-8 8H72c-4.42 0-8-3.58-8-8zm144 263.88V440c0 4.42-3.58 8-8 8h-16c-4.42 0-8-3.58-8-8v-24.29c-11.29-.58-22.27-4.52-31.37-11.35-3.9-2.93-4.1-8.77-.57-12.14l11.75-11.21c2.77-2.64 6.89-2.760 10.13-.73 3.87 2.42 8.26 3.72 12.82 3.72h28.11c6.5 0 11.8-5.92 11.8-13.19 0-5.95-3.61-11.19-8.77-12.73l-45-13.5c-18.59-5.58-31.58-23.42-31.58-43.39 0-24.52 19.05-44.44 42.67-45.07V232c0-4.42 3.58-8 8-8h16c4.42 0 8 3.58 8 8v24.29c11.29.58 22.27 4.51 31.37 11.35 3.9 2.93 4.1 8.77.57 12.14l-11.75 11.21c-2.77 2.64-6.89 2.76-10.13.73-3.87-2.43-8.26-3.72-12.82-3.72h-28.11c-6.5 0-11.8 5.92-11.8 13.19 0 5.95 3.61 11.19 8.77 12.73l45 13.5c18.59 5.58 31.58 23.42 31.58 43.39 0 24.53-19.05 44.44-42.67 45.07z"/></svg>
<div class="t " style="left:532px;top:1935.18px;font-size:28.5px;color:rgb(10,20,100);transform:scaleY(1.06);transform-origin:0 26px;">FA2012-0013</div>
<svg class="i" style="left:708.62px;top:1937.98px;width:29.00px;height:29px;" viewBox="0 0 512 512"><path fill="#a0a0a0" d="M216 0h80c13.3 0 24 10.7 24 24v168h87.7c17.8 0 26.7 21.5 14.1 34.1L269.7 378.3c-7.5 7.5-19.8 7.5-27.3 0L90.1 226.1c-12.6-12.6-3.7-34.1 14.1-34.1H192V24c0-13.3 10.7-24 24-24zm296 376v112c0 13.3-10.7 24-24 24H24c-13.3 0-24-10.7-24-24V376c0-13.3 10.7-24 24-24h146.7l49 49c20.1 20.1 52.5 20.1 72.6 0l49-49H488c13.3 0 24 10.7 24 24zm-124 88c0-11-9-20-20-20s-20 9-20 20 9 20 20 20 20-9 20-20zm64 0c0-11-9-20-20-20s-20 9-20 20 9 20 20 20 20-9 20-20z"/></svg>
<svg class="i" style="left:833.00px;top:1937.48px;width:25.81px;height:29.5px;" viewBox="0 0 448 512"><path fill="#6c6aa8" d="M436 480h-20V24c0-13.255-10.745-24-24-24H56C42.745 0 32 10.745 32 24v456H12c-6.627 0-12 5.373-12 12v20h448v-20c0-6.627-5.373-12-12-12zM128 76c0-6.627 5.373-12 12-12h40c6.627 0 12 5.373 12 12v40c0 6.627-5.373 12-12 12h-40c-6.627 0-12-5.373-12-12V76zm0 96c0-6.627 5.373-12 12-12h40c6.627 0 12 5.373 12 12v40c0 6.627-5.373 12-12 12h-40c-6.627 0-12-5.373-12-12v-40zm52 148h-40c-6.627 0-12-5.373-12-12v-40c0-6.627 5.373-12 12-12h40c6.627 0 12 5.373 12 12v40c0 6.627-5.373 12-12 12zm76 160h-64v-84c0-6.627 5.373-12 12-12h40c6.627 0 12 5.373 12 12v84zm64-172c0 6.627-5.373 12-12 12h-40c-6.627 0-12-5.373-12-12v-40c0-6.627 5.373-12 12-12h40c6.627 0 12 5.373 12 12v40zm0-96c0 6.627-5.373 12-12 12h-40c-6.627 0-12-5.373-12-12v-40c0-6.627 5.373-12 12-12h40c6.627 0 12 5.373 12 12v40zm0-96c0 6.627-5.373 12-12 12h-40c-6.627 0-12-5.373-12-12V76c0-6.627 5.373-12 12-12h40c6.627 0 12 5.373 12 12v40z"/></svg>
<div class="t " style="left:867.2px;top:1936.0800000000002px;font-size:28.5px;color:rgb(10,20,100);transform:scaleY(1.06);transform-origin:0 26px;">MC CONSULT</div>
<div class="t " style="left:1156.4px;top:1936.0800000000002px;font-size:28.5px;color:#222;transform:scaleY(1.06);transform-origin:0 26px;">A réception</div>
<div class="t " style="right:861.7px;top:1936.88px;font-size:28.5px;color:rgb(0,105,105);transform:scaleY(1.06);transform-origin:0 26px;">5 600,00</div>
<svg class="i" style="left:1732px;top:1933.68px;width:40px;height:40px" viewBox="0 0 40 40"><use href="#av"/></svg>
<div class="t " style="left:1778.5px;top:1935.5800000000002px;font-size:28.5px;color:rgb(10,20,100);transform:scaleY(1.06);transform-origin:0 26px;">Renaud Franck</div>
<div class="b" style="left:2238px;top:1931.18px;width:106px;height:44px;background:#cad2d2;border-radius:7px;"></div>
<div class="t " style="left:1991px;width:600px;text-align:center;top:1937.18px;font-size:27.5px;color:#777;font-weight:bold;transform:scaleY(1.06);transform-origin:0 25px;">Payée</div>
<div class="b" style="left:2418px;top:1937.68px;width:26px;height:26px;border:2.5px solid #767676;border-radius:5px;background:#fff;"></div>
<div class="b" style="left:486px;top:1993.44px;width:2014px;height:75.75999999999976px;background:#fff;"></div>
<div class="b" style="left:486px;top:2067.2px;width:2014px;height:2px;background:#dedede;"></div>
<svg class="i" style="left:502.00px;top:2011.84px;width:21.75px;height:29px;" viewBox="0 0 384 512"><path fill="#65953d" d="M377 105L279.1 7c-4.5-4.5-10.6-7-17-7H256v128h128v-6.1c0-6.3-2.5-12.4-7-16.9zm-153 31V0H24C10.7 0 0 10.7 0 24v464c0 13.3 10.7 24 24 24h336c13.3 0 24-10.7 24-24V160H248c-13.2 0-24-10.8-24-24zM64 72c0-4.42 3.58-8 8-8h80c4.42 0 8 3.58 8 8v16c0 4.42-3.58 8-8 8H72c-4.42 0-8-3.58-8-8V72zm0 80v-16c0-4.42 3.58-8 8-8h80c4.42 0 8 3.58 8 8v16c0 4.42-3.58 8-8 8H72c-4.42 0-8-3.58-8-8zm144 263.88V440c0 4.42-3.58 8-8 8h-16c-4.42 0-8-3.58-8-8v-24.29c-11.29-.58-22.27-4.52-31.37-11.35-3.9-2.93-4.1-8.77-.57-12.14l11.75-11.21c2.77-2.64 6.89-2.760 10.13-.73 3.87 2.42 8.26 3.72 12.82 3.72h28.11c6.5 0 11.8-5.92 11.8-13.19 0-5.95-3.61-11.19-8.77-12.73l-45-13.5c-18.59-5.58-31.58-23.42-31.58-43.39 0-24.52 19.05-44.44 42.67-45.07V232c0-4.42 3.58-8 8-8h16c4.42 0 8 3.58 8 8v24.29c11.29.58 22.27 4.51 31.37 11.35 3.9 2.93 4.1 8.77.57 12.14l-11.75 11.21c-2.77 2.64-6.89 2.76-10.13.73-3.87-2.43-8.26-3.72-12.82-3.72h-28.11c-6.5 0-11.8 5.92-11.8 13.19 0 5.95 3.61 11.19 8.77 12.73l45 13.5c18.59 5.58 31.58 23.42 31.58 43.39 0 24.53-19.05 44.44-42.67 45.07z"/></svg>
<div class="t " style="left:532px;top:2010.94px;font-size:28.5px;color:rgb(10,20,100);transform:scaleY(1.06);transform-origin:0 26px;">FA2011-0031</div>
<svg class="i" style="left:706.51px;top:2013.74px;width:29.00px;height:29px;" viewBox="0 0 512 512"><path fill="#a0a0a0" d="M216 0h80c13.3 0 24 10.7 24 24v168h87.7c17.8 0 26.7 21.5 14.1 34.1L269.7 378.3c-7.5 7.5-19.8 7.5-27.3 0L90.1 226.1c-12.6-12.6-3.7-34.1 14.1-34.1H192V24c0-13.3 10.7-24 24-24zm296 376v112c0 13.3-10.7 24-24 24H24c-13.3 0-24-10.7-24-24V376c0-13.3 10.7-24 24-24h146.7l49 49c20.1 20.1 52.5 20.1 72.6 0l49-49H488c13.3 0 24 10.7 24 24zm-124 88c0-11-9-20-20-20s-20 9-20 20 9 20 20 20 20-9 20-20zm64 0c0-11-9-20-20-20s-20 9-20 20 9 20 20 20 20-9 20-20z"/></svg>
<svg class="i" style="left:833.00px;top:2013.24px;width:25.81px;height:29.5px;" viewBox="0 0 448 512"><path fill="#6c6aa8" d="M436 480h-20V24c0-13.255-10.745-24-24-24H56C42.745 0 32 10.745 32 24v456H12c-6.627 0-12 5.373-12 12v20h448v-20c0-6.627-5.373-12-12-12zM128 76c0-6.627 5.373-12 12-12h40c6.627 0 12 5.373 12 12v40c0 6.627-5.373 12-12 12h-40c-6.627 0-12-5.373-12-12V76zm0 96c0-6.627 5.373-12 12-12h40c6.627 0 12 5.373 12 12v40c0 6.627-5.373 12-12 12h-40c-6.627 0-12-5.373-12-12v-40zm52 148h-40c-6.627 0-12-5.373-12-12v-40c0-6.627 5.373-12 12-12h40c6.627 0 12 5.373 12 12v40c0 6.627-5.373 12-12 12zm76 160h-64v-84c0-6.627 5.373-12 12-12h40c6.627 0 12 5.373 12 12v84zm64-172c0 6.627-5.373 12-12 12h-40c-6.627 0-12-5.373-12-12v-40c0-6.627 5.373-12 12-12h40c6.627 0 12 5.373 12 12v40zm0-96c0 6.627-5.373 12-12 12h-40c-6.627 0-12-5.373-12-12v-40c0-6.627 5.373-12 12-12h40c6.627 0 12 5.373 12 12v40zm0-96c0 6.627-5.373 12-12 12h-40c-6.627 0-12-5.373-12-12V76c0-6.627 5.373-12 12-12h40c6.627 0 12 5.373 12 12v40z"/></svg>
<div class="t " style="left:867.2px;top:2011.8400000000001px;font-size:28.5px;color:rgb(10,20,100);transform:scaleY(1.06);transform-origin:0 26px;">Société RO</div>
<div class="t " style="left:1156.4px;top:2011.8400000000001px;font-size:28.5px;color:#222;transform:scaleY(1.06);transform-origin:0 26px;">A réception</div>
<div class="t " style="right:861.7px;top:2012.64px;font-size:28.5px;color:rgb(0,105,105);transform:scaleY(1.06);transform-origin:0 26px;">30 000,00</div>
<svg class="i" style="left:1732px;top:2009.44px;width:40px;height:40px" viewBox="0 0 40 40"><use href="#av"/></svg>
<div class="t " style="left:1778.5px;top:2011.3400000000001px;font-size:28.5px;color:rgb(10,20,100);transform:scaleY(1.06);transform-origin:0 26px;">Renaud Franck</div>
<div class="b" style="left:2238px;top:2006.94px;width:106px;height:44px;background:#cad2d2;border-radius:7px;"></div>
<div class="t " style="left:1991px;width:600px;text-align:center;top:2012.94px;font-size:27.5px;color:#777;font-weight:bold;transform:scaleY(1.06);transform-origin:0 25px;">Payée</div>
<div class="b" style="left:2418px;top:2013.44px;width:26px;height:26px;border:2.5px solid #767676;border-radius:5px;background:#fff;"></div>
<div class="b" style="left:486px;top:2069.2px;width:2014px;height:75.76000000000022px;background:#f9f9f9;"></div>
<div class="b" style="left:486px;top:2142.96px;width:2014px;height:2px;background:#dedede;"></div>
<svg class="i" style="left:502.00px;top:2087.60px;width:21.75px;height:29px;" viewBox="0 0 384 512"><path fill="#65953d" d="M377 105L279.1 7c-4.5-4.5-10.6-7-17-7H256v128h128v-6.1c0-6.3-2.5-12.4-7-16.9zm-153 31V0H24C10.7 0 0 10.7 0 24v464c0 13.3 10.7 24 24 24h336c13.3 0 24-10.7 24-24V160H248c-13.2 0-24-10.8-24-24zM64 72c0-4.42 3.58-8 8-8h80c4.42 0 8 3.58 8 8v16c0 4.42-3.58 8-8 8H72c-4.42 0-8-3.58-8-8V72zm0 80v-16c0-4.42 3.58-8 8-8h80c4.42 0 8 3.58 8 8v16c0 4.42-3.58 8-8 8H72c-4.42 0-8-3.58-8-8zm144 263.88V440c0 4.42-3.58 8-8 8h-16c-4.42 0-8-3.58-8-8v-24.29c-11.29-.58-22.27-4.52-31.37-11.35-3.9-2.93-4.1-8.77-.57-12.14l11.75-11.21c2.77-2.64 6.89-2.760 10.13-.73 3.87 2.42 8.26 3.72 12.82 3.72h28.11c6.5 0 11.8-5.92 11.8-13.19 0-5.95-3.61-11.19-8.77-12.73l-45-13.5c-18.59-5.58-31.58-23.42-31.58-43.39 0-24.52 19.05-44.44 42.67-45.07V232c0-4.42 3.58-8 8-8h16c4.42 0 8 3.58 8 8v24.29c11.29.58 22.27 4.51 31.37 11.35 3.9 2.93 4.1 8.77.57 12.14l-11.75 11.21c-2.77 2.64-6.89 2.76-10.13.73-3.87-2.43-8.26-3.72-12.82-3.72h-28.11c-6.5 0-11.8 5.92-11.8 13.19 0 5.95 3.61 11.19 8.77 12.73l45 13.5c18.59 5.58 31.58 23.42 31.58 43.39 0 24.53-19.05 44.44-42.67 45.07z"/></svg>
<div class="t " style="left:532px;top:2086.7px;font-size:28.5px;color:rgb(10,20,100);transform:scaleY(1.06);transform-origin:0 26px;">FA2011-0012</div>
<svg class="i" style="left:706.51px;top:2089.50px;width:29.00px;height:29px;" viewBox="0 0 512 512"><path fill="#a0a0a0" d="M216 0h80c13.3 0 24 10.7 24 24v168h87.7c17.8 0 26.7 21.5 14.1 34.1L269.7 378.3c-7.5 7.5-19.8 7.5-27.3 0L90.1 226.1c-12.6-12.6-3.7-34.1 14.1-34.1H192V24c0-13.3 10.7-24 24-24zm296 376v112c0 13.3-10.7 24-24 24H24c-13.3 0-24-10.7-24-24V376c0-13.3 10.7-24 24-24h146.7l49 49c20.1 20.1 52.5 20.1 72.6 0l49-49H488c13.3 0 24 10.7 24 24zm-124 88c0-11-9-20-20-20s-20 9-20 20 9 20 20 20 20-9 20-20zm64 0c0-11-9-20-20-20s-20 9-20 20 9 20 20 20 20-9 20-20z"/></svg>
<svg class="i" style="left:833.00px;top:2089.00px;width:25.81px;height:29.5px;" viewBox="0 0 448 512"><path fill="#6c6aa8" d="M436 480h-20V24c0-13.255-10.745-24-24-24H56C42.745 0 32 10.745 32 24v456H12c-6.627 0-12 5.373-12 12v20h448v-20c0-6.627-5.373-12-12-12zM128 76c0-6.627 5.373-12 12-12h40c6.627 0 12 5.373 12 12v40c0 6.627-5.373 12-12 12h-40c-6.627 0-12-5.373-12-12V76zm0 96c0-6.627 5.373-12 12-12h40c6.627 0 12 5.373 12 12v40c0 6.627-5.373 12-12 12h-40c-6.627 0-12-5.373-12-12v-40zm52 148h-40c-6.627 0-12-5.373-12-12v-40c0-6.627 5.373-12 12-12h40c6.627 0 12 5.373 12 12v40c0 6.627-5.373 12-12 12zm76 160h-64v-84c0-6.627 5.373-12 12-12h40c6.627 0 12 5.373 12 12v84zm64-172c0 6.627-5.373 12-12 12h-40c-6.627 0-12-5.373-12-12v-40c0-6.627 5.373-12 12-12h40c6.627 0 12 5.373 12 12v40zm0-96c0 6.627-5.373 12-12 12h-40c-6.627 0-12-5.373-12-12v-40c0-6.627 5.373-12 12-12h40c6.627 0 12 5.373 12 12v40zm0-96c0 6.627-5.373 12-12 12h-40c-6.627 0-12-5.373-12-12V76c0-6.627 5.373-12 12-12h40c6.627 0 12 5.373 12 12v40z"/></svg>
<div class="t " style="left:867.2px;top:2087.6px;font-size:28.5px;color:rgb(10,20,100);transform:scaleY(1.06);transform-origin:0 26px;">MC CONSULT</div>
<div class="t " style="left:1156.4px;top:2087.6px;font-size:28.5px;color:#222;transform:scaleY(1.06);transform-origin:0 26px;">A réception</div>
<div class="t " style="right:861.7px;top:2088.3999999999996px;font-size:28.5px;color:rgb(0,105,105);transform:scaleY(1.06);transform-origin:0 26px;">14 000,00</div>
<svg class="i" style="left:1732px;top:2085.2px;width:40px;height:40px" viewBox="0 0 40 40"><use href="#av"/></svg>
<div class="t " style="left:1778.5px;top:2087.1px;font-size:28.5px;color:rgb(10,20,100);transform:scaleY(1.06);transform-origin:0 26px;">Renaud Franck</div>
<div class="b" style="left:2238px;top:2082.7px;width:106px;height:44px;background:#cad2d2;border-radius:7px;"></div>
<div class="t " style="left:1991px;width:600px;text-align:center;top:2088.7px;font-size:27.5px;color:#777;font-weight:bold;transform:scaleY(1.06);transform-origin:0 25px;">Payée</div>
<div class="b" style="left:2418px;top:2089.2px;width:26px;height:26px;border:2.5px solid #767676;border-radius:5px;background:#fff;"></div>
<div class="b" style="left:486px;top:2144.96px;width:2014px;height:75.76000000000022px;background:#fff;"></div>
<div class="b" style="left:486px;top:2218.7200000000003px;width:2014px;height:2px;background:#dedede;"></div>
<svg class="i" style="left:502.00px;top:2163.36px;width:21.75px;height:29px;" viewBox="0 0 384 512"><path fill="#65953d" d="M377 105L279.1 7c-4.5-4.5-10.6-7-17-7H256v128h128v-6.1c0-6.3-2.5-12.4-7-16.9zm-153 31V0H24C10.7 0 0 10.7 0 24v464c0 13.3 10.7 24 24 24h336c13.3 0 24-10.7 24-24V160H248c-13.2 0-24-10.8-24-24zM64 72c0-4.42 3.58-8 8-8h80c4.42 0 8 3.58 8 8v16c0 4.42-3.58 8-8 8H72c-4.42 0-8-3.58-8-8V72zm0 80v-16c0-4.42 3.58-8 8-8h80c4.42 0 8 3.58 8 8v16c0 4.42-3.58 8-8 8H72c-4.42 0-8-3.58-8-8zm144 263.88V440c0 4.42-3.58 8-8 8h-16c-4.42 0-8-3.58-8-8v-24.29c-11.29-.58-22.27-4.52-31.37-11.35-3.9-2.93-4.1-8.77-.57-12.14l11.75-11.21c2.77-2.64 6.89-2.760 10.13-.73 3.87 2.42 8.26 3.72 12.82 3.72h28.11c6.5 0 11.8-5.92 11.8-13.19 0-5.95-3.61-11.19-8.77-12.73l-45-13.5c-18.59-5.58-31.58-23.42-31.58-43.39 0-24.52 19.05-44.44 42.67-45.07V232c0-4.42 3.58-8 8-8h16c4.42 0 8 3.58 8 8v24.29c11.29.58 22.27 4.51 31.37 11.35 3.9 2.93 4.1 8.77.57 12.14l-11.75 11.21c-2.77 2.64-6.89 2.76-10.13.73-3.87-2.43-8.26-3.72-12.82-3.72h-28.11c-6.5 0-11.8 5.92-11.8 13.19 0 5.95 3.61 11.19 8.77 12.73l45 13.5c18.59 5.58 31.58 23.42 31.58 43.39 0 24.53-19.05 44.44-42.67 45.07z"/></svg>
<div class="t " style="left:532px;top:2162.46px;font-size:28.5px;color:rgb(10,20,100);transform:scaleY(1.06);transform-origin:0 26px;">FA2010-0033</div>
<svg class="i" style="left:708.62px;top:2165.26px;width:29.00px;height:29px;" viewBox="0 0 512 512"><path fill="#a0a0a0" d="M216 0h80c13.3 0 24 10.7 24 24v168h87.7c17.8 0 26.7 21.5 14.1 34.1L269.7 378.3c-7.5 7.5-19.8 7.5-27.3 0L90.1 226.1c-12.6-12.6-3.7-34.1 14.1-34.1H192V24c0-13.3 10.7-24 24-24zm296 376v112c0 13.3-10.7 24-24 24H24c-13.3 0-24-10.7-24-24V376c0-13.3 10.7-24 24-24h146.7l49 49c20.1 20.1 52.5 20.1 72.6 0l49-49H488c13.3 0 24 10.7 24 24zm-124 88c0-11-9-20-20-20s-20 9-20 20 9 20 20 20 20-9 20-20zm64 0c0-11-9-20-20-20s-20 9-20 20 9 20 20 20 20-9 20-20z"/></svg>
<svg class="i" style="left:833.00px;top:2164.76px;width:25.81px;height:29.5px;" viewBox="0 0 448 512"><path fill="#6c6aa8" d="M436 480h-20V24c0-13.255-10.745-24-24-24H56C42.745 0 32 10.745 32 24v456H12c-6.627 0-12 5.373-12 12v20h448v-20c0-6.627-5.373-12-12-12zM128 76c0-6.627 5.373-12 12-12h40c6.627 0 12 5.373 12 12v40c0 6.627-5.373 12-12 12h-40c-6.627 0-12-5.373-12-12V76zm0 96c0-6.627 5.373-12 12-12h40c6.627 0 12 5.373 12 12v40c0 6.627-5.373 12-12 12h-40c-6.627 0-12-5.373-12-12v-40zm52 148h-40c-6.627 0-12-5.373-12-12v-40c0-6.627 5.373-12 12-12h40c6.627 0 12 5.373 12 12v40c0 6.627-5.373 12-12 12zm76 160h-64v-84c0-6.627 5.373-12 12-12h40c6.627 0 12 5.373 12 12v84zm64-172c0 6.627-5.373 12-12 12h-40c-6.627 0-12-5.373-12-12v-40c0-6.627 5.373-12 12-12h40c6.627 0 12 5.373 12 12v40zm0-96c0 6.627-5.373 12-12 12h-40c-6.627 0-12-5.373-12-12v-40c0-6.627 5.373-12 12-12h40c6.627 0 12 5.373 12 12v40zm0-96c0 6.627-5.373 12-12 12h-40c-6.627 0-12-5.373-12-12V76c0-6.627 5.373-12 12-12h40c6.627 0 12 5.373 12 12v40z"/></svg>
<div class="t " style="left:867.2px;top:2163.36px;font-size:28.5px;color:rgb(10,20,100);transform:scaleY(1.06);transform-origin:0 26px;">Société RO</div>
<div class="t " style="left:1156.4px;top:2163.36px;font-size:28.5px;color:#222;transform:scaleY(1.06);transform-origin:0 26px;">A réception</div>
<div class="t " style="right:861.7px;top:2164.16px;font-size:28.5px;color:rgb(0,105,105);transform:scaleY(1.06);transform-origin:0 26px;">18 000,00</div>
<svg class="i" style="left:1732px;top:2160.96px;width:40px;height:40px" viewBox="0 0 40 40"><use href="#av"/></svg>
<div class="t " style="left:1778.5px;top:2162.86px;font-size:28.5px;color:rgb(10,20,100);transform:scaleY(1.06);transform-origin:0 26px;">Renaud Franck</div>
<div class="b" style="left:2238px;top:2158.46px;width:106px;height:44px;background:#cad2d2;border-radius:7px;"></div>
<div class="t " style="left:1991px;width:600px;text-align:center;top:2164.46px;font-size:27.5px;color:#777;font-weight:bold;transform:scaleY(1.06);transform-origin:0 25px;">Payée</div>
<div class="b" style="left:2418px;top:2164.96px;width:26px;height:26px;border:2.5px solid #767676;border-radius:5px;background:#fff;"></div>
<div class="b" style="left:486px;top:2220.7200000000003px;width:2014px;height:75.75999999999976px;background:#f9f9f9;"></div>
<div class="b" style="left:486px;top:2294.48px;width:2014px;height:2px;background:#dedede;"></div>
<svg class="i" style="left:502.00px;top:2239.12px;width:21.75px;height:29px;" viewBox="0 0 384 512"><path fill="#65953d" d="M377 105L279.1 7c-4.5-4.5-10.6-7-17-7H256v128h128v-6.1c0-6.3-2.5-12.4-7-16.9zm-153 31V0H24C10.7 0 0 10.7 0 24v464c0 13.3 10.7 24 24 24h336c13.3 0 24-10.7 24-24V160H248c-13.2 0-24-10.8-24-24zM64 72c0-4.42 3.58-8 8-8h80c4.42 0 8 3.58 8 8v16c0 4.42-3.58 8-8 8H72c-4.42 0-8-3.58-8-8V72zm0 80v-16c0-4.42 3.58-8 8-8h80c4.42 0 8 3.58 8 8v16c0 4.42-3.58 8-8 8H72c-4.42 0-8-3.58-8-8zm144 263.88V440c0 4.42-3.58 8-8 8h-16c-4.42 0-8-3.58-8-8v-24.29c-11.29-.58-22.27-4.52-31.37-11.35-3.9-2.93-4.1-8.77-.57-12.14l11.75-11.21c2.77-2.64 6.89-2.760 10.13-.73 3.87 2.42 8.26 3.72 12.82 3.72h28.11c6.5 0 11.8-5.92 11.8-13.19 0-5.95-3.61-11.19-8.77-12.73l-45-13.5c-18.59-5.58-31.58-23.42-31.58-43.39 0-24.52 19.05-44.44 42.67-45.07V232c0-4.42 3.58-8 8-8h16c4.42 0 8 3.58 8 8v24.29c11.29.58 22.27 4.51 31.37 11.35 3.9 2.93 4.1 8.77.57 12.14l-11.75 11.21c-2.77 2.64-6.89 2.76-10.13.73-3.87-2.43-8.26-3.72-12.82-3.72h-28.11c-6.5 0-11.8 5.92-11.8 13.19 0 5.95 3.61 11.19 8.77 12.73l45 13.5c18.59 5.58 31.58 23.42 31.58 43.39 0 24.53-19.05 44.44-42.67 45.07z"/></svg>
<div class="t " style="left:532px;top:2238.2200000000003px;font-size:28.5px;color:rgb(10,20,100);transform:scaleY(1.06);transform-origin:0 26px;">FA2010-0025</div>
<svg class="i" style="left:708.62px;top:2241.02px;width:29.00px;height:29px;" viewBox="0 0 512 512"><path fill="#a0a0a0" d="M216 0h80c13.3 0 24 10.7 24 24v168h87.7c17.8 0 26.7 21.5 14.1 34.1L269.7 378.3c-7.5 7.5-19.8 7.5-27.3 0L90.1 226.1c-12.6-12.6-3.7-34.1 14.1-34.1H192V24c0-13.3 10.7-24 24-24zm296 376v112c0 13.3-10.7 24-24 24H24c-13.3 0-24-10.7-24-24V376c0-13.3 10.7-24 24-24h146.7l49 49c20.1 20.1 52.5 20.1 72.6 0l49-49H488c13.3 0 24 10.7 24 24zm-124 88c0-11-9-20-20-20s-20 9-20 20 9 20 20 20 20-9 20-20zm64 0c0-11-9-20-20-20s-20 9-20 20 9 20 20 20 20-9 20-20z"/></svg>
<svg class="i" style="left:833.00px;top:2240.52px;width:25.81px;height:29.5px;" viewBox="0 0 448 512"><path fill="#6c6aa8" d="M436 480h-20V24c0-13.255-10.745-24-24-24H56C42.745 0 32 10.745 32 24v456H12c-6.627 0-12 5.373-12 12v20h448v-20c0-6.627-5.373-12-12-12zM128 76c0-6.627 5.373-12 12-12h40c6.627 0 12 5.373 12 12v40c0 6.627-5.373 12-12 12h-40c-6.627 0-12-5.373-12-12V76zm0 96c0-6.627 5.373-12 12-12h40c6.627 0 12 5.373 12 12v40c0 6.627-5.373 12-12 12h-40c-6.627 0-12-5.373-12-12v-40zm52 148h-40c-6.627 0-12-5.373-12-12v-40c0-6.627 5.373-12 12-12h40c6.627 0 12 5.373 12 12v40c0 6.627-5.373 12-12 12zm76 160h-64v-84c0-6.627 5.373-12 12-12h40c6.627 0 12 5.373 12 12v84zm64-172c0 6.627-5.373 12-12 12h-40c-6.627 0-12-5.373-12-12v-40c0-6.627 5.373-12 12-12h40c6.627 0 12 5.373 12 12v40zm0-96c0 6.627-5.373 12-12 12h-40c-6.627 0-12-5.373-12-12v-40c0-6.627 5.373-12 12-12h40c6.627 0 12 5.373 12 12v40zm0-96c0 6.627-5.373 12-12 12h-40c-6.627 0-12-5.373-12-12V76c0-6.627 5.373-12 12-12h40c6.627 0 12 5.373 12 12v40z"/></svg>
<div class="t " style="left:867.2px;top:2239.1200000000003px;font-size:28.5px;color:rgb(10,20,100);transform:scaleY(1.06);transform-origin:0 26px;">Société Dream RT</div>
<div class="t " style="left:1156.4px;top:2239.1200000000003px;font-size:28.5px;color:#222;transform:scaleY(1.06);transform-origin:0 26px;">A réception</div>
<div class="t " style="right:861.7px;top:2239.92px;font-size:28.5px;color:rgb(0,105,105);transform:scaleY(1.06);transform-origin:0 26px;">6 400,00</div>
<svg class="i" style="left:1732px;top:2236.7200000000003px;width:40px;height:40px" viewBox="0 0 40 40"><use href="#av"/></svg>
<div class="t " style="left:1778.5px;top:2238.6200000000003px;font-size:28.5px;color:rgb(10,20,100);transform:scaleY(1.06);transform-origin:0 26px;">Renaud Franck</div>
<div class="b" style="left:2238px;top:2234.2200000000003px;width:106px;height:44px;background:#cad2d2;border-radius:7px;"></div>
<div class="t " style="left:1991px;width:600px;text-align:center;top:2240.2200000000003px;font-size:27.5px;color:#777;font-weight:bold;transform:scaleY(1.06);transform-origin:0 25px;">Payée</div>
<div class="b" style="left:2418px;top:2240.7200000000003px;width:26px;height:26px;border:2.5px solid #767676;border-radius:5px;background:#fff;"></div>
<div class="b" style="left:486px;top:2296.48px;width:2014px;height:75.76000000000022px;background:#fff;"></div>
<div class="b" style="left:486px;top:2370.2400000000002px;width:2014px;height:2px;background:#dedede;"></div>
<svg class="i" style="left:502.00px;top:2314.88px;width:21.75px;height:29px;" viewBox="0 0 384 512"><path fill="#65953d" d="M377 105L279.1 7c-4.5-4.5-10.6-7-17-7H256v128h128v-6.1c0-6.3-2.5-12.4-7-16.9zm-153 31V0H24C10.7 0 0 10.7 0 24v464c0 13.3 10.7 24 24 24h336c13.3 0 24-10.7 24-24V160H248c-13.2 0-24-10.8-24-24zM64 72c0-4.42 3.58-8 8-8h80c4.42 0 8 3.58 8 8v16c0 4.42-3.58 8-8 8H72c-4.42 0-8-3.58-8-8V72zm0 80v-16c0-4.42 3.58-8 8-8h80c4.42 0 8 3.58 8 8v16c0 4.42-3.58 8-8 8H72c-4.42 0-8-3.58-8-8zm144 263.88V440c0 4.42-3.58 8-8 8h-16c-4.42 0-8-3.58-8-8v-24.29c-11.29-.58-22.27-4.52-31.37-11.35-3.9-2.93-4.1-8.77-.57-12.14l11.75-11.21c2.77-2.64 6.89-2.760 10.13-.73 3.87 2.42 8.26 3.72 12.82 3.72h28.11c6.5 0 11.8-5.92 11.8-13.19 0-5.95-3.61-11.19-8.77-12.73l-45-13.5c-18.59-5.58-31.58-23.42-31.58-43.39 0-24.52 19.05-44.44 42.67-45.07V232c0-4.42 3.58-8 8-8h16c4.42 0 8 3.58 8 8v24.29c11.29.58 22.27 4.51 31.37 11.35 3.9 2.93 4.1 8.77.57 12.14l-11.75 11.21c-2.77 2.64-6.89 2.76-10.13.73-3.87-2.43-8.26-3.72-12.82-3.72h-28.11c-6.5 0-11.8 5.92-11.8 13.19 0 5.95 3.61 11.19 8.77 12.73l45 13.5c18.59 5.58 31.58 23.42 31.58 43.39 0 24.53-19.05 44.44-42.67 45.07z"/></svg>
<div class="t " style="left:532px;top:2313.98px;font-size:28.5px;color:rgb(10,20,100);transform:scaleY(1.06);transform-origin:0 26px;">FA2010-0019</div>
<svg class="i" style="left:708.62px;top:2316.78px;width:29.00px;height:29px;" viewBox="0 0 512 512"><path fill="#a0a0a0" d="M216 0h80c13.3 0 24 10.7 24 24v168h87.7c17.8 0 26.7 21.5 14.1 34.1L269.7 378.3c-7.5 7.5-19.8 7.5-27.3 0L90.1 226.1c-12.6-12.6-3.7-34.1 14.1-34.1H192V24c0-13.3 10.7-24 24-24zm296 376v112c0 13.3-10.7 24-24 24H24c-13.3 0-24-10.7-24-24V376c0-13.3 10.7-24 24-24h146.7l49 49c20.1 20.1 52.5 20.1 72.6 0l49-49H488c13.3 0 24 10.7 24 24zm-124 88c0-11-9-20-20-20s-20 9-20 20 9 20 20 20 20-9 20-20zm64 0c0-11-9-20-20-20s-20 9-20 20 9 20 20 20 20-9 20-20z"/></svg>
<svg class="i" style="left:833.00px;top:2316.28px;width:25.81px;height:29.5px;" viewBox="0 0 448 512"><path fill="#6c6aa8" d="M436 480h-20V24c0-13.255-10.745-24-24-24H56C42.745 0 32 10.745 32 24v456H12c-6.627 0-12 5.373-12 12v20h448v-20c0-6.627-5.373-12-12-12zM128 76c0-6.627 5.373-12 12-12h40c6.627 0 12 5.373 12 12v40c0 6.627-5.373 12-12 12h-40c-6.627 0-12-5.373-12-12V76zm0 96c0-6.627 5.373-12 12-12h40c6.627 0 12 5.373 12 12v40c0 6.627-5.373 12-12 12h-40c-6.627 0-12-5.373-12-12v-40zm52 148h-40c-6.627 0-12-5.373-12-12v-40c0-6.627 5.373-12 12-12h40c6.627 0 12 5.373 12 12v40c0 6.627-5.373 12-12 12zm76 160h-64v-84c0-6.627 5.373-12 12-12h40c6.627 0 12 5.373 12 12v84zm64-172c0 6.627-5.373 12-12 12h-40c-6.627 0-12-5.373-12-12v-40c0-6.627 5.373-12 12-12h40c6.627 0 12 5.373 12 12v40zm0-96c0 6.627-5.373 12-12 12h-40c-6.627 0-12-5.373-12-12v-40c0-6.627 5.373-12 12-12h40c6.627 0 12 5.373 12 12v40zm0-96c0 6.627-5.373 12-12 12h-40c-6.627 0-12-5.373-12-12V76c0-6.627 5.373-12 12-12h40c6.627 0 12 5.373 12 12v40z"/></svg>
<div class="t " style="left:867.2px;top:2314.88px;font-size:28.5px;color:rgb(10,20,100);transform:scaleY(1.06);transform-origin:0 26px;">MC CONSULT</div>
<div class="t " style="left:1156.4px;top:2314.88px;font-size:28.5px;color:#222;transform:scaleY(1.06);transform-origin:0 26px;">A réception</div>
<div class="t " style="right:861.7px;top:2315.68px;font-size:28.5px;color:rgb(0,105,105);transform:scaleY(1.06);transform-origin:0 26px;">8 000,00</div>
<svg class="i" style="left:1732px;top:2312.48px;width:40px;height:40px" viewBox="0 0 40 40"><use href="#av"/></svg>
<div class="t " style="left:1778.5px;top:2314.38px;font-size:28.5px;color:rgb(10,20,100);transform:scaleY(1.06);transform-origin:0 26px;">Renaud Franck</div>
<div class="b" style="left:2238px;top:2309.98px;width:106px;height:44px;background:#cad2d2;border-radius:7px;"></div>
<div class="t " style="left:1991px;width:600px;text-align:center;top:2315.98px;font-size:27.5px;color:#777;font-weight:bold;transform:scaleY(1.06);transform-origin:0 25px;">Payée</div>
<div class="b" style="left:2418px;top:2316.48px;width:26px;height:26px;border:2.5px solid #767676;border-radius:5px;background:#fff;"></div>
<div class="b" style="left:486px;top:2372.2400000000002px;width:2014px;height:75.75999999999976px;background:#f9f9f9;"></div>
<div class="b" style="left:486px;top:2446.0px;width:2014px;height:2px;background:#dedede;"></div>
<svg class="i" style="left:502.00px;top:2390.64px;width:21.75px;height:29px;" viewBox="0 0 384 512"><path fill="#65953d" d="M377 105L279.1 7c-4.5-4.5-10.6-7-17-7H256v128h128v-6.1c0-6.3-2.5-12.4-7-16.9zm-153 31V0H24C10.7 0 0 10.7 0 24v464c0 13.3 10.7 24 24 24h336c13.3 0 24-10.7 24-24V160H248c-13.2 0-24-10.8-24-24zM64 72c0-4.42 3.58-8 8-8h80c4.42 0 8 3.58 8 8v16c0 4.42-3.58 8-8 8H72c-4.42 0-8-3.58-8-8V72zm0 80v-16c0-4.42 3.58-8 8-8h80c4.42 0 8 3.58 8 8v16c0 4.42-3.58 8-8 8H72c-4.42 0-8-3.58-8-8zm144 263.88V440c0 4.42-3.58 8-8 8h-16c-4.42 0-8-3.58-8-8v-24.29c-11.29-.58-22.27-4.52-31.37-11.35-3.9-2.93-4.1-8.77-.57-12.14l11.75-11.21c2.77-2.64 6.89-2.760 10.13-.73 3.87 2.42 8.26 3.72 12.82 3.72h28.11c6.5 0 11.8-5.92 11.8-13.19 0-5.95-3.61-11.19-8.77-12.73l-45-13.5c-18.59-5.58-31.58-23.42-31.58-43.39 0-24.52 19.05-44.44 42.67-45.07V232c0-4.42 3.58-8 8-8h16c4.42 0 8 3.58 8 8v24.29c11.29.58 22.27 4.51 31.37 11.35 3.9 2.93 4.1 8.77.57 12.14l-11.75 11.21c-2.77 2.64-6.89 2.76-10.13.73-3.87-2.43-8.26-3.72-12.82-3.72h-28.11c-6.5 0-11.8 5.92-11.8 13.19 0 5.95 3.61 11.19 8.77 12.73l45 13.5c18.59 5.58 31.58 23.42 31.58 43.39 0 24.53-19.05 44.44-42.67 45.07z"/></svg>
<div class="t " style="left:532px;top:2389.7400000000002px;font-size:28.5px;color:rgb(10,20,100);transform:scaleY(1.06);transform-origin:0 26px;">FA2008-0030</div>
<svg class="i" style="left:708.62px;top:2392.54px;width:29.00px;height:29px;" viewBox="0 0 512 512"><path fill="#a0a0a0" d="M216 0h80c13.3 0 24 10.7 24 24v168h87.7c17.8 0 26.7 21.5 14.1 34.1L269.7 378.3c-7.5 7.5-19.8 7.5-27.3 0L90.1 226.1c-12.6-12.6-3.7-34.1 14.1-34.1H192V24c0-13.3 10.7-24 24-24zm296 376v112c0 13.3-10.7 24-24 24H24c-13.3 0-24-10.7-24-24V376c0-13.3 10.7-24 24-24h146.7l49 49c20.1 20.1 52.5 20.1 72.6 0l49-49H488c13.3 0 24 10.7 24 24zm-124 88c0-11-9-20-20-20s-20 9-20 20 9 20 20 20 20-9 20-20zm64 0c0-11-9-20-20-20s-20 9-20 20 9 20 20 20 20-9 20-20z"/></svg>
<svg class="i" style="left:833.00px;top:2392.04px;width:25.81px;height:29.5px;" viewBox="0 0 448 512"><path fill="#6c6aa8" d="M436 480h-20V24c0-13.255-10.745-24-24-24H56C42.745 0 32 10.745 32 24v456H12c-6.627 0-12 5.373-12 12v20h448v-20c0-6.627-5.373-12-12-12zM128 76c0-6.627 5.373-12 12-12h40c6.627 0 12 5.373 12 12v40c0 6.627-5.373 12-12 12h-40c-6.627 0-12-5.373-12-12V76zm0 96c0-6.627 5.373-12 12-12h40c6.627 0 12 5.373 12 12v40c0 6.627-5.373 12-12 12h-40c-6.627 0-12-5.373-12-12v-40zm52 148h-40c-6.627 0-12-5.373-12-12v-40c0-6.627 5.373-12 12-12h40c6.627 0 12 5.373 12 12v40c0 6.627-5.373 12-12 12zm76 160h-64v-84c0-6.627 5.373-12 12-12h40c6.627 0 12 5.373 12 12v84zm64-172c0 6.627-5.373 12-12 12h-40c-6.627 0-12-5.373-12-12v-40c0-6.627 5.373-12 12-12h40c6.627 0 12 5.373 12 12v40zm0-96c0 6.627-5.373 12-12 12h-40c-6.627 0-12-5.373-12-12v-40c0-6.627 5.373-12 12-12h40c6.627 0 12 5.373 12 12v40zm0-96c0 6.627-5.373 12-12 12h-40c-6.627 0-12-5.373-12-12V76c0-6.627 5.373-12 12-12h40c6.627 0 12 5.373 12 12v40z"/></svg>
<div class="t " style="left:867.2px;top:2390.6400000000003px;font-size:28.5px;color:rgb(10,20,100);transform:scaleY(1.06);transform-origin:0 26px;">Société RO</div>
<div class="t " style="left:1156.4px;top:2390.6400000000003px;font-size:28.5px;color:#222;transform:scaleY(1.06);transform-origin:0 26px;">A réception</div>
<div class="t " style="right:861.7px;top:2391.44px;font-size:28.5px;color:rgb(0,105,105);transform:scaleY(1.06);transform-origin:0 26px;">500 000,00</div>
<svg class="i" style="left:1732px;top:2388.2400000000002px;width:40px;height:40px" viewBox="0 0 40 40"><use href="#av"/></svg>
<div class="t " style="left:1778.5px;top:2390.1400000000003px;font-size:28.5px;color:rgb(10,20,100);transform:scaleY(1.06);transform-origin:0 26px;">Renaud Franck</div>
<div class="b" style="left:2238px;top:2385.7400000000002px;width:106px;height:44px;background:#cad2d2;border-radius:7px;"></div>
<div class="t " style="left:1991px;width:600px;text-align:center;top:2391.7400000000002px;font-size:27.5px;color:#777;font-weight:bold;transform:scaleY(1.06);transform-origin:0 25px;">Payée</div>
<div class="b" style="left:2418px;top:2392.2400000000002px;width:26px;height:26px;border:2.5px solid #767676;border-radius:5px;background:#fff;"></div>
<div class="t " style="left:502.7px;top:2466.0px;font-size:28.5px;color:#888;transform:scaleY(1.06);transform-origin:0 26px;">Total</div>
<svg class="i" style="left:575.00px;top:2470.00px;width:24.50px;height:24.5px;" viewBox="0 0 512 512"><path fill="#dcdcdc" d="M256 8C119.043 8 8 119.083 8 256c0 136.997 111.043 248 248 248s248-111.003 248-248C504 119.083 392.957 8 256 8zm0 110c23.196 0 42 18.804 42 42s-18.804 42-42 42-42-18.804-42-42 18.804-42 42-42zm56 254c0 6.627-5.373 12-12 12h-88c-6.627 0-12-5.373-12-12v-24c0-6.627 5.373-12 12-12h12v-64h-12c-6.627 0-12-5.373-12-12v-24c0-6.627 5.373-12 12-12h64c6.627 0 12 5.373 12 12v100h12c6.627 0 12 5.373 12 12v24z"/></svg>
<div class="t " style="right:862px;top:2466.0px;font-size:28.5px;color:#888;transform:scaleY(1.06);transform-origin:0 26px;">1 754 293,50</div>
<div class="b" style="left:486px;top:2520.0px;width:2014px;height:2px;background:#dedede;"></div>
<div class="b" style="left:1580px;top:8px;width:952px;height:122px;border-radius:21px;background:rgb(226,240,218);opacity:0.95;box-shadow:3px 5px 6px rgba(0,0,0,0.45);"></div>
<div class="t " style="left:1622px;top:47px;font-size:36px;color:#446548;letter-spacing:1.75px;-webkit-text-stroke:0.5px #446548;">7 enregistrements modifiés</div>
<div class="b" style="left:1557px;top:-3px;width:998px;height:158px;border:11px solid #ff0000;"></div>
<div class="b" style="left:451px;top:543px;width:10px;height:536px;background:#ff0000;"></div>
<div class="b" style="left:451px;top:543px;width:67px;height:10px;background:#ff0000;"></div>
<div class="b" style="left:451px;top:1068.5px;width:67px;height:10.5px;background:#ff0000;"></div>
</body></html>
